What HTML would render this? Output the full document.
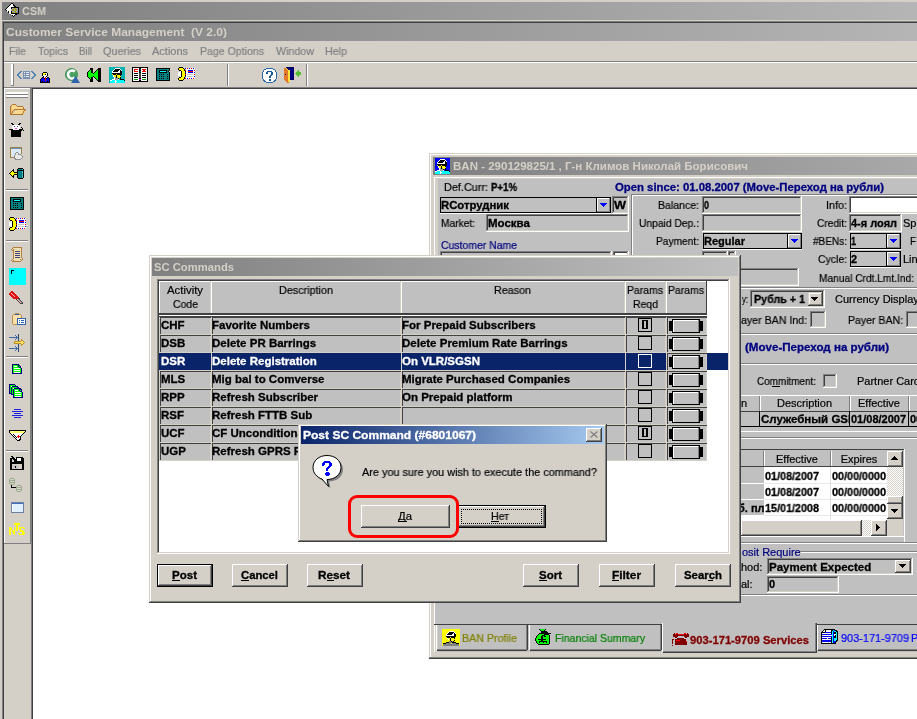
<!DOCTYPE html><html><head><meta charset="utf-8"><style>
html,body{margin:0;padding:0;width:917px;height:719px;overflow:hidden;background:#fff}
.a{position:absolute}
.t{position:absolute;white-space:pre;will-change:transform;-webkit-text-stroke:0.2px currentColor}
.t[style*="bold"]{-webkit-text-stroke:0.3px currentColor}
.t[style*="#d4d0c8"]{-webkit-text-stroke:0}
</style></head><body>
<div class="a" style="left:0px;top:0px;width:917px;height:719px;background:#fff"></div>
<div class="a" style="left:0px;top:0px;width:917px;height:23px;background:#d4d0c8"></div>
<div class="a" style="left:0px;top:0px;width:2px;height:719px;background:#d4d0c8"></div>
<div class="a" style="left:2px;top:2px;width:915px;height:18px;background:linear-gradient(to right,#808080,#c0c0c0 1100px)"></div>
<div class="t" style="left:22.00px;top:6px;font:bold 11px/11px 'Liberation Sans',sans-serif;color:#d4d0c8;transform:scaleX(0.9819);transform-origin:0 0;">CSM</div>
<div class="a" style="left:2px;top:21px;width:915px;height:1px;background:#808080"></div>
<div class="a" style="left:2px;top:21px;width:1px;height:698px;background:#808080"></div>
<div class="a" style="left:3px;top:22px;width:914px;height:1px;background:#404040"></div>
<div class="a" style="left:3px;top:22px;width:1px;height:697px;background:#404040"></div>
<div class="a" style="left:4px;top:23px;width:913px;height:18px;background:linear-gradient(to right,#808080,#c0c0c0 1100px)"></div>
<div class="t" style="left:6.00px;top:27px;font:bold 11px/11px 'Liberation Sans',sans-serif;color:#d4d0c8;transform:scaleX(1.0889);transform-origin:0 0;">Customer Service Management  (V 2.0)</div>
<div class="a" style="left:4px;top:41px;width:913px;height:20px;background:#d4d0c8"></div>
<div class="t" style="left:9.00px;top:46px;font:normal 11px/11px 'Liberation Sans',sans-serif;color:#808080;transform:scaleX(0.9593);transform-origin:0 0;">File</div>
<div class="t" style="left:38.00px;top:46px;font:normal 11px/11px 'Liberation Sans',sans-serif;color:#808080;transform:scaleX(0.9623);transform-origin:0 0;">Topics</div>
<div class="t" style="left:79.00px;top:46px;font:normal 11px/11px 'Liberation Sans',sans-serif;color:#808080;transform:scaleX(0.8859);transform-origin:0 0;">Bill</div>
<div class="t" style="left:103.00px;top:46px;font:normal 11px/11px 'Liberation Sans',sans-serif;color:#808080;transform:scaleX(0.9867);transform-origin:0 0;">Queries</div>
<div class="t" style="left:152.00px;top:46px;font:normal 11px/11px 'Liberation Sans',sans-serif;color:#808080;transform:scaleX(0.9981);transform-origin:0 0;">Actions</div>
<div class="t" style="left:200.00px;top:46px;font:normal 11px/11px 'Liberation Sans',sans-serif;color:#808080;transform:scaleX(0.9601);transform-origin:0 0;">Page Options</div>
<div class="t" style="left:276.00px;top:46px;font:normal 11px/11px 'Liberation Sans',sans-serif;color:#808080;transform:scaleX(0.9707);transform-origin:0 0;">Window</div>
<div class="t" style="left:325.00px;top:46px;font:normal 11px/11px 'Liberation Sans',sans-serif;color:#808080;transform:scaleX(0.9723);transform-origin:0 0;">Help</div>
<div class="a" style="left:4px;top:61px;width:913px;height:1px;background:#808080"></div>
<div class="a" style="left:4px;top:62px;width:913px;height:1px;background:#ffffff"></div>
<div class="a" style="left:4px;top:63px;width:913px;height:24px;background:#d4d0c8"></div>
<div class="a" style="left:4px;top:87px;width:913px;height:1px;background:#808080"></div>
<div class="a" style="left:11px;top:64px;width:1px;height:21px;background:#ffffff"></div>
<div class="a" style="left:12px;top:64px;width:1px;height:21px;background:#ffffff"></div>
<div class="a" style="left:13px;top:64px;width:1px;height:21px;background:#808080"></div>
<div class="a" style="left:11px;top:85px;width:3px;height:1px;background:#808080"></div>
<div class="a" style="left:227px;top:64px;width:1px;height:22px;background:#808080"></div>
<div class="a" style="left:228px;top:64px;width:1px;height:22px;background:#ffffff"></div>
<div class="a" style="left:306px;top:64px;width:1px;height:22px;background:#808080"></div>
<div class="a" style="left:307px;top:64px;width:1px;height:22px;background:#ffffff"></div>
<div class="a" style="left:4px;top:88px;width:28px;height:631px;background:#d4d0c8"></div>
<div class="a" style="left:4px;top:88px;width:27px;height:1px;background:#ffffff"></div>
<div class="a" style="left:4px;top:88px;width:1px;height:455px;background:#ffffff"></div>
<div class="a" style="left:30px;top:88px;width:1px;height:456px;background:#808080"></div>
<div class="a" style="left:4px;top:543px;width:27px;height:1px;background:#808080"></div>
<div class="a" style="left:31px;top:88px;width:1px;height:631px;background:#808080"></div>
<div class="a" style="left:6px;top:92px;width:22px;height:1px;background:#ffffff"></div>
<div class="a" style="left:6px;top:93px;width:22px;height:1px;background:#ffffff"></div>
<div class="a" style="left:6px;top:94px;width:22px;height:1px;background:#808080"></div>
<div class="a" style="left:6px;top:95px;width:22px;height:1px;background:#ffffff"></div>
<div class="a" style="left:6px;top:96px;width:22px;height:1px;background:#ffffff"></div>
<div class="a" style="left:6px;top:97px;width:22px;height:1px;background:#808080"></div>
<div class="a" style="left:6px;top:189px;width:22px;height:1px;background:#808080"></div>
<div class="a" style="left:6px;top:190px;width:22px;height:1px;background:#ffffff"></div>
<div class="a" style="left:6px;top:240px;width:22px;height:1px;background:#808080"></div>
<div class="a" style="left:6px;top:241px;width:22px;height:1px;background:#ffffff"></div>
<div class="a" style="left:6px;top:356px;width:22px;height:1px;background:#808080"></div>
<div class="a" style="left:6px;top:357px;width:22px;height:1px;background:#ffffff"></div>
<div class="a" style="left:6px;top:450px;width:22px;height:1px;background:#808080"></div>
<div class="a" style="left:6px;top:451px;width:22px;height:1px;background:#ffffff"></div>
<div class="a" style="left:32px;top:88px;width:1px;height:631px;background:#404040"></div>
<div class="a" style="left:32px;top:88px;width:885px;height:1px;background:#404040"></div>
<div class="a" style="left:429px;top:153px;width:488px;height:506px;background:#d4d0c8"></div>
<div class="a" style="left:430px;top:154px;width:487px;height:1px;background:#ffffff"></div>
<div class="a" style="left:430px;top:154px;width:1px;height:503px;background:#ffffff"></div>
<div class="a" style="left:429px;top:657px;width:488px;height:1px;background:#808080"></div>
<div class="a" style="left:429px;top:658px;width:488px;height:1px;background:#404040"></div>
<div class="a" style="left:433px;top:157px;width:484px;height:18px;background:linear-gradient(to right,#808080,#c0c0c0 760px)"></div>
<div class="t" style="left:453.00px;top:161px;font:bold 11px/11px 'Liberation Sans',sans-serif;color:#d4d0c8;transform:scaleX(1.0465);transform-origin:0 0;">BAN - 290129825/1 , Г-н Климов Николай Борисович</div>
<div class="a" style="left:434px;top:177px;width:483px;height:1px;background:#ffffff"></div>
<div class="a" style="left:434px;top:177px;width:1px;height:475px;background:#ffffff"></div>
<div class="a" style="left:438px;top:179px;width:479px;height:473px;background:#c0c0c0"></div>
<div class="t" style="left:444.00px;top:182px;font:normal 11px/11px 'Liberation Sans',sans-serif;color:#000;transform:scaleX(0.9862);transform-origin:0 0;">Def.Curr:</div>
<div class="t" style="left:491.00px;top:182px;font:bold 11px/11px 'Liberation Sans',sans-serif;color:#000;transform:scaleX(0.8767);transform-origin:0 0;">P+1%</div>
<div class="t" style="left:615.00px;top:182px;font:bold 11px/11px 'Liberation Sans',sans-serif;color:#000080;transform:scaleX(1.0299);transform-origin:0 0;">Open since: 01.08.2007 (Move-Переход на рубли)</div>
<div class="a" style="left:440px;top:197px;width:171px;height:16px;background:#c0c0c0"></div>
<div class="a" style="left:440px;top:197px;width:171px;height:16px;box-sizing:border-box;border:1px solid #000"></div>
<div class="a" style="left:440px;top:213px;width:171px;height:1px;background:#ffffff"></div>
<div class="a" style="left:596px;top:197px;width:1px;height:16px;background:#000"></div>
<div class="a" style="left:597px;top:198px;width:13px;height:14px;background:#c0c0c0"></div>
<div class="a" style="left:597px;top:198px;width:1px;height:14px;background:#ffffff"></div>
<div class="a" style="left:597px;top:198px;width:13px;height:1px;background:#ffffff"></div>
<div class="a" style="left:597px;top:211px;width:13px;height:1px;background:#808080"></div>
<div class="a" style="left:609px;top:198px;width:1px;height:14px;background:#808080"></div>
<svg class="a" style="left:600px;top:203px" width="7" height="4" viewBox="0 0 7 4" shape-rendering="crispEdges"><rect x="0" y="0" width="7" height="1" fill="#0000ff"/><rect x="1" y="1" width="5" height="1" fill="#0000ff"/><rect x="2" y="2" width="3" height="1" fill="#0000ff"/><rect x="3" y="3" width="1" height="1" fill="#0000ff"/></svg>
<div class="t" style="left:441.00px;top:200px;font:bold 11px/11px 'Liberation Sans',sans-serif;color:#000;transform:scaleX(1.0298);transform-origin:0 0;">RСотрудник</div>
<div class="a" style="left:612px;top:196px;width:17px;height:18px;background:#c0c0c0"></div>
<div class="a" style="left:612px;top:196px;width:17px;height:1px;background:#808080"></div>
<div class="a" style="left:612px;top:196px;width:1px;height:18px;background:#808080"></div>
<div class="a" style="left:613px;top:197px;width:15px;height:1px;background:#404040"></div>
<div class="a" style="left:613px;top:197px;width:1px;height:16px;background:#404040"></div>
<div class="a" style="left:612px;top:213px;width:17px;height:1px;background:#ffffff"></div>
<div class="a" style="left:628px;top:196px;width:1px;height:18px;background:#ffffff"></div>
<div class="a" style="left:613px;top:212px;width:15px;height:1px;background:#d4d0c8"></div>
<div class="a" style="left:627px;top:197px;width:1px;height:16px;background:#d4d0c8"></div>
<div class="t" style="left:614.00px;top:200px;font:bold 11px/11px 'Liberation Sans',sans-serif;color:#000;transform:scaleX(1.1556);transform-origin:0 0;">W</div>
<div class="t" style="left:441.00px;top:218px;font:normal 11px/11px 'Liberation Sans',sans-serif;color:#000;transform:scaleX(0.9271);transform-origin:0 0;">Market:</div>
<div class="a" style="left:486px;top:214px;width:143px;height:18px;background:#c0c0c0"></div>
<div class="a" style="left:486px;top:214px;width:143px;height:1px;background:#808080"></div>
<div class="a" style="left:486px;top:214px;width:1px;height:18px;background:#808080"></div>
<div class="a" style="left:487px;top:215px;width:141px;height:1px;background:#404040"></div>
<div class="a" style="left:487px;top:215px;width:1px;height:16px;background:#404040"></div>
<div class="a" style="left:486px;top:231px;width:143px;height:1px;background:#ffffff"></div>
<div class="a" style="left:628px;top:214px;width:1px;height:18px;background:#ffffff"></div>
<div class="a" style="left:487px;top:230px;width:141px;height:1px;background:#d4d0c8"></div>
<div class="a" style="left:627px;top:215px;width:1px;height:16px;background:#d4d0c8"></div>
<div class="t" style="left:488.00px;top:218px;font:bold 11px/11px 'Liberation Sans',sans-serif;color:#000;transform:scaleX(1.0455);transform-origin:0 0;">Москва</div>
<div class="t" style="left:441.00px;top:240px;font:normal 11px/11px 'Liberation Sans',sans-serif;color:#000080;transform:scaleX(0.9491);transform-origin:0 0;">Customer Name</div>
<div class="a" style="left:440px;top:251px;width:172px;height:8px;background:#c0c0c0"></div>
<div class="a" style="left:440px;top:251px;width:172px;height:1px;background:#808080"></div>
<div class="a" style="left:440px;top:251px;width:1px;height:8px;background:#808080"></div>
<div class="a" style="left:441px;top:252px;width:170px;height:1px;background:#404040"></div>
<div class="a" style="left:441px;top:252px;width:1px;height:6px;background:#404040"></div>
<div class="a" style="left:440px;top:258px;width:172px;height:1px;background:#ffffff"></div>
<div class="a" style="left:611px;top:251px;width:1px;height:8px;background:#ffffff"></div>
<div class="a" style="left:441px;top:257px;width:170px;height:1px;background:#d4d0c8"></div>
<div class="a" style="left:610px;top:252px;width:1px;height:6px;background:#d4d0c8"></div>
<div class="a" style="left:613px;top:251px;width:16px;height:8px;background:#fff"></div>
<div class="a" style="left:613px;top:251px;width:16px;height:1px;background:#808080"></div>
<div class="a" style="left:613px;top:251px;width:1px;height:8px;background:#808080"></div>
<div class="a" style="left:614px;top:252px;width:14px;height:1px;background:#404040"></div>
<div class="a" style="left:614px;top:252px;width:1px;height:6px;background:#404040"></div>
<div class="a" style="left:613px;top:258px;width:16px;height:1px;background:#ffffff"></div>
<div class="a" style="left:628px;top:251px;width:1px;height:8px;background:#ffffff"></div>
<div class="a" style="left:614px;top:257px;width:14px;height:1px;background:#d4d0c8"></div>
<div class="a" style="left:627px;top:252px;width:1px;height:6px;background:#d4d0c8"></div>
<div class="a" style="left:550px;top:255px;width:1px;height:2px;background:#000"></div>
<div class="a" style="left:553px;top:255px;width:1px;height:2px;background:#000"></div>
<div class="a" style="left:632px;top:194px;width:285px;height:1px;background:#808080"></div>
<div class="a" style="left:631px;top:194px;width:1px;height:61px;background:#808080"></div>
<div class="a" style="left:632px;top:195px;width:1px;height:60px;background:#ffffff"></div>
<div class="a" style="left:632px;top:195px;width:285px;height:1px;background:#ffffff"></div>
<div class="t" style="left:658.00px;top:200px;font:normal 11px/11px 'Liberation Sans',sans-serif;color:#000;transform:scaleX(0.9577);transform-origin:0 0;">Balance:</div>
<div class="t" style="left:639.00px;top:218px;font:normal 11px/11px 'Liberation Sans',sans-serif;color:#000;transform:scaleX(0.9345);transform-origin:0 0;">Unpaid Dep.:</div>
<div class="t" style="left:656.00px;top:236px;font:normal 11px/11px 'Liberation Sans',sans-serif;color:#000;transform:scaleX(0.9254);transform-origin:0 0;">Payment:</div>
<div class="a" style="left:702px;top:196px;width:100px;height:18px;background:#c0c0c0"></div>
<div class="a" style="left:702px;top:196px;width:100px;height:1px;background:#808080"></div>
<div class="a" style="left:702px;top:196px;width:1px;height:18px;background:#808080"></div>
<div class="a" style="left:703px;top:197px;width:98px;height:1px;background:#404040"></div>
<div class="a" style="left:703px;top:197px;width:1px;height:16px;background:#404040"></div>
<div class="a" style="left:702px;top:213px;width:100px;height:1px;background:#ffffff"></div>
<div class="a" style="left:801px;top:196px;width:1px;height:18px;background:#ffffff"></div>
<div class="a" style="left:703px;top:212px;width:98px;height:1px;background:#d4d0c8"></div>
<div class="a" style="left:800px;top:197px;width:1px;height:16px;background:#d4d0c8"></div>
<div class="t" style="left:704.00px;top:200px;font:bold 11px/11px 'Liberation Sans',sans-serif;color:#000;transform:scaleX(0.8175);transform-origin:0 0;">0</div>
<div class="a" style="left:702px;top:214px;width:100px;height:18px;background:#c0c0c0"></div>
<div class="a" style="left:702px;top:214px;width:100px;height:1px;background:#808080"></div>
<div class="a" style="left:702px;top:214px;width:1px;height:18px;background:#808080"></div>
<div class="a" style="left:703px;top:215px;width:98px;height:1px;background:#404040"></div>
<div class="a" style="left:703px;top:215px;width:1px;height:16px;background:#404040"></div>
<div class="a" style="left:702px;top:231px;width:100px;height:1px;background:#ffffff"></div>
<div class="a" style="left:801px;top:214px;width:1px;height:18px;background:#ffffff"></div>
<div class="a" style="left:703px;top:230px;width:98px;height:1px;background:#d4d0c8"></div>
<div class="a" style="left:800px;top:215px;width:1px;height:16px;background:#d4d0c8"></div>
<div class="a" style="left:703px;top:233px;width:99px;height:16px;background:#c0c0c0"></div>
<div class="a" style="left:703px;top:233px;width:99px;height:16px;box-sizing:border-box;border:1px solid #000"></div>
<div class="a" style="left:703px;top:249px;width:99px;height:1px;background:#ffffff"></div>
<div class="a" style="left:787px;top:233px;width:1px;height:16px;background:#000"></div>
<div class="a" style="left:788px;top:234px;width:13px;height:14px;background:#c0c0c0"></div>
<div class="a" style="left:788px;top:234px;width:1px;height:14px;background:#ffffff"></div>
<div class="a" style="left:788px;top:234px;width:13px;height:1px;background:#ffffff"></div>
<div class="a" style="left:788px;top:247px;width:13px;height:1px;background:#808080"></div>
<div class="a" style="left:800px;top:234px;width:1px;height:14px;background:#808080"></div>
<svg class="a" style="left:791px;top:239px" width="7" height="4" viewBox="0 0 7 4" shape-rendering="crispEdges"><rect x="0" y="0" width="7" height="1" fill="#0000ff"/><rect x="1" y="1" width="5" height="1" fill="#0000ff"/><rect x="2" y="2" width="3" height="1" fill="#0000ff"/><rect x="3" y="3" width="1" height="1" fill="#0000ff"/></svg>
<div class="t" style="left:704.00px;top:236px;font:bold 11px/11px 'Liberation Sans',sans-serif;color:#000;transform:scaleX(1.0011);transform-origin:0 0;">Regular</div>
<div class="a" style="left:702px;top:251px;width:26px;height:6px;background:#c0c0c0"></div>
<div class="a" style="left:702px;top:251px;width:26px;height:1px;background:#808080"></div>
<div class="a" style="left:702px;top:251px;width:1px;height:6px;background:#808080"></div>
<div class="a" style="left:703px;top:252px;width:24px;height:1px;background:#404040"></div>
<div class="a" style="left:703px;top:252px;width:1px;height:4px;background:#404040"></div>
<div class="a" style="left:702px;top:256px;width:26px;height:1px;background:#ffffff"></div>
<div class="a" style="left:727px;top:251px;width:1px;height:6px;background:#ffffff"></div>
<div class="a" style="left:703px;top:255px;width:24px;height:1px;background:#d4d0c8"></div>
<div class="a" style="left:726px;top:252px;width:1px;height:4px;background:#d4d0c8"></div>
<div class="a" style="left:728px;top:251px;width:8px;height:6px;background:#c0c0c0"></div>
<div class="a" style="left:728px;top:251px;width:8px;height:1px;background:#808080"></div>
<div class="a" style="left:728px;top:251px;width:1px;height:6px;background:#808080"></div>
<div class="a" style="left:729px;top:252px;width:6px;height:1px;background:#404040"></div>
<div class="a" style="left:729px;top:252px;width:1px;height:4px;background:#404040"></div>
<div class="a" style="left:728px;top:256px;width:8px;height:1px;background:#ffffff"></div>
<div class="a" style="left:735px;top:251px;width:1px;height:6px;background:#ffffff"></div>
<div class="a" style="left:729px;top:255px;width:6px;height:1px;background:#d4d0c8"></div>
<div class="a" style="left:734px;top:252px;width:1px;height:4px;background:#d4d0c8"></div>
<div class="t" style="left:826.00px;top:200px;font:normal 11px/11px 'Liberation Sans',sans-serif;color:#000;transform:scaleX(0.9810);transform-origin:0 0;">Info:</div>
<div class="a" style="left:849px;top:196px;width:80px;height:18px;background:#fff"></div>
<div class="a" style="left:849px;top:196px;width:80px;height:1px;background:#808080"></div>
<div class="a" style="left:849px;top:196px;width:1px;height:18px;background:#808080"></div>
<div class="a" style="left:850px;top:197px;width:78px;height:1px;background:#404040"></div>
<div class="a" style="left:850px;top:197px;width:1px;height:16px;background:#404040"></div>
<div class="a" style="left:849px;top:213px;width:80px;height:1px;background:#ffffff"></div>
<div class="a" style="left:928px;top:196px;width:1px;height:18px;background:#ffffff"></div>
<div class="a" style="left:850px;top:212px;width:78px;height:1px;background:#d4d0c8"></div>
<div class="a" style="left:927px;top:197px;width:1px;height:16px;background:#d4d0c8"></div>
<div class="t" style="left:817.00px;top:218px;font:normal 11px/11px 'Liberation Sans',sans-serif;color:#000;transform:scaleX(0.9261);transform-origin:0 0;">Credit:</div>
<div class="a" style="left:849px;top:214px;width:53px;height:18px;background:#c0c0c0"></div>
<div class="a" style="left:849px;top:214px;width:53px;height:1px;background:#808080"></div>
<div class="a" style="left:849px;top:214px;width:1px;height:18px;background:#808080"></div>
<div class="a" style="left:850px;top:215px;width:51px;height:1px;background:#404040"></div>
<div class="a" style="left:850px;top:215px;width:1px;height:16px;background:#404040"></div>
<div class="a" style="left:849px;top:231px;width:53px;height:1px;background:#ffffff"></div>
<div class="a" style="left:901px;top:214px;width:1px;height:18px;background:#ffffff"></div>
<div class="a" style="left:850px;top:230px;width:51px;height:1px;background:#d4d0c8"></div>
<div class="a" style="left:900px;top:215px;width:1px;height:16px;background:#d4d0c8"></div>
<div class="t" style="left:851.00px;top:218px;font:bold 11px/11px 'Liberation Sans',sans-serif;color:#000;transform:scaleX(0.9983);transform-origin:0 0;">4-я лоял</div>
<div class="t" style="left:903px;top:218px;font:normal 11px/11px 'Liberation Sans',sans-serif;color:#000;">Sp</div>
<div class="t" style="left:813.00px;top:236px;font:normal 11px/11px 'Liberation Sans',sans-serif;color:#000;transform:scaleX(0.9118);transform-origin:0 0;">#BENs:</div>
<div class="a" style="left:850px;top:233px;width:51px;height:16px;background:#c0c0c0"></div>
<div class="a" style="left:850px;top:233px;width:51px;height:16px;box-sizing:border-box;border:1px solid #000"></div>
<div class="a" style="left:850px;top:249px;width:51px;height:1px;background:#ffffff"></div>
<div class="a" style="left:886px;top:233px;width:1px;height:16px;background:#000"></div>
<div class="a" style="left:887px;top:234px;width:13px;height:14px;background:#c0c0c0"></div>
<div class="a" style="left:887px;top:234px;width:1px;height:14px;background:#ffffff"></div>
<div class="a" style="left:887px;top:234px;width:13px;height:1px;background:#ffffff"></div>
<div class="a" style="left:887px;top:247px;width:13px;height:1px;background:#808080"></div>
<div class="a" style="left:899px;top:234px;width:1px;height:14px;background:#808080"></div>
<svg class="a" style="left:890px;top:239px" width="7" height="4" viewBox="0 0 7 4" shape-rendering="crispEdges"><rect x="0" y="0" width="7" height="1" fill="#0000ff"/><rect x="1" y="1" width="5" height="1" fill="#0000ff"/><rect x="2" y="2" width="3" height="1" fill="#0000ff"/><rect x="3" y="3" width="1" height="1" fill="#0000ff"/></svg>
<div class="t" style="left:851.00px;top:236px;font:bold 11px/11px 'Liberation Sans',sans-serif;color:#000;transform:scaleX(0.8175);transform-origin:0 0;">1</div>
<div class="t" style="left:910.00px;top:236px;font:normal 11px/11px 'Liberation Sans',sans-serif;color:#000;transform:scaleX(0.8927);transform-origin:0 0;">F</div>
<div class="t" style="left:818.00px;top:254px;font:normal 11px/11px 'Liberation Sans',sans-serif;color:#000;transform:scaleX(0.9490);transform-origin:0 0;">Cycle:</div>
<div class="a" style="left:850px;top:251px;width:51px;height:16px;background:#c0c0c0"></div>
<div class="a" style="left:850px;top:251px;width:51px;height:16px;box-sizing:border-box;border:1px solid #000"></div>
<div class="a" style="left:850px;top:267px;width:51px;height:1px;background:#ffffff"></div>
<div class="a" style="left:886px;top:251px;width:1px;height:16px;background:#000"></div>
<div class="a" style="left:887px;top:252px;width:13px;height:14px;background:#c0c0c0"></div>
<div class="a" style="left:887px;top:252px;width:1px;height:14px;background:#ffffff"></div>
<div class="a" style="left:887px;top:252px;width:13px;height:1px;background:#ffffff"></div>
<div class="a" style="left:887px;top:265px;width:13px;height:1px;background:#808080"></div>
<div class="a" style="left:899px;top:252px;width:1px;height:14px;background:#808080"></div>
<svg class="a" style="left:890px;top:257px" width="7" height="4" viewBox="0 0 7 4" shape-rendering="crispEdges"><rect x="0" y="0" width="7" height="1" fill="#0000ff"/><rect x="1" y="1" width="5" height="1" fill="#0000ff"/><rect x="2" y="2" width="3" height="1" fill="#0000ff"/><rect x="3" y="3" width="1" height="1" fill="#0000ff"/></svg>
<div class="t" style="left:851.00px;top:254px;font:bold 11px/11px 'Liberation Sans',sans-serif;color:#000;transform:scaleX(0.9810);transform-origin:0 0;">2</div>
<div class="t" style="left:903px;top:254px;font:normal 11px/11px 'Liberation Sans',sans-serif;color:#000;">Lin</div>
<div class="a" style="left:738px;top:268px;width:61px;height:18px;background:#c0c0c0"></div>
<div class="a" style="left:738px;top:268px;width:61px;height:1px;background:#808080"></div>
<div class="a" style="left:738px;top:268px;width:1px;height:18px;background:#808080"></div>
<div class="a" style="left:739px;top:269px;width:59px;height:1px;background:#404040"></div>
<div class="a" style="left:739px;top:269px;width:1px;height:16px;background:#404040"></div>
<div class="a" style="left:738px;top:285px;width:61px;height:1px;background:#ffffff"></div>
<div class="a" style="left:798px;top:268px;width:1px;height:18px;background:#ffffff"></div>
<div class="a" style="left:739px;top:284px;width:59px;height:1px;background:#d4d0c8"></div>
<div class="a" style="left:797px;top:269px;width:1px;height:16px;background:#d4d0c8"></div>
<div class="t" style="left:819.00px;top:273px;font:normal 11px/11px 'Liberation Sans',sans-serif;color:#000;transform:scaleX(0.9250);transform-origin:0 0;">Manual Crdt.Lmt.Ind:</div>
<div class="a" style="left:438px;top:287px;width:479px;height:1px;background:#808080"></div>
<div class="a" style="left:438px;top:288px;width:479px;height:1px;background:#ffffff"></div>
<div class="t" style="left:742.00px;top:294px;font:normal 11px/11px 'Liberation Sans',sans-serif;color:#000;transform:scaleX(0.7011);transform-origin:0 0;">y:</div>
<div class="a" style="left:750px;top:290px;width:75px;height:18px;background:#c0c0c0"></div>
<div class="a" style="left:750px;top:290px;width:75px;height:1px;background:#808080"></div>
<div class="a" style="left:750px;top:290px;width:1px;height:18px;background:#808080"></div>
<div class="a" style="left:751px;top:291px;width:73px;height:1px;background:#404040"></div>
<div class="a" style="left:751px;top:291px;width:1px;height:16px;background:#404040"></div>
<div class="a" style="left:750px;top:307px;width:75px;height:1px;background:#ffffff"></div>
<div class="a" style="left:824px;top:290px;width:1px;height:18px;background:#ffffff"></div>
<div class="a" style="left:751px;top:306px;width:73px;height:1px;background:#d4d0c8"></div>
<div class="a" style="left:823px;top:291px;width:1px;height:16px;background:#d4d0c8"></div>
<div class="a" style="left:808px;top:292px;width:15px;height:14px;background:#d4d0c8"></div>
<div class="a" style="left:808px;top:292px;width:15px;height:1px;background:#d4d0c8"></div>
<div class="a" style="left:808px;top:305px;width:15px;height:1px;background:#404040"></div>
<div class="a" style="left:822px;top:292px;width:1px;height:14px;background:#404040"></div>
<div class="a" style="left:809px;top:304px;width:13px;height:1px;background:#808080"></div>
<div class="a" style="left:821px;top:293px;width:1px;height:12px;background:#808080"></div>
<div class="a" style="left:809px;top:293px;width:12px;height:1px;background:#ffffff"></div>
<div class="a" style="left:809px;top:293px;width:1px;height:11px;background:#ffffff"></div>
<svg class="a" style="left:811px;top:297px" width="8" height="4" viewBox="0 0 8 4" shape-rendering="crispEdges"><path d="M0 0H7L3.5 4Z" fill="#000"/></svg>
<div class="t" style="left:754.00px;top:294px;font:bold 11px/11px 'Liberation Sans',sans-serif;color:#000;transform:scaleX(0.9736);transform-origin:0 0;">Рубль + 1</div>
<div class="t" style="left:835px;top:294px;font:normal 11px/11px 'Liberation Sans',sans-serif;color:#000;">Currency Display</div>
<div class="t" style="left:741.00px;top:315px;font:normal 11px/11px 'Liberation Sans',sans-serif;color:#000;transform:scaleX(0.9639);transform-origin:0 0;">ayer BAN Ind:</div>
<div class="a" style="left:810px;top:311px;width:16px;height:17px;background:#c0c0c0"></div>
<div class="a" style="left:810px;top:311px;width:16px;height:1px;background:#808080"></div>
<div class="a" style="left:810px;top:311px;width:1px;height:17px;background:#808080"></div>
<div class="a" style="left:811px;top:312px;width:14px;height:1px;background:#404040"></div>
<div class="a" style="left:811px;top:312px;width:1px;height:15px;background:#404040"></div>
<div class="a" style="left:810px;top:327px;width:16px;height:1px;background:#ffffff"></div>
<div class="a" style="left:825px;top:311px;width:1px;height:17px;background:#ffffff"></div>
<div class="a" style="left:811px;top:326px;width:14px;height:1px;background:#d4d0c8"></div>
<div class="a" style="left:824px;top:312px;width:1px;height:15px;background:#d4d0c8"></div>
<div class="t" style="left:848.00px;top:315px;font:normal 11px/11px 'Liberation Sans',sans-serif;color:#000;transform:scaleX(0.9571);transform-origin:0 0;">Payer BAN:</div>
<div class="a" style="left:906px;top:311px;width:14px;height:17px;background:#c0c0c0"></div>
<div class="a" style="left:906px;top:311px;width:14px;height:1px;background:#808080"></div>
<div class="a" style="left:906px;top:311px;width:1px;height:17px;background:#808080"></div>
<div class="a" style="left:907px;top:312px;width:12px;height:1px;background:#404040"></div>
<div class="a" style="left:907px;top:312px;width:1px;height:15px;background:#404040"></div>
<div class="a" style="left:906px;top:327px;width:14px;height:1px;background:#ffffff"></div>
<div class="a" style="left:919px;top:311px;width:1px;height:17px;background:#ffffff"></div>
<div class="a" style="left:907px;top:326px;width:12px;height:1px;background:#d4d0c8"></div>
<div class="a" style="left:918px;top:312px;width:1px;height:15px;background:#d4d0c8"></div>
<div class="a" style="left:438px;top:333px;width:479px;height:1px;background:#808080"></div>
<div class="a" style="left:438px;top:334px;width:479px;height:1px;background:#ffffff"></div>
<div class="t" style="left:745.00px;top:342px;font:bold 11px/11px 'Liberation Sans',sans-serif;color:#000080;transform:scaleX(1.0506);transform-origin:0 0;">(Move-Переход на рубли)</div>
<div class="a" style="left:438px;top:363px;width:479px;height:1px;background:#808080"></div>
<div class="a" style="left:438px;top:364px;width:479px;height:1px;background:#ffffff"></div>
<div class="t" style="left:757.00px;top:376px;font:normal 11px/11px 'Liberation Sans',sans-serif;color:#000;transform:scaleX(0.9022);transform-origin:0 0;">Commitment:</div>
<div class="a" style="left:772px;top:386px;width:8px;height:1px;background:#000"></div>
<div class="a" style="left:823px;top:374px;width:14px;height:14px;background:#c0c0c0"></div>
<div class="a" style="left:823px;top:374px;width:14px;height:1px;background:#808080"></div>
<div class="a" style="left:823px;top:374px;width:1px;height:14px;background:#808080"></div>
<div class="a" style="left:824px;top:375px;width:12px;height:1px;background:#404040"></div>
<div class="a" style="left:824px;top:375px;width:1px;height:12px;background:#404040"></div>
<div class="a" style="left:823px;top:387px;width:14px;height:1px;background:#ffffff"></div>
<div class="a" style="left:836px;top:374px;width:1px;height:14px;background:#ffffff"></div>
<div class="a" style="left:824px;top:386px;width:12px;height:1px;background:#d4d0c8"></div>
<div class="a" style="left:835px;top:375px;width:1px;height:12px;background:#d4d0c8"></div>
<div class="t" style="left:857px;top:376px;font:normal 11px/11px 'Liberation Sans',sans-serif;color:#000;">Partner Card</div>
<div class="a" style="left:741px;top:395px;width:176px;height:1px;background:#ffffff"></div>
<div class="a" style="left:760px;top:395px;width:1px;height:16px;background:#ffffff"></div>
<div class="a" style="left:850px;top:395px;width:1px;height:16px;background:#ffffff"></div>
<div class="a" style="left:909px;top:395px;width:1px;height:16px;background:#ffffff"></div>
<div class="a" style="left:759px;top:396px;width:1px;height:15px;background:#808080"></div>
<div class="a" style="left:849px;top:396px;width:1px;height:15px;background:#808080"></div>
<div class="a" style="left:908px;top:396px;width:1px;height:15px;background:#808080"></div>
<div class="t" style="left:741px;top:398px;font:normal 11px/11px 'Liberation Sans',sans-serif;color:#000;">n</div>
<div class="t" style="left:760px;width:89px;text-align:center;top:398px;font:normal 11px/11px 'Liberation Sans',sans-serif;color:#000;">Description</div>
<div class="t" style="left:850px;width:58px;text-align:center;top:398px;font:normal 11px/11px 'Liberation Sans',sans-serif;color:#000;">Effective</div>
<div class="a" style="left:741px;top:411px;width:176px;height:1px;background:#404040"></div>
<div class="a" style="left:741px;top:426px;width:176px;height:1px;background:#000"></div>
<div class="a" style="left:759px;top:411px;width:1px;height:16px;background:#000"></div>
<div class="a" style="left:849px;top:411px;width:1px;height:16px;background:#000"></div>
<div class="a" style="left:908px;top:411px;width:1px;height:16px;background:#000"></div>
<div class="a" style="left:761px;top:412px;width:88px;height:14px;overflow:hidden">
<div class="t" style="left:0px;top:2px;font:bold 11.5px/11.5px 'Liberation Sans',sans-serif;color:#000;">Служебный GSM</div>
</div>
<div class="t" style="left:851.00px;top:414px;font:bold 11px/11px 'Liberation Sans',sans-serif;color:#000;transform:scaleX(0.9990);transform-origin:0 0;">01/08/2007</div>
<div class="t" style="left:910px;top:414px;font:bold 11px/11px 'Liberation Sans',sans-serif;color:#000;">00/00/0000</div>
<div class="a" style="left:741px;top:431px;width:176px;height:1px;background:#ffffff"></div>
<div class="a" style="left:741px;top:437px;width:176px;height:1px;background:#808080"></div>
<div class="a" style="left:741px;top:438px;width:176px;height:1px;background:#ffffff"></div>
<div class="a" style="left:741px;top:449px;width:164px;height:1px;background:#404040"></div>
<div class="a" style="left:904px;top:449px;width:1px;height:94px;background:#ffffff"></div>
<div class="a" style="left:741px;top:450px;width:163px;height:93px;background:#c0c0c0"></div>
<div class="a" style="left:764px;top:451px;width:1px;height:15px;background:#ffffff"></div>
<div class="a" style="left:831px;top:451px;width:1px;height:15px;background:#ffffff"></div>
<div class="a" style="left:763px;top:451px;width:1px;height:15px;background:#808080"></div>
<div class="a" style="left:830px;top:451px;width:1px;height:15px;background:#808080"></div>
<div class="t" style="left:764px;width:66px;text-align:center;top:454px;font:normal 11px/11px 'Liberation Sans',sans-serif;color:#000;">Effective</div>
<div class="t" style="left:831px;width:56px;text-align:center;top:454px;font:normal 11px/11px 'Liberation Sans',sans-serif;color:#000;">Expires</div>
<div class="a" style="left:741px;top:466px;width:146px;height:1px;background:#404040"></div>
<div class="a" style="left:764px;top:467px;width:123px;height:53px;background:#fff"></div>
<div class="a" style="left:741px;top:515px;width:23px;height:5px;background:#fff"></div>
<div class="t" style="left:765.00px;top:471px;font:bold 11px/11px 'Liberation Sans',sans-serif;color:#000;transform:scaleX(0.9808);transform-origin:0 0;">01/08/2007</div>
<div class="t" style="left:832.00px;top:471px;font:bold 11px/11px 'Liberation Sans',sans-serif;color:#000;transform:scaleX(0.9808);transform-origin:0 0;">00/00/0000</div>
<div class="a" style="left:741px;top:483px;width:23px;height:1px;background:#ffffff"></div>
<div class="a" style="left:764px;top:483px;width:123px;height:1px;background:#e8e8e8"></div>
<div class="t" style="left:765.00px;top:487px;font:bold 11px/11px 'Liberation Sans',sans-serif;color:#000;transform:scaleX(0.9808);transform-origin:0 0;">01/08/2007</div>
<div class="t" style="left:832.00px;top:487px;font:bold 11px/11px 'Liberation Sans',sans-serif;color:#000;transform:scaleX(0.9808);transform-origin:0 0;">00/00/0000</div>
<div class="a" style="left:741px;top:499px;width:23px;height:1px;background:#ffffff"></div>
<div class="a" style="left:764px;top:499px;width:123px;height:1px;background:#e8e8e8"></div>
<div class="t" style="left:765.00px;top:503px;font:bold 11px/11px 'Liberation Sans',sans-serif;color:#000;transform:scaleX(0.9808);transform-origin:0 0;">15/01/2008</div>
<div class="t" style="left:832.00px;top:503px;font:bold 11px/11px 'Liberation Sans',sans-serif;color:#000;transform:scaleX(0.9808);transform-origin:0 0;">00/00/0000</div>
<div class="a" style="left:741px;top:515px;width:23px;height:1px;background:#ffffff"></div>
<div class="a" style="left:764px;top:515px;width:123px;height:1px;background:#e8e8e8"></div>
<div class="a" style="left:830px;top:467px;width:1px;height:52px;background:#e0e0e0"></div>
<div class="a" style="left:741px;top:500px;width:23px;height:15px;overflow:hidden">
<div class="t" style="left:-3px;top:3px;font:bold 11px/11px 'Liberation Sans',sans-serif;color:#000;">б. пл</div>
</div>
<div class="a" style="left:887px;top:467px;width:16px;height:53px;background:repeating-conic-gradient(#fff 0 25%,#d4d0c8 0 50%) 0 0/2px 2px"></div>
<div class="a" style="left:887px;top:451px;width:16px;height:16px;background:#d4d0c8"></div>
<div class="a" style="left:887px;top:451px;width:16px;height:1px;background:#ffffff"></div>
<div class="a" style="left:887px;top:451px;width:1px;height:16px;background:#ffffff"></div>
<div class="a" style="left:887px;top:466px;width:16px;height:1px;background:#404040"></div>
<div class="a" style="left:902px;top:451px;width:1px;height:16px;background:#404040"></div>
<div class="a" style="left:888px;top:465px;width:14px;height:1px;background:#808080"></div>
<div class="a" style="left:901px;top:452px;width:1px;height:14px;background:#808080"></div>
<svg class="a" style="left:891px;top:456px" width="8" height="5" viewBox="0 0 8 5" shape-rendering="crispEdges"><path d="M0 4H7L3.5 0Z" fill="#000"/></svg>
<div class="a" style="left:887px;top:503px;width:16px;height:16px;background:#d4d0c8"></div>
<div class="a" style="left:887px;top:503px;width:16px;height:1px;background:#ffffff"></div>
<div class="a" style="left:887px;top:503px;width:1px;height:16px;background:#ffffff"></div>
<div class="a" style="left:887px;top:518px;width:16px;height:1px;background:#404040"></div>
<div class="a" style="left:902px;top:503px;width:1px;height:16px;background:#404040"></div>
<div class="a" style="left:888px;top:517px;width:14px;height:1px;background:#808080"></div>
<div class="a" style="left:901px;top:504px;width:1px;height:14px;background:#808080"></div>
<svg class="a" style="left:891px;top:509px" width="8" height="5" viewBox="0 0 8 5" shape-rendering="crispEdges"><path d="M0 0H7L3.5 4Z" fill="#000"/></svg>
<div class="a" style="left:887px;top:496px;width:16px;height:8px;background:#d4d0c8"></div>
<div class="a" style="left:887px;top:496px;width:16px;height:1px;background:#ffffff"></div>
<div class="a" style="left:887px;top:496px;width:1px;height:8px;background:#ffffff"></div>
<div class="a" style="left:887px;top:503px;width:16px;height:1px;background:#404040"></div>
<div class="a" style="left:902px;top:496px;width:1px;height:8px;background:#404040"></div>
<div class="a" style="left:888px;top:502px;width:14px;height:1px;background:#808080"></div>
<div class="a" style="left:901px;top:497px;width:1px;height:6px;background:#808080"></div>
<div class="a" style="left:887px;top:519px;width:16px;height:17px;background:#d4d0c8"></div>
<div class="a" style="left:741px;top:520px;width:146px;height:16px;background:#d4d0c8"></div>
<div class="a" style="left:741px;top:520px;width:121px;height:16px;background:#d4d0c8"></div>
<div class="a" style="left:741px;top:520px;width:121px;height:1px;background:#ffffff"></div>
<div class="a" style="left:741px;top:520px;width:1px;height:16px;background:#ffffff"></div>
<div class="a" style="left:741px;top:535px;width:121px;height:1px;background:#404040"></div>
<div class="a" style="left:861px;top:520px;width:1px;height:16px;background:#404040"></div>
<div class="a" style="left:742px;top:534px;width:119px;height:1px;background:#808080"></div>
<div class="a" style="left:860px;top:521px;width:1px;height:14px;background:#808080"></div>
<div class="a" style="left:862px;top:520px;width:9px;height:16px;background:repeating-conic-gradient(#fff 0 25%,#d4d0c8 0 50%) 0 0/2px 2px"></div>
<div class="a" style="left:871px;top:520px;width:16px;height:16px;background:#d4d0c8"></div>
<div class="a" style="left:871px;top:520px;width:16px;height:1px;background:#ffffff"></div>
<div class="a" style="left:871px;top:520px;width:1px;height:16px;background:#ffffff"></div>
<div class="a" style="left:871px;top:535px;width:16px;height:1px;background:#404040"></div>
<div class="a" style="left:886px;top:520px;width:1px;height:16px;background:#404040"></div>
<div class="a" style="left:872px;top:534px;width:14px;height:1px;background:#808080"></div>
<div class="a" style="left:885px;top:521px;width:1px;height:14px;background:#808080"></div>
<svg class="a" style="left:876px;top:524px" width="5" height="8" viewBox="0 0 5 8" shape-rendering="crispEdges"><path d="M0 0V7L4 3.5Z" fill="#000"/></svg>
<div class="a" style="left:741px;top:536px;width:164px;height:1px;background:#ffffff"></div>
<div class="a" style="left:741px;top:542px;width:176px;height:1px;background:#808080"></div>
<div class="a" style="left:741px;top:543px;width:176px;height:1px;background:#ffffff"></div>
<div class="a" style="left:800px;top:551px;width:117px;height:1px;background:#808080"></div>
<div class="a" style="left:800px;top:552px;width:117px;height:1px;background:#ffffff"></div>
<div class="t" style="left:742px;top:547px;font:normal 11px/11px 'Liberation Sans',sans-serif;color:#000080;">osit Require</div>
<div class="t" style="left:741px;top:562px;font:normal 11px/11px 'Liberation Sans',sans-serif;color:#000;">hod:</div>
<div class="a" style="left:767px;top:558px;width:146px;height:17px;background:#c0c0c0"></div>
<div class="a" style="left:767px;top:558px;width:146px;height:1px;background:#808080"></div>
<div class="a" style="left:767px;top:558px;width:1px;height:17px;background:#808080"></div>
<div class="a" style="left:768px;top:559px;width:144px;height:1px;background:#404040"></div>
<div class="a" style="left:768px;top:559px;width:1px;height:15px;background:#404040"></div>
<div class="a" style="left:767px;top:574px;width:146px;height:1px;background:#ffffff"></div>
<div class="a" style="left:912px;top:558px;width:1px;height:17px;background:#ffffff"></div>
<div class="a" style="left:768px;top:573px;width:144px;height:1px;background:#d4d0c8"></div>
<div class="a" style="left:911px;top:559px;width:1px;height:15px;background:#d4d0c8"></div>
<div class="t" style="left:769px;top:562px;font:bold 11.5px/11.5px 'Liberation Sans',sans-serif;color:#000;">Payment Expected</div>
<div class="a" style="left:895px;top:560px;width:16px;height:13px;background:#d4d0c8"></div>
<div class="a" style="left:895px;top:560px;width:16px;height:1px;background:#ffffff"></div>
<div class="a" style="left:895px;top:560px;width:1px;height:13px;background:#ffffff"></div>
<div class="a" style="left:895px;top:572px;width:16px;height:1px;background:#404040"></div>
<div class="a" style="left:910px;top:560px;width:1px;height:13px;background:#404040"></div>
<div class="a" style="left:896px;top:571px;width:14px;height:1px;background:#808080"></div>
<div class="a" style="left:909px;top:561px;width:1px;height:11px;background:#808080"></div>
<svg class="a" style="left:899px;top:564px" width="8" height="4" viewBox="0 0 8 4" shape-rendering="crispEdges"><path d="M0 0H7L3.5 4Z" fill="#000"/></svg>
<div class="t" style="left:741px;top:579px;font:normal 11px/11px 'Liberation Sans',sans-serif;color:#000;">al:</div>
<div class="a" style="left:767px;top:576px;width:72px;height:17px;background:#c0c0c0"></div>
<div class="a" style="left:767px;top:576px;width:72px;height:1px;background:#808080"></div>
<div class="a" style="left:767px;top:576px;width:1px;height:17px;background:#808080"></div>
<div class="a" style="left:768px;top:577px;width:70px;height:1px;background:#404040"></div>
<div class="a" style="left:768px;top:577px;width:1px;height:15px;background:#404040"></div>
<div class="a" style="left:767px;top:592px;width:72px;height:1px;background:#ffffff"></div>
<div class="a" style="left:838px;top:576px;width:1px;height:17px;background:#ffffff"></div>
<div class="a" style="left:768px;top:591px;width:70px;height:1px;background:#d4d0c8"></div>
<div class="a" style="left:837px;top:577px;width:1px;height:15px;background:#d4d0c8"></div>
<div class="t" style="left:769px;top:579px;font:bold 11px/11px 'Liberation Sans',sans-serif;color:#000;">0</div>
<div class="a" style="left:741px;top:594px;width:176px;height:1px;background:#808080"></div>
<div class="a" style="left:741px;top:595px;width:176px;height:1px;background:#ffffff"></div>
<div class="a" style="left:435px;top:560px;width:3px;height:64px;background:#c0c0c0"></div>
<div class="a" style="left:434px;top:624px;width:483px;height:1px;background:#404040"></div>
<div class="a" style="left:436px;top:625px;width:1px;height:25px;background:#ffffff"></div>
<div class="a" style="left:437px;top:650px;width:90px;height:1px;background:#404040"></div>
<div class="a" style="left:437px;top:649px;width:89px;height:1px;background:#808080"></div>
<div class="a" style="left:527px;top:625px;width:1px;height:25px;background:#404040"></div>
<div class="a" style="left:526px;top:625px;width:1px;height:25px;background:#808080"></div>
<div class="a" style="left:529px;top:625px;width:1px;height:25px;background:#ffffff"></div>
<div class="a" style="left:530px;top:650px;width:131px;height:1px;background:#404040"></div>
<div class="a" style="left:530px;top:649px;width:130px;height:1px;background:#808080"></div>
<div class="a" style="left:661px;top:625px;width:1px;height:25px;background:#404040"></div>
<div class="a" style="left:660px;top:625px;width:1px;height:25px;background:#808080"></div>
<div class="a" style="left:817px;top:625px;width:1px;height:25px;background:#ffffff"></div>
<div class="a" style="left:818px;top:650px;width:118px;height:1px;background:#404040"></div>
<div class="a" style="left:818px;top:649px;width:117px;height:1px;background:#808080"></div>
<div class="a" style="left:936px;top:625px;width:1px;height:25px;background:#404040"></div>
<div class="a" style="left:935px;top:625px;width:1px;height:25px;background:#808080"></div>
<div class="a" style="left:662px;top:623px;width:155px;height:29px;background:#c0c0c0"></div>
<div class="a" style="left:662px;top:623px;width:1px;height:29px;background:#ffffff"></div>
<div class="a" style="left:663px;top:652px;width:154px;height:1px;background:#404040"></div>
<div class="a" style="left:663px;top:651px;width:153px;height:1px;background:#808080"></div>
<div class="a" style="left:816px;top:623px;width:1px;height:30px;background:#404040"></div>
<div class="a" style="left:815px;top:623px;width:1px;height:29px;background:#808080"></div>
<div class="t" style="left:462.00px;top:633px;font:normal 11px/11px 'Liberation Sans',sans-serif;color:#808000;transform:scaleX(0.9673);transform-origin:0 0;">BAN Profile</div>
<div class="t" style="left:555.00px;top:633px;font:normal 11px/11px 'Liberation Sans',sans-serif;color:#008000;transform:scaleX(0.9560);transform-origin:0 0;">Financial Summary</div>
<div class="t" style="left:690.00px;top:635px;font:bold 11px/11px 'Liberation Sans',sans-serif;color:#800000;transform:scaleX(1.0187);transform-origin:0 0;">903-171-9709 Services</div>
<div class="t" style="left:841.00px;top:633px;font:normal 11px/11px 'Liberation Sans',sans-serif;color:#0000ff;transform:scaleX(0.9926);transform-origin:0 0;">903-171-9709</div>
<div class="t" style="left:911px;top:633px;font:normal 11px/11px 'Liberation Sans',sans-serif;color:#0000ff;">P</div>
<div class="a" style="left:434px;top:653px;width:483px;height:4px;background:#d4d0c8"></div>
<div class="a" style="left:149px;top:255px;width:592px;height:348px;background:#d4d0c8"></div>
<div class="a" style="left:150px;top:256px;width:590px;height:1px;background:#ffffff"></div>
<div class="a" style="left:150px;top:256px;width:1px;height:346px;background:#ffffff"></div>
<div class="a" style="left:739px;top:256px;width:1px;height:346px;background:#808080"></div>
<div class="a" style="left:740px;top:255px;width:1px;height:348px;background:#404040"></div>
<div class="a" style="left:150px;top:601px;width:590px;height:1px;background:#808080"></div>
<div class="a" style="left:149px;top:602px;width:592px;height:1px;background:#404040"></div>
<div class="a" style="left:152px;top:258px;width:586px;height:18px;background:linear-gradient(to right,#808080,#c0c0c0)"></div>
<div class="t" style="left:154.00px;top:262px;font:bold 11px/11px 'Liberation Sans',sans-serif;color:#d4d0c8;transform:scaleX(1.0226);transform-origin:0 0;">SC Commands</div>
<div class="a" style="left:157px;top:279px;width:572px;height:1px;background:#808080"></div>
<div class="a" style="left:157px;top:279px;width:1px;height:274px;background:#808080"></div>
<div class="a" style="left:158px;top:280px;width:570px;height:1px;background:#404040"></div>
<div class="a" style="left:158px;top:280px;width:1px;height:272px;background:#404040"></div>
<div class="a" style="left:157px;top:553px;width:573px;height:1px;background:#ffffff"></div>
<div class="a" style="left:729px;top:279px;width:1px;height:275px;background:#ffffff"></div>
<div class="a" style="left:158px;top:552px;width:571px;height:1px;background:#d4d0c8"></div>
<div class="a" style="left:728px;top:280px;width:1px;height:273px;background:#d4d0c8"></div>
<div class="a" style="left:159px;top:281px;width:569px;height:271px;background:#fff"></div>
<div class="a" style="left:159px;top:281px;width:548px;height:32px;background:#c0c0c0"></div>
<div class="a" style="left:159px;top:281px;width:547px;height:1px;background:#ffffff"></div>
<div class="a" style="left:159px;top:281px;width:1px;height:32px;background:#ffffff"></div>
<div class="a" style="left:210px;top:281px;width:1px;height:32px;background:#d4d0c8"></div>
<div class="a" style="left:211px;top:281px;width:1px;height:32px;background:#ffffff"></div>
<div class="a" style="left:400px;top:281px;width:1px;height:32px;background:#d4d0c8"></div>
<div class="a" style="left:401px;top:281px;width:1px;height:32px;background:#ffffff"></div>
<div class="a" style="left:624px;top:281px;width:1px;height:32px;background:#d4d0c8"></div>
<div class="a" style="left:625px;top:281px;width:1px;height:32px;background:#ffffff"></div>
<div class="a" style="left:665px;top:281px;width:1px;height:32px;background:#d4d0c8"></div>
<div class="a" style="left:666px;top:281px;width:1px;height:32px;background:#ffffff"></div>
<div class="a" style="left:706px;top:281px;width:1px;height:32px;background:#d4d0c8"></div>
<div class="a" style="left:706px;top:281px;width:1px;height:32px;background:#404040"></div>
<div class="a" style="left:159px;top:313px;width:548px;height:1px;background:#404040"></div>
<div class="a" style="left:159px;top:314px;width:548px;height:1px;background:#404040"></div>
<div class="a" style="left:159px;top:315px;width:548px;height:1px;background:#ffffff"></div>
<div class="a" style="left:159px;top:316px;width:548px;height:1px;background:#404040"></div>
<div class="t" style="left:167.00px;top:285px;font:normal 11px/11px 'Liberation Sans',sans-serif;color:#000;transform:scaleX(1.0334);transform-origin:0 0;">Activity</div>
<div class="t" style="left:173.00px;top:299px;font:normal 11px/11px 'Liberation Sans',sans-serif;color:#000;transform:scaleX(0.9505);transform-origin:0 0;">Code</div>
<div class="t" style="left:279.00px;top:285px;font:normal 11px/11px 'Liberation Sans',sans-serif;color:#000;transform:scaleX(0.9814);transform-origin:0 0;">Description</div>
<div class="t" style="left:494.00px;top:285px;font:normal 11px/11px 'Liberation Sans',sans-serif;color:#000;transform:scaleX(0.9758);transform-origin:0 0;">Reason</div>
<div class="t" style="left:627.00px;top:285px;font:normal 11px/11px 'Liberation Sans',sans-serif;color:#000;transform:scaleX(0.9500);transform-origin:0 0;">Params</div>
<div class="t" style="left:633.00px;top:299px;font:normal 11px/11px 'Liberation Sans',sans-serif;color:#000;transform:scaleX(0.9505);transform-origin:0 0;">Reqd</div>
<div class="t" style="left:668.00px;top:285px;font:normal 11px/11px 'Liberation Sans',sans-serif;color:#000;transform:scaleX(0.9500);transform-origin:0 0;">Params</div>
<div class="a" style="left:159px;top:317px;width:548px;height:18px;background:#d4d0c8"></div>
<div class="a" style="left:160px;top:318px;width:50px;height:16px;background:#c0c0c0"></div>
<div class="a" style="left:160px;top:317px;width:51px;height:1px;background:#404040"></div>
<div class="a" style="left:160px;top:317px;width:1px;height:17px;background:#404040"></div>
<div class="a" style="left:212px;top:318px;width:188px;height:16px;background:#c0c0c0"></div>
<div class="a" style="left:212px;top:317px;width:189px;height:1px;background:#404040"></div>
<div class="a" style="left:212px;top:317px;width:1px;height:17px;background:#404040"></div>
<div class="a" style="left:402px;top:318px;width:222px;height:16px;background:#c0c0c0"></div>
<div class="a" style="left:402px;top:317px;width:223px;height:1px;background:#404040"></div>
<div class="a" style="left:402px;top:317px;width:1px;height:17px;background:#404040"></div>
<div class="a" style="left:626px;top:318px;width:39px;height:16px;background:#c0c0c0"></div>
<div class="a" style="left:626px;top:317px;width:40px;height:1px;background:#404040"></div>
<div class="a" style="left:626px;top:317px;width:1px;height:17px;background:#404040"></div>
<div class="a" style="left:667px;top:318px;width:39px;height:16px;background:#c0c0c0"></div>
<div class="a" style="left:667px;top:317px;width:40px;height:1px;background:#404040"></div>
<div class="a" style="left:667px;top:317px;width:1px;height:17px;background:#404040"></div>
<div class="t" style="left:161px;top:320px;font:bold 11.5px/11.5px 'Liberation Sans',sans-serif;color:#000;">CHF</div>
<div class="t" style="left:212px;top:320px;font:bold 11.5px/11.5px 'Liberation Sans',sans-serif;color:#000;">Favorite Numbers</div>
<div class="t" style="left:402px;top:320px;font:bold 11.5px/11.5px 'Liberation Sans',sans-serif;color:#000;">For Prepaid Subscribers</div>
<div class="a" style="left:638px;top:318px;width:14px;height:14px;box-sizing:border-box;border:1px solid #000"></div>
<div class="a" style="left:642px;top:320px;width:6px;height:9px;background:#000"></div>
<div class="a" style="left:644px;top:321px;width:2px;height:7px;background:#c0c0c0"></div>
<div class="a" style="left:672px;top:319px;width:28px;height:14px;background:#000"></div>
<div class="a" style="left:673px;top:320px;width:26px;height:12px;background:#c0c0c0"></div>
<div class="a" style="left:673px;top:320px;width:1px;height:12px;background:#ffffff"></div>
<div class="a" style="left:673px;top:320px;width:26px;height:1px;background:#ffffff"></div>
<div class="a" style="left:698px;top:320px;width:1px;height:12px;background:#808080"></div>
<div class="a" style="left:669px;top:321px;width:3px;height:10px;background:#000"></div>
<div class="a" style="left:700px;top:321px;width:3px;height:10px;background:#000"></div>
<div class="a" style="left:159px;top:335px;width:548px;height:18px;background:#d4d0c8"></div>
<div class="a" style="left:160px;top:336px;width:50px;height:16px;background:#c0c0c0"></div>
<div class="a" style="left:160px;top:335px;width:51px;height:1px;background:#404040"></div>
<div class="a" style="left:160px;top:335px;width:1px;height:17px;background:#404040"></div>
<div class="a" style="left:212px;top:336px;width:188px;height:16px;background:#c0c0c0"></div>
<div class="a" style="left:212px;top:335px;width:189px;height:1px;background:#404040"></div>
<div class="a" style="left:212px;top:335px;width:1px;height:17px;background:#404040"></div>
<div class="a" style="left:402px;top:336px;width:222px;height:16px;background:#c0c0c0"></div>
<div class="a" style="left:402px;top:335px;width:223px;height:1px;background:#404040"></div>
<div class="a" style="left:402px;top:335px;width:1px;height:17px;background:#404040"></div>
<div class="a" style="left:626px;top:336px;width:39px;height:16px;background:#c0c0c0"></div>
<div class="a" style="left:626px;top:335px;width:40px;height:1px;background:#404040"></div>
<div class="a" style="left:626px;top:335px;width:1px;height:17px;background:#404040"></div>
<div class="a" style="left:667px;top:336px;width:39px;height:16px;background:#c0c0c0"></div>
<div class="a" style="left:667px;top:335px;width:40px;height:1px;background:#404040"></div>
<div class="a" style="left:667px;top:335px;width:1px;height:17px;background:#404040"></div>
<div class="t" style="left:161px;top:338px;font:bold 11.5px/11.5px 'Liberation Sans',sans-serif;color:#000;">DSB</div>
<div class="t" style="left:212px;top:338px;font:bold 11.5px/11.5px 'Liberation Sans',sans-serif;color:#000;">Delete PR Barrings</div>
<div class="t" style="left:402px;top:338px;font:bold 11.5px/11.5px 'Liberation Sans',sans-serif;color:#000;">Delete Premium Rate Barrings</div>
<div class="a" style="left:638px;top:336px;width:14px;height:14px;box-sizing:border-box;border:1px solid #000"></div>
<div class="a" style="left:672px;top:337px;width:28px;height:14px;background:#000"></div>
<div class="a" style="left:673px;top:338px;width:26px;height:12px;background:#c0c0c0"></div>
<div class="a" style="left:673px;top:338px;width:1px;height:12px;background:#ffffff"></div>
<div class="a" style="left:673px;top:338px;width:26px;height:1px;background:#ffffff"></div>
<div class="a" style="left:698px;top:338px;width:1px;height:12px;background:#808080"></div>
<div class="a" style="left:669px;top:339px;width:3px;height:10px;background:#000"></div>
<div class="a" style="left:700px;top:339px;width:3px;height:10px;background:#000"></div>
<div class="a" style="left:159px;top:353px;width:548px;height:18px;background:#d4d0c8"></div>
<div class="a" style="left:160px;top:353px;width:51px;height:17px;background:#0a246a"></div>
<div class="a" style="left:212px;top:353px;width:189px;height:17px;background:#0a246a"></div>
<div class="a" style="left:402px;top:353px;width:223px;height:17px;background:#0a246a"></div>
<div class="a" style="left:626px;top:353px;width:40px;height:17px;background:#0a246a"></div>
<div class="a" style="left:667px;top:354px;width:39px;height:16px;background:#c0c0c0"></div>
<div class="a" style="left:667px;top:353px;width:40px;height:1px;background:#404040"></div>
<div class="a" style="left:667px;top:353px;width:1px;height:17px;background:#404040"></div>
<div class="a" style="left:707px;top:353px;width:21px;height:17px;background:#0a246a"></div>
<div class="a" style="left:159px;top:353px;width:1px;height:17px;background:#0a246a"></div>
<div class="t" style="left:161px;top:356px;font:bold 11.5px/11.5px 'Liberation Sans',sans-serif;color:#fff;">DSR</div>
<div class="t" style="left:212px;top:356px;font:bold 11.5px/11.5px 'Liberation Sans',sans-serif;color:#fff;">Delete Registration</div>
<div class="t" style="left:402px;top:356px;font:bold 11.5px/11.5px 'Liberation Sans',sans-serif;color:#fff;">On VLR/SGSN</div>
<div class="a" style="left:638px;top:354px;width:14px;height:14px;box-sizing:border-box;border:1px solid #fff"></div>
<div class="a" style="left:672px;top:355px;width:28px;height:14px;background:#000"></div>
<div class="a" style="left:673px;top:356px;width:26px;height:12px;background:#c0c0c0"></div>
<div class="a" style="left:673px;top:356px;width:1px;height:12px;background:#ffffff"></div>
<div class="a" style="left:673px;top:356px;width:26px;height:1px;background:#ffffff"></div>
<div class="a" style="left:698px;top:356px;width:1px;height:12px;background:#808080"></div>
<div class="a" style="left:669px;top:357px;width:3px;height:10px;background:#000"></div>
<div class="a" style="left:700px;top:357px;width:3px;height:10px;background:#000"></div>
<div class="a" style="left:159px;top:371px;width:548px;height:18px;background:#d4d0c8"></div>
<div class="a" style="left:160px;top:372px;width:50px;height:16px;background:#c0c0c0"></div>
<div class="a" style="left:160px;top:371px;width:51px;height:1px;background:#404040"></div>
<div class="a" style="left:160px;top:371px;width:1px;height:17px;background:#404040"></div>
<div class="a" style="left:212px;top:372px;width:188px;height:16px;background:#c0c0c0"></div>
<div class="a" style="left:212px;top:371px;width:189px;height:1px;background:#404040"></div>
<div class="a" style="left:212px;top:371px;width:1px;height:17px;background:#404040"></div>
<div class="a" style="left:402px;top:372px;width:222px;height:16px;background:#c0c0c0"></div>
<div class="a" style="left:402px;top:371px;width:223px;height:1px;background:#404040"></div>
<div class="a" style="left:402px;top:371px;width:1px;height:17px;background:#404040"></div>
<div class="a" style="left:626px;top:372px;width:39px;height:16px;background:#c0c0c0"></div>
<div class="a" style="left:626px;top:371px;width:40px;height:1px;background:#404040"></div>
<div class="a" style="left:626px;top:371px;width:1px;height:17px;background:#404040"></div>
<div class="a" style="left:667px;top:372px;width:39px;height:16px;background:#c0c0c0"></div>
<div class="a" style="left:667px;top:371px;width:40px;height:1px;background:#404040"></div>
<div class="a" style="left:667px;top:371px;width:1px;height:17px;background:#404040"></div>
<div class="t" style="left:161px;top:374px;font:bold 11.5px/11.5px 'Liberation Sans',sans-serif;color:#000;">MLS</div>
<div class="t" style="left:212px;top:374px;font:bold 11.5px/11.5px 'Liberation Sans',sans-serif;color:#000;">Mig bal to Comverse</div>
<div class="t" style="left:402px;top:374px;font:bold 11.5px/11.5px 'Liberation Sans',sans-serif;color:#000;">Migrate Purchased Companies</div>
<div class="a" style="left:638px;top:372px;width:14px;height:14px;box-sizing:border-box;border:1px solid #000"></div>
<div class="a" style="left:672px;top:373px;width:28px;height:14px;background:#000"></div>
<div class="a" style="left:673px;top:374px;width:26px;height:12px;background:#c0c0c0"></div>
<div class="a" style="left:673px;top:374px;width:1px;height:12px;background:#ffffff"></div>
<div class="a" style="left:673px;top:374px;width:26px;height:1px;background:#ffffff"></div>
<div class="a" style="left:698px;top:374px;width:1px;height:12px;background:#808080"></div>
<div class="a" style="left:669px;top:375px;width:3px;height:10px;background:#000"></div>
<div class="a" style="left:700px;top:375px;width:3px;height:10px;background:#000"></div>
<div class="a" style="left:159px;top:389px;width:548px;height:18px;background:#d4d0c8"></div>
<div class="a" style="left:160px;top:390px;width:50px;height:16px;background:#c0c0c0"></div>
<div class="a" style="left:160px;top:389px;width:51px;height:1px;background:#404040"></div>
<div class="a" style="left:160px;top:389px;width:1px;height:17px;background:#404040"></div>
<div class="a" style="left:212px;top:390px;width:188px;height:16px;background:#c0c0c0"></div>
<div class="a" style="left:212px;top:389px;width:189px;height:1px;background:#404040"></div>
<div class="a" style="left:212px;top:389px;width:1px;height:17px;background:#404040"></div>
<div class="a" style="left:402px;top:390px;width:222px;height:16px;background:#c0c0c0"></div>
<div class="a" style="left:402px;top:389px;width:223px;height:1px;background:#404040"></div>
<div class="a" style="left:402px;top:389px;width:1px;height:17px;background:#404040"></div>
<div class="a" style="left:626px;top:390px;width:39px;height:16px;background:#c0c0c0"></div>
<div class="a" style="left:626px;top:389px;width:40px;height:1px;background:#404040"></div>
<div class="a" style="left:626px;top:389px;width:1px;height:17px;background:#404040"></div>
<div class="a" style="left:667px;top:390px;width:39px;height:16px;background:#c0c0c0"></div>
<div class="a" style="left:667px;top:389px;width:40px;height:1px;background:#404040"></div>
<div class="a" style="left:667px;top:389px;width:1px;height:17px;background:#404040"></div>
<div class="t" style="left:161px;top:392px;font:bold 11.5px/11.5px 'Liberation Sans',sans-serif;color:#000;">RPP</div>
<div class="t" style="left:212px;top:392px;font:bold 11.5px/11.5px 'Liberation Sans',sans-serif;color:#000;">Refresh Subscriber</div>
<div class="t" style="left:402px;top:392px;font:bold 11.5px/11.5px 'Liberation Sans',sans-serif;color:#000;">On Prepaid platform</div>
<div class="a" style="left:638px;top:390px;width:14px;height:14px;box-sizing:border-box;border:1px solid #000"></div>
<div class="a" style="left:672px;top:391px;width:28px;height:14px;background:#000"></div>
<div class="a" style="left:673px;top:392px;width:26px;height:12px;background:#c0c0c0"></div>
<div class="a" style="left:673px;top:392px;width:1px;height:12px;background:#ffffff"></div>
<div class="a" style="left:673px;top:392px;width:26px;height:1px;background:#ffffff"></div>
<div class="a" style="left:698px;top:392px;width:1px;height:12px;background:#808080"></div>
<div class="a" style="left:669px;top:393px;width:3px;height:10px;background:#000"></div>
<div class="a" style="left:700px;top:393px;width:3px;height:10px;background:#000"></div>
<div class="a" style="left:159px;top:407px;width:548px;height:18px;background:#d4d0c8"></div>
<div class="a" style="left:160px;top:408px;width:50px;height:16px;background:#c0c0c0"></div>
<div class="a" style="left:160px;top:407px;width:51px;height:1px;background:#404040"></div>
<div class="a" style="left:160px;top:407px;width:1px;height:17px;background:#404040"></div>
<div class="a" style="left:212px;top:408px;width:188px;height:16px;background:#c0c0c0"></div>
<div class="a" style="left:212px;top:407px;width:189px;height:1px;background:#404040"></div>
<div class="a" style="left:212px;top:407px;width:1px;height:17px;background:#404040"></div>
<div class="a" style="left:402px;top:408px;width:222px;height:16px;background:#c0c0c0"></div>
<div class="a" style="left:402px;top:407px;width:223px;height:1px;background:#404040"></div>
<div class="a" style="left:402px;top:407px;width:1px;height:17px;background:#404040"></div>
<div class="a" style="left:626px;top:408px;width:39px;height:16px;background:#c0c0c0"></div>
<div class="a" style="left:626px;top:407px;width:40px;height:1px;background:#404040"></div>
<div class="a" style="left:626px;top:407px;width:1px;height:17px;background:#404040"></div>
<div class="a" style="left:667px;top:408px;width:39px;height:16px;background:#c0c0c0"></div>
<div class="a" style="left:667px;top:407px;width:40px;height:1px;background:#404040"></div>
<div class="a" style="left:667px;top:407px;width:1px;height:17px;background:#404040"></div>
<div class="t" style="left:161px;top:410px;font:bold 11.5px/11.5px 'Liberation Sans',sans-serif;color:#000;">RSF</div>
<div class="t" style="left:212px;top:410px;font:bold 11.5px/11.5px 'Liberation Sans',sans-serif;color:#000;">Refresh FTTB Sub</div>
<div class="t" style="left:402px;top:410px;font:bold 11.5px/11.5px 'Liberation Sans',sans-serif;color:#000;"></div>
<div class="a" style="left:638px;top:408px;width:14px;height:14px;box-sizing:border-box;border:1px solid #000"></div>
<div class="a" style="left:672px;top:409px;width:28px;height:14px;background:#000"></div>
<div class="a" style="left:673px;top:410px;width:26px;height:12px;background:#c0c0c0"></div>
<div class="a" style="left:673px;top:410px;width:1px;height:12px;background:#ffffff"></div>
<div class="a" style="left:673px;top:410px;width:26px;height:1px;background:#ffffff"></div>
<div class="a" style="left:698px;top:410px;width:1px;height:12px;background:#808080"></div>
<div class="a" style="left:669px;top:411px;width:3px;height:10px;background:#000"></div>
<div class="a" style="left:700px;top:411px;width:3px;height:10px;background:#000"></div>
<div class="a" style="left:159px;top:425px;width:548px;height:18px;background:#d4d0c8"></div>
<div class="a" style="left:160px;top:426px;width:50px;height:16px;background:#c0c0c0"></div>
<div class="a" style="left:160px;top:425px;width:51px;height:1px;background:#404040"></div>
<div class="a" style="left:160px;top:425px;width:1px;height:17px;background:#404040"></div>
<div class="a" style="left:212px;top:426px;width:188px;height:16px;background:#c0c0c0"></div>
<div class="a" style="left:212px;top:425px;width:189px;height:1px;background:#404040"></div>
<div class="a" style="left:212px;top:425px;width:1px;height:17px;background:#404040"></div>
<div class="a" style="left:402px;top:426px;width:222px;height:16px;background:#c0c0c0"></div>
<div class="a" style="left:402px;top:425px;width:223px;height:1px;background:#404040"></div>
<div class="a" style="left:402px;top:425px;width:1px;height:17px;background:#404040"></div>
<div class="a" style="left:626px;top:426px;width:39px;height:16px;background:#c0c0c0"></div>
<div class="a" style="left:626px;top:425px;width:40px;height:1px;background:#404040"></div>
<div class="a" style="left:626px;top:425px;width:1px;height:17px;background:#404040"></div>
<div class="a" style="left:667px;top:426px;width:39px;height:16px;background:#c0c0c0"></div>
<div class="a" style="left:667px;top:425px;width:40px;height:1px;background:#404040"></div>
<div class="a" style="left:667px;top:425px;width:1px;height:17px;background:#404040"></div>
<div class="t" style="left:161px;top:428px;font:bold 11.5px/11.5px 'Liberation Sans',sans-serif;color:#000;">UCF</div>
<div class="t" style="left:212px;top:428px;font:bold 11.5px/11.5px 'Liberation Sans',sans-serif;color:#000;">CF Unconditional</div>
<div class="t" style="left:402px;top:428px;font:bold 11.5px/11.5px 'Liberation Sans',sans-serif;color:#000;"></div>
<div class="a" style="left:638px;top:426px;width:14px;height:14px;box-sizing:border-box;border:1px solid #000"></div>
<div class="a" style="left:642px;top:428px;width:6px;height:9px;background:#000"></div>
<div class="a" style="left:644px;top:429px;width:2px;height:7px;background:#c0c0c0"></div>
<div class="a" style="left:672px;top:427px;width:28px;height:14px;background:#000"></div>
<div class="a" style="left:673px;top:428px;width:26px;height:12px;background:#c0c0c0"></div>
<div class="a" style="left:673px;top:428px;width:1px;height:12px;background:#ffffff"></div>
<div class="a" style="left:673px;top:428px;width:26px;height:1px;background:#ffffff"></div>
<div class="a" style="left:698px;top:428px;width:1px;height:12px;background:#808080"></div>
<div class="a" style="left:669px;top:429px;width:3px;height:10px;background:#000"></div>
<div class="a" style="left:700px;top:429px;width:3px;height:10px;background:#000"></div>
<div class="a" style="left:159px;top:443px;width:548px;height:18px;background:#d4d0c8"></div>
<div class="a" style="left:160px;top:444px;width:50px;height:16px;background:#c0c0c0"></div>
<div class="a" style="left:160px;top:443px;width:51px;height:1px;background:#404040"></div>
<div class="a" style="left:160px;top:443px;width:1px;height:17px;background:#404040"></div>
<div class="a" style="left:212px;top:444px;width:188px;height:16px;background:#c0c0c0"></div>
<div class="a" style="left:212px;top:443px;width:189px;height:1px;background:#404040"></div>
<div class="a" style="left:212px;top:443px;width:1px;height:17px;background:#404040"></div>
<div class="a" style="left:402px;top:444px;width:222px;height:16px;background:#c0c0c0"></div>
<div class="a" style="left:402px;top:443px;width:223px;height:1px;background:#404040"></div>
<div class="a" style="left:402px;top:443px;width:1px;height:17px;background:#404040"></div>
<div class="a" style="left:626px;top:444px;width:39px;height:16px;background:#c0c0c0"></div>
<div class="a" style="left:626px;top:443px;width:40px;height:1px;background:#404040"></div>
<div class="a" style="left:626px;top:443px;width:1px;height:17px;background:#404040"></div>
<div class="a" style="left:667px;top:444px;width:39px;height:16px;background:#c0c0c0"></div>
<div class="a" style="left:667px;top:443px;width:40px;height:1px;background:#404040"></div>
<div class="a" style="left:667px;top:443px;width:1px;height:17px;background:#404040"></div>
<div class="t" style="left:161px;top:446px;font:bold 11.5px/11.5px 'Liberation Sans',sans-serif;color:#000;">UGP</div>
<div class="t" style="left:212px;top:446px;font:bold 11.5px/11.5px 'Liberation Sans',sans-serif;color:#000;">Refresh GPRS Profile</div>
<div class="t" style="left:402px;top:446px;font:bold 11.5px/11.5px 'Liberation Sans',sans-serif;color:#000;"></div>
<div class="a" style="left:638px;top:444px;width:14px;height:14px;box-sizing:border-box;border:1px solid #000"></div>
<div class="a" style="left:672px;top:445px;width:28px;height:14px;background:#000"></div>
<div class="a" style="left:673px;top:446px;width:26px;height:12px;background:#c0c0c0"></div>
<div class="a" style="left:673px;top:446px;width:1px;height:12px;background:#ffffff"></div>
<div class="a" style="left:673px;top:446px;width:26px;height:1px;background:#ffffff"></div>
<div class="a" style="left:698px;top:446px;width:1px;height:12px;background:#808080"></div>
<div class="a" style="left:669px;top:447px;width:3px;height:10px;background:#000"></div>
<div class="a" style="left:700px;top:447px;width:3px;height:10px;background:#000"></div>
<div class="a" style="left:157px;top:564px;width:56px;height:23px;background:#000"></div>
<div class="a" style="left:158px;top:565px;width:54px;height:21px;background:#d4d0c8"></div>
<div class="a" style="left:158px;top:565px;width:54px;height:1px;background:#ffffff"></div>
<div class="a" style="left:158px;top:565px;width:1px;height:21px;background:#ffffff"></div>
<div class="a" style="left:158px;top:585px;width:54px;height:1px;background:#404040"></div>
<div class="a" style="left:211px;top:565px;width:1px;height:21px;background:#404040"></div>
<div class="a" style="left:159px;top:584px;width:52px;height:1px;background:#808080"></div>
<div class="a" style="left:210px;top:566px;width:1px;height:19px;background:#808080"></div>
<div class="t" style="left:172.00px;top:570px;font:bold 11px/11px 'Liberation Sans',sans-serif;color:#000;transform:scaleX(1.0488);transform-origin:0 0;">Post</div>
<div class="a" style="left:172px;top:580px;width:8px;height:1px;background:#000"></div>
<div class="a" style="left:232px;top:564px;width:56px;height:23px;background:#d4d0c8"></div>
<div class="a" style="left:232px;top:564px;width:56px;height:1px;background:#ffffff"></div>
<div class="a" style="left:232px;top:564px;width:1px;height:23px;background:#ffffff"></div>
<div class="a" style="left:232px;top:586px;width:56px;height:1px;background:#404040"></div>
<div class="a" style="left:287px;top:564px;width:1px;height:23px;background:#404040"></div>
<div class="a" style="left:233px;top:585px;width:54px;height:1px;background:#808080"></div>
<div class="a" style="left:286px;top:565px;width:1px;height:21px;background:#808080"></div>
<div class="t" style="left:241.00px;top:570px;font:bold 11px/11px 'Liberation Sans',sans-serif;color:#000;transform:scaleX(1.0258);transform-origin:0 0;">Cancel</div>
<div class="a" style="left:241px;top:580px;width:8px;height:1px;background:#000"></div>
<div class="a" style="left:307px;top:564px;width:56px;height:23px;background:#d4d0c8"></div>
<div class="a" style="left:307px;top:564px;width:56px;height:1px;background:#ffffff"></div>
<div class="a" style="left:307px;top:564px;width:1px;height:23px;background:#ffffff"></div>
<div class="a" style="left:307px;top:586px;width:56px;height:1px;background:#404040"></div>
<div class="a" style="left:362px;top:564px;width:1px;height:23px;background:#404040"></div>
<div class="a" style="left:308px;top:585px;width:54px;height:1px;background:#808080"></div>
<div class="a" style="left:361px;top:565px;width:1px;height:21px;background:#808080"></div>
<div class="t" style="left:318.00px;top:570px;font:bold 11px/11px 'Liberation Sans',sans-serif;color:#000;transform:scaleX(1.0679);transform-origin:0 0;">Reset</div>
<div class="a" style="left:327px;top:580px;width:7px;height:1px;background:#000"></div>
<div class="a" style="left:523px;top:564px;width:56px;height:23px;background:#d4d0c8"></div>
<div class="a" style="left:523px;top:564px;width:56px;height:1px;background:#ffffff"></div>
<div class="a" style="left:523px;top:564px;width:1px;height:23px;background:#ffffff"></div>
<div class="a" style="left:523px;top:586px;width:56px;height:1px;background:#404040"></div>
<div class="a" style="left:578px;top:564px;width:1px;height:23px;background:#404040"></div>
<div class="a" style="left:524px;top:585px;width:54px;height:1px;background:#808080"></div>
<div class="a" style="left:577px;top:565px;width:1px;height:21px;background:#808080"></div>
<div class="t" style="left:539.00px;top:570px;font:bold 11px/11px 'Liberation Sans',sans-serif;color:#000;transform:scaleX(1.0455);transform-origin:0 0;">Sort</div>
<div class="a" style="left:539px;top:580px;width:8px;height:1px;background:#000"></div>
<div class="a" style="left:599px;top:564px;width:56px;height:23px;background:#d4d0c8"></div>
<div class="a" style="left:599px;top:564px;width:56px;height:1px;background:#ffffff"></div>
<div class="a" style="left:599px;top:564px;width:1px;height:23px;background:#ffffff"></div>
<div class="a" style="left:599px;top:586px;width:56px;height:1px;background:#404040"></div>
<div class="a" style="left:654px;top:564px;width:1px;height:23px;background:#404040"></div>
<div class="a" style="left:600px;top:585px;width:54px;height:1px;background:#808080"></div>
<div class="a" style="left:653px;top:565px;width:1px;height:21px;background:#808080"></div>
<div class="t" style="left:612.00px;top:570px;font:bold 11px/11px 'Liberation Sans',sans-serif;color:#000;transform:scaleX(1.0783);transform-origin:0 0;">Filter</div>
<div class="a" style="left:612px;top:580px;width:7px;height:1px;background:#000"></div>
<div class="a" style="left:675px;top:564px;width:56px;height:23px;background:#d4d0c8"></div>
<div class="a" style="left:675px;top:564px;width:56px;height:1px;background:#ffffff"></div>
<div class="a" style="left:675px;top:564px;width:1px;height:23px;background:#ffffff"></div>
<div class="a" style="left:675px;top:586px;width:56px;height:1px;background:#404040"></div>
<div class="a" style="left:730px;top:564px;width:1px;height:23px;background:#404040"></div>
<div class="a" style="left:676px;top:585px;width:54px;height:1px;background:#808080"></div>
<div class="a" style="left:729px;top:565px;width:1px;height:21px;background:#808080"></div>
<div class="t" style="left:684.00px;top:570px;font:bold 11px/11px 'Liberation Sans',sans-serif;color:#000;transform:scaleX(1.0358);transform-origin:0 0;">Search</div>
<div class="a" style="left:708px;top:580px;width:5px;height:1px;background:#000"></div>
<div class="a" style="left:298px;top:424px;width:309px;height:118px;background:#d4d0c8"></div>
<div class="a" style="left:299px;top:425px;width:307px;height:1px;background:#ffffff"></div>
<div class="a" style="left:299px;top:425px;width:1px;height:116px;background:#ffffff"></div>
<div class="a" style="left:605px;top:425px;width:1px;height:116px;background:#808080"></div>
<div class="a" style="left:606px;top:424px;width:1px;height:118px;background:#404040"></div>
<div class="a" style="left:299px;top:540px;width:307px;height:1px;background:#808080"></div>
<div class="a" style="left:298px;top:541px;width:309px;height:1px;background:#404040"></div>
<div class="a" style="left:301px;top:426px;width:303px;height:18px;background:linear-gradient(to right,#0a246a,#a6caf0)"></div>
<div class="t" style="left:303.00px;top:430px;font:bold 11px/11px 'Liberation Sans',sans-serif;color:#fff;transform:scaleX(1.0926);transform-origin:0 0;">Post SC Command (#6801067)</div>
<div class="a" style="left:586px;top:428px;width:16px;height:14px;background:#d4d0c8"></div>
<div class="a" style="left:586px;top:428px;width:16px;height:1px;background:#ffffff"></div>
<div class="a" style="left:586px;top:428px;width:1px;height:14px;background:#ffffff"></div>
<div class="a" style="left:586px;top:441px;width:16px;height:1px;background:#404040"></div>
<div class="a" style="left:601px;top:428px;width:1px;height:14px;background:#404040"></div>
<div class="a" style="left:587px;top:440px;width:14px;height:1px;background:#808080"></div>
<div class="a" style="left:600px;top:429px;width:1px;height:12px;background:#808080"></div>
<svg class="a" style="left:590px;top:431px" width="8" height="7" viewBox="0 0 8 7" shape-rendering="crispEdges"><path d="M0.5 0.5L7.5 6.5M7.5 0.5L0.5 6.5" stroke="#808080" stroke-width="1.3" fill="none" shape-rendering="auto"/></svg>
<div class="t" style="left:362.00px;top:467px;font:normal 11px/11px 'Liberation Sans',sans-serif;color:#000;transform:scaleX(0.9880);transform-origin:0 0;">Are you sure you wish to execute the command?</div>
<div class="a" style="left:361px;top:505px;width:89px;height:23px;background:#d4d0c8"></div>
<div class="a" style="left:361px;top:505px;width:89px;height:1px;background:#ffffff"></div>
<div class="a" style="left:361px;top:505px;width:1px;height:23px;background:#ffffff"></div>
<div class="a" style="left:361px;top:527px;width:89px;height:1px;background:#404040"></div>
<div class="a" style="left:449px;top:505px;width:1px;height:23px;background:#404040"></div>
<div class="a" style="left:362px;top:526px;width:87px;height:1px;background:#808080"></div>
<div class="a" style="left:448px;top:506px;width:1px;height:21px;background:#808080"></div>
<div class="t" style="left:398.00px;top:511px;font:normal 11px/11px 'Liberation Sans',sans-serif;color:#000;transform:scaleX(1.0314);transform-origin:0 0;">Да</div>
<div class="a" style="left:398px;top:521px;width:9px;height:1px;background:#000"></div>
<div class="a" style="left:457px;top:505px;width:89px;height:23px;background:#000"></div>
<div class="a" style="left:458px;top:506px;width:87px;height:21px;background:#d4d0c8"></div>
<div class="a" style="left:458px;top:506px;width:87px;height:1px;background:#ffffff"></div>
<div class="a" style="left:458px;top:506px;width:1px;height:21px;background:#ffffff"></div>
<div class="a" style="left:458px;top:526px;width:87px;height:1px;background:#404040"></div>
<div class="a" style="left:544px;top:506px;width:1px;height:21px;background:#404040"></div>
<div class="a" style="left:459px;top:525px;width:85px;height:1px;background:#808080"></div>
<div class="a" style="left:543px;top:507px;width:1px;height:19px;background:#808080"></div>
<div class="a" style="left:461px;top:509px;width:81px;height:15px;box-sizing:border-box;border:1px dotted #000"></div>
<div class="t" style="left:491.00px;top:511px;font:normal 11px/11px 'Liberation Sans',sans-serif;color:#000;transform:scaleX(0.9609);transform-origin:0 0;">Нет</div>
<div class="a" style="left:491px;top:521px;width:8px;height:1px;background:#000"></div>
<div class="a" style="left:348px;top:495px;width:111px;height:43px;box-sizing:border-box;border:3px solid #ff0000;border-radius:9px"></div>
<svg class="a" style="left:17px;top:71px" width="19" height="8" viewBox="0 0 19 8" shape-rendering="crispEdges"><rect x="3" y="0" width="2" height="1" fill="#5080b8"/><rect x="6" y="0" width="7" height="1" fill="#7a90b0"/><rect x="14" y="0" width="2" height="1" fill="#5080b8"/><rect x="2" y="1" width="2" height="1" fill="#5080b8"/><rect x="6" y="1" width="1" height="1" fill="#7a90b0"/><rect x="7" y="1" width="1" height="1" fill="#e8eef8"/><rect x="8" y="1" width="1" height="1" fill="#7a90b0"/><rect x="9" y="1" width="3" height="1" fill="#e8eef8"/><rect x="12" y="1" width="1" height="1" fill="#7a90b0"/><rect x="15" y="1" width="2" height="1" fill="#5080b8"/><rect x="1" y="2" width="2" height="1" fill="#5080b8"/><rect x="6" y="2" width="7" height="1" fill="#7a90b0"/><rect x="16" y="2" width="2" height="1" fill="#5080b8"/><rect x="0" y="3" width="2" height="1" fill="#5080b8"/><rect x="6" y="3" width="1" height="1" fill="#7a90b0"/><rect x="7" y="3" width="1" height="1" fill="#e8eef8"/><rect x="8" y="3" width="1" height="1" fill="#7a90b0"/><rect x="9" y="3" width="3" height="1" fill="#e8eef8"/><rect x="12" y="3" width="1" height="1" fill="#7a90b0"/><rect x="17" y="3" width="2" height="1" fill="#5080b8"/><rect x="0" y="4" width="2" height="1" fill="#5080b8"/><rect x="6" y="4" width="7" height="1" fill="#7a90b0"/><rect x="17" y="4" width="2" height="1" fill="#5080b8"/><rect x="1" y="5" width="2" height="1" fill="#5080b8"/><rect x="6" y="5" width="1" height="1" fill="#7a90b0"/><rect x="7" y="5" width="1" height="1" fill="#e8eef8"/><rect x="8" y="5" width="1" height="1" fill="#7a90b0"/><rect x="9" y="5" width="3" height="1" fill="#e8eef8"/><rect x="12" y="5" width="1" height="1" fill="#7a90b0"/><rect x="16" y="5" width="2" height="1" fill="#5080b8"/><rect x="2" y="6" width="2" height="1" fill="#5080b8"/><rect x="6" y="6" width="7" height="1" fill="#7a90b0"/><rect x="15" y="6" width="2" height="1" fill="#5080b8"/><rect x="3" y="7" width="2" height="1" fill="#5080b8"/><rect x="6" y="7" width="7" height="1" fill="#7a90b0"/><rect x="14" y="7" width="2" height="1" fill="#5080b8"/></svg>
<svg class="a" style="left:40px;top:72px" width="10" height="11" viewBox="0 0 10 11" shape-rendering="crispEdges"><rect x="3" y="0" width="4" height="1" fill="#000"/><rect x="2" y="1" width="1" height="1" fill="#000"/><rect x="3" y="1" width="3" height="1" fill="#ffff00"/><rect x="6" y="1" width="1" height="1" fill="#fff"/><rect x="7" y="1" width="1" height="1" fill="#000"/><rect x="2" y="2" width="1" height="1" fill="#000"/><rect x="3" y="2" width="2" height="1" fill="#ffff00"/><rect x="5" y="2" width="1" height="1" fill="#000"/><rect x="6" y="2" width="1" height="1" fill="#fff"/><rect x="7" y="2" width="1" height="1" fill="#000"/><rect x="2" y="3" width="1" height="1" fill="#000"/><rect x="3" y="3" width="4" height="1" fill="#fff"/><rect x="7" y="3" width="1" height="1" fill="#000"/><rect x="3" y="4" width="1" height="1" fill="#000"/><rect x="4" y="4" width="2" height="1" fill="#fff"/><rect x="6" y="4" width="1" height="1" fill="#000"/><rect x="2" y="5" width="2" height="1" fill="#000"/><rect x="4" y="5" width="1" height="1" fill="#fff"/><rect x="5" y="5" width="1" height="1" fill="#ff0000"/><rect x="6" y="5" width="1" height="1" fill="#fff"/><rect x="7" y="5" width="2" height="1" fill="#000"/><rect x="1" y="6" width="1" height="1" fill="#000"/><rect x="2" y="6" width="2" height="1" fill="#0000ff"/><rect x="4" y="6" width="1" height="1" fill="#000"/><rect x="5" y="6" width="1" height="1" fill="#ff0000"/><rect x="6" y="6" width="1" height="1" fill="#000"/><rect x="7" y="6" width="2" height="1" fill="#0000ff"/><rect x="9" y="6" width="1" height="1" fill="#000"/><rect x="0" y="7" width="1" height="1" fill="#000"/><rect x="1" y="7" width="4" height="1" fill="#0000ff"/><rect x="5" y="7" width="1" height="1" fill="#ff0000"/><rect x="6" y="7" width="3" height="1" fill="#0000ff"/><rect x="9" y="7" width="1" height="1" fill="#000"/><rect x="0" y="8" width="1" height="1" fill="#000"/><rect x="1" y="8" width="4" height="1" fill="#0000ff"/><rect x="5" y="8" width="1" height="1" fill="#ff0000"/><rect x="6" y="8" width="3" height="1" fill="#0000ff"/><rect x="9" y="8" width="1" height="1" fill="#000"/><rect x="0" y="9" width="1" height="1" fill="#000"/><rect x="1" y="9" width="1" height="1" fill="#0000ff"/><rect x="2" y="9" width="1" height="1" fill="#000"/><rect x="3" y="9" width="4" height="1" fill="#0000ff"/><rect x="7" y="9" width="1" height="1" fill="#000"/><rect x="8" y="9" width="1" height="1" fill="#0000ff"/><rect x="9" y="9" width="1" height="1" fill="#000"/><rect x="0" y="10" width="10" height="1" fill="#000"/></svg>
<svg class="a" style="left:64px;top:67px" width="17" height="17" viewBox="0 0 17 17" shape-rendering="crispEdges"><g shape-rendering="auto"><circle cx="7.5" cy="7.5" r="6.5" fill="#3a9050"/><circle cx="7.5" cy="7.5" r="5.5" fill="#4aa060"/><path d="M10.8 4.6A4 4 0 1 0 10.8 10.4" stroke="#fff" stroke-width="2.6" fill="none"/><path d="M7 16L11.5 9L16 16Z" fill="#2f62b0"/></g></svg>
<svg class="a" style="left:87px;top:68px" width="14" height="14" viewBox="0 0 14 14" shape-rendering="crispEdges"><rect x="3" y="0" width="3" height="1" fill="#000"/><rect x="11" y="0" width="3" height="1" fill="#000"/><rect x="3" y="1" width="3" height="1" fill="#000"/><rect x="10" y="1" width="4" height="1" fill="#000"/><rect x="2" y="2" width="1" height="1" fill="#000"/><rect x="3" y="2" width="1" height="1" fill="#00ff00"/><rect x="4" y="2" width="2" height="1" fill="#000"/><rect x="9" y="2" width="1" height="1" fill="#000"/><rect x="10" y="2" width="1" height="1" fill="#00ff00"/><rect x="11" y="2" width="3" height="1" fill="#000"/><rect x="1" y="3" width="1" height="1" fill="#000"/><rect x="2" y="3" width="2" height="1" fill="#00ff00"/><rect x="4" y="3" width="2" height="1" fill="#000"/><rect x="8" y="3" width="1" height="1" fill="#000"/><rect x="9" y="3" width="2" height="1" fill="#00ff00"/><rect x="11" y="3" width="3" height="1" fill="#000"/><rect x="0" y="4" width="1" height="1" fill="#000"/><rect x="1" y="4" width="3" height="1" fill="#00ff00"/><rect x="4" y="4" width="2" height="1" fill="#000"/><rect x="7" y="4" width="1" height="1" fill="#000"/><rect x="8" y="4" width="3" height="1" fill="#00ff00"/><rect x="11" y="4" width="3" height="1" fill="#000"/><rect x="0" y="5" width="1" height="1" fill="#000"/><rect x="1" y="5" width="5" height="1" fill="#00ff00"/><rect x="6" y="5" width="1" height="1" fill="#000"/><rect x="7" y="5" width="4" height="1" fill="#00ff00"/><rect x="11" y="5" width="3" height="1" fill="#000"/><rect x="0" y="6" width="1" height="1" fill="#000"/><rect x="1" y="6" width="10" height="1" fill="#00ff00"/><rect x="11" y="6" width="3" height="1" fill="#000"/><rect x="0" y="7" width="1" height="1" fill="#000"/><rect x="1" y="7" width="10" height="1" fill="#00ff00"/><rect x="11" y="7" width="3" height="1" fill="#000"/><rect x="0" y="8" width="1" height="1" fill="#000"/><rect x="1" y="8" width="5" height="1" fill="#00ff00"/><rect x="6" y="8" width="1" height="1" fill="#000"/><rect x="7" y="8" width="4" height="1" fill="#00ff00"/><rect x="11" y="8" width="3" height="1" fill="#000"/><rect x="1" y="9" width="1" height="1" fill="#000"/><rect x="2" y="9" width="2" height="1" fill="#00ff00"/><rect x="4" y="9" width="2" height="1" fill="#000"/><rect x="7" y="9" width="1" height="1" fill="#000"/><rect x="8" y="9" width="3" height="1" fill="#00ff00"/><rect x="11" y="9" width="3" height="1" fill="#000"/><rect x="2" y="10" width="1" height="1" fill="#000"/><rect x="3" y="10" width="1" height="1" fill="#00ff00"/><rect x="4" y="10" width="2" height="1" fill="#000"/><rect x="8" y="10" width="1" height="1" fill="#000"/><rect x="9" y="10" width="2" height="1" fill="#00ff00"/><rect x="11" y="10" width="3" height="1" fill="#000"/><rect x="3" y="11" width="3" height="1" fill="#000"/><rect x="9" y="11" width="1" height="1" fill="#000"/><rect x="10" y="11" width="1" height="1" fill="#00ff00"/><rect x="11" y="11" width="3" height="1" fill="#000"/><rect x="3" y="12" width="3" height="1" fill="#000"/><rect x="10" y="12" width="4" height="1" fill="#000"/><rect x="3" y="13" width="3" height="1" fill="#000"/><rect x="11" y="13" width="3" height="1" fill="#000"/></svg>
<div class="a" style="left:109px;top:67px;width:16px;height:16px;background:#00b4b4"></div>
<svg class="a" style="left:110px;top:67px" width="15" height="16" viewBox="0 0 15 16" shape-rendering="crispEdges"><rect x="0" y="0" width="15" height="1" fill="#00b4b4"/><rect x="0" y="1" width="5" height="1" fill="#00b4b4"/><rect x="5" y="1" width="5" height="1" fill="#ffffff"/><rect x="10" y="1" width="5" height="1" fill="#00b4b4"/><rect x="0" y="2" width="4" height="1" fill="#00b4b4"/><rect x="4" y="2" width="1" height="1" fill="#ffffff"/><rect x="5" y="2" width="5" height="1" fill="#000"/><rect x="10" y="2" width="1" height="1" fill="#ffffff"/><rect x="11" y="2" width="4" height="1" fill="#00b4b4"/><rect x="0" y="3" width="3" height="1" fill="#00b4b4"/><rect x="3" y="3" width="1" height="1" fill="#ffffff"/><rect x="4" y="3" width="5" height="1" fill="#000"/><rect x="9" y="3" width="1" height="1" fill="#ffffff"/><rect x="10" y="3" width="1" height="1" fill="#000"/><rect x="11" y="3" width="1" height="1" fill="#ffffff"/><rect x="12" y="3" width="3" height="1" fill="#00b4b4"/><rect x="0" y="4" width="2" height="1" fill="#00b4b4"/><rect x="2" y="4" width="1" height="1" fill="#ffffff"/><rect x="3" y="4" width="5" height="1" fill="#000"/><rect x="8" y="4" width="2" height="1" fill="#ffffff"/><rect x="10" y="4" width="2" height="1" fill="#000"/><rect x="12" y="4" width="3" height="1" fill="#00b4b4"/><rect x="0" y="5" width="2" height="1" fill="#00b4b4"/><rect x="2" y="5" width="8" height="1" fill="#ffffff"/><rect x="10" y="5" width="2" height="1" fill="#000"/><rect x="12" y="5" width="3" height="1" fill="#00b4b4"/><rect x="0" y="6" width="2" height="1" fill="#00b4b4"/><rect x="2" y="6" width="10" height="1" fill="#000"/><rect x="12" y="6" width="3" height="1" fill="#00b4b4"/><rect x="0" y="7" width="2" height="1" fill="#00b4b4"/><rect x="2" y="7" width="1" height="1" fill="#ffff00"/><rect x="3" y="7" width="3" height="1" fill="#000"/><rect x="6" y="7" width="1" height="1" fill="#ffff00"/><rect x="7" y="7" width="5" height="1" fill="#000"/><rect x="12" y="7" width="3" height="1" fill="#00b4b4"/><rect x="0" y="8" width="3" height="1" fill="#00b4b4"/><rect x="3" y="8" width="1" height="1" fill="#ffffff"/><rect x="4" y="8" width="2" height="1" fill="#ffff00"/><rect x="6" y="8" width="1" height="1" fill="#000"/><rect x="7" y="8" width="3" height="1" fill="#ffff00"/><rect x="10" y="8" width="1" height="1" fill="#000"/><rect x="11" y="8" width="4" height="1" fill="#00b4b4"/><rect x="0" y="9" width="3" height="1" fill="#00b4b4"/><rect x="3" y="9" width="1" height="1" fill="#ffffff"/><rect x="4" y="9" width="2" height="1" fill="#ffff00"/><rect x="6" y="9" width="1" height="1" fill="#000"/><rect x="7" y="9" width="4" height="1" fill="#ffff00"/><rect x="11" y="9" width="4" height="1" fill="#00b4b4"/><rect x="0" y="10" width="4" height="1" fill="#00b4b4"/><rect x="4" y="10" width="1" height="1" fill="#ffffff"/><rect x="5" y="10" width="1" height="1" fill="#a0a0a0"/><rect x="6" y="10" width="1" height="1" fill="#000"/><rect x="7" y="10" width="1" height="1" fill="#a0a0a0"/><rect x="8" y="10" width="2" height="1" fill="#ffff00"/><rect x="10" y="10" width="1" height="1" fill="#000"/><rect x="11" y="10" width="4" height="1" fill="#00b4b4"/><rect x="0" y="11" width="4" height="1" fill="#00b4b4"/><rect x="4" y="11" width="1" height="1" fill="#ffffff"/><rect x="5" y="11" width="3" height="1" fill="#a0a0a0"/><rect x="8" y="11" width="1" height="1" fill="#000"/><rect x="9" y="11" width="1" height="1" fill="#00b4b4"/><rect x="10" y="11" width="1" height="1" fill="#000"/><rect x="11" y="11" width="4" height="1" fill="#00b4b4"/><rect x="0" y="12" width="2" height="1" fill="#00b4b4"/><rect x="2" y="12" width="3" height="1" fill="#ffffff"/><rect x="5" y="12" width="3" height="1" fill="#a0a0a0"/><rect x="8" y="12" width="1" height="1" fill="#ffffff"/><rect x="9" y="12" width="1" height="1" fill="#00b4b4"/><rect x="10" y="12" width="4" height="1" fill="#000"/><rect x="14" y="12" width="1" height="1" fill="#00b4b4"/><rect x="0" y="13" width="2" height="1" fill="#ffffff"/><rect x="2" y="13" width="3" height="1" fill="#00ffff"/><rect x="5" y="13" width="1" height="1" fill="#ffffff"/><rect x="6" y="13" width="8" height="1" fill="#00ffff"/><rect x="14" y="13" width="1" height="1" fill="#000"/><rect x="0" y="14" width="5" height="1" fill="#00ffff"/><rect x="5" y="14" width="2" height="1" fill="#ffffff"/><rect x="7" y="14" width="8" height="1" fill="#00ffff"/><rect x="0" y="15" width="5" height="1" fill="#00ffff"/><rect x="5" y="15" width="1" height="1" fill="#ffffff"/><rect x="6" y="15" width="9" height="1" fill="#00ffff"/></svg>
<svg class="a" style="left:132px;top:67px" width="16" height="15" viewBox="0 0 16 15" shape-rendering="crispEdges"><rect x="0" y="0" width="16" height="1" fill="#000"/><rect x="0" y="1" width="1" height="1" fill="#000"/><rect x="1" y="1" width="6" height="1" fill="#fff"/><rect x="7" y="1" width="2" height="1" fill="#000"/><rect x="9" y="1" width="6" height="1" fill="#fff"/><rect x="15" y="1" width="1" height="1" fill="#000"/><rect x="0" y="2" width="1" height="1" fill="#000"/><rect x="1" y="2" width="1" height="1" fill="#fff"/><rect x="2" y="2" width="4" height="1" fill="#ff0000"/><rect x="6" y="2" width="1" height="1" fill="#fff"/><rect x="7" y="2" width="1" height="1" fill="#000"/><rect x="8" y="2" width="1" height="1" fill="#008080"/><rect x="9" y="2" width="1" height="1" fill="#fff"/><rect x="10" y="2" width="4" height="1" fill="#ff0000"/><rect x="14" y="2" width="1" height="1" fill="#fff"/><rect x="15" y="2" width="1" height="1" fill="#000"/><rect x="0" y="3" width="1" height="1" fill="#000"/><rect x="1" y="3" width="1" height="1" fill="#fff"/><rect x="2" y="3" width="1" height="1" fill="#ff0000"/><rect x="3" y="3" width="4" height="1" fill="#fff"/><rect x="7" y="3" width="2" height="1" fill="#000"/><rect x="9" y="3" width="2" height="1" fill="#fff"/><rect x="11" y="3" width="2" height="1" fill="#ff0000"/><rect x="13" y="3" width="2" height="1" fill="#fff"/><rect x="15" y="3" width="1" height="1" fill="#000"/><rect x="0" y="4" width="1" height="1" fill="#000"/><rect x="1" y="4" width="1" height="1" fill="#fff"/><rect x="2" y="4" width="4" height="1" fill="#ff0000"/><rect x="6" y="4" width="1" height="1" fill="#fff"/><rect x="7" y="4" width="1" height="1" fill="#000"/><rect x="8" y="4" width="1" height="1" fill="#008080"/><rect x="9" y="4" width="1" height="1" fill="#fff"/><rect x="10" y="4" width="4" height="1" fill="#ff0000"/><rect x="14" y="4" width="1" height="1" fill="#fff"/><rect x="15" y="4" width="1" height="1" fill="#000"/><rect x="0" y="5" width="1" height="1" fill="#000"/><rect x="1" y="5" width="6" height="1" fill="#fff"/><rect x="7" y="5" width="2" height="1" fill="#000"/><rect x="9" y="5" width="6" height="1" fill="#fff"/><rect x="15" y="5" width="1" height="1" fill="#000"/><rect x="0" y="6" width="1" height="1" fill="#000"/><rect x="1" y="6" width="1" height="1" fill="#fff"/><rect x="2" y="6" width="4" height="1" fill="#000"/><rect x="6" y="6" width="1" height="1" fill="#fff"/><rect x="7" y="6" width="2" height="1" fill="#404040"/><rect x="9" y="6" width="1" height="1" fill="#fff"/><rect x="10" y="6" width="4" height="1" fill="#000"/><rect x="14" y="6" width="1" height="1" fill="#fff"/><rect x="15" y="6" width="1" height="1" fill="#000"/><rect x="0" y="7" width="1" height="1" fill="#000"/><rect x="1" y="7" width="6" height="1" fill="#fff"/><rect x="7" y="7" width="2" height="1" fill="#404040"/><rect x="9" y="7" width="6" height="1" fill="#fff"/><rect x="15" y="7" width="1" height="1" fill="#000"/><rect x="0" y="8" width="1" height="1" fill="#000"/><rect x="1" y="8" width="1" height="1" fill="#fff"/><rect x="2" y="8" width="4" height="1" fill="#000"/><rect x="6" y="8" width="1" height="1" fill="#fff"/><rect x="7" y="8" width="2" height="1" fill="#404040"/><rect x="9" y="8" width="1" height="1" fill="#fff"/><rect x="10" y="8" width="4" height="1" fill="#000"/><rect x="14" y="8" width="1" height="1" fill="#fff"/><rect x="15" y="8" width="1" height="1" fill="#000"/><rect x="0" y="9" width="1" height="1" fill="#000"/><rect x="1" y="9" width="6" height="1" fill="#fff"/><rect x="7" y="9" width="2" height="1" fill="#404040"/><rect x="9" y="9" width="6" height="1" fill="#fff"/><rect x="15" y="9" width="1" height="1" fill="#000"/><rect x="0" y="10" width="1" height="1" fill="#000"/><rect x="1" y="10" width="1" height="1" fill="#fff"/><rect x="2" y="10" width="4" height="1" fill="#000"/><rect x="6" y="10" width="1" height="1" fill="#fff"/><rect x="7" y="10" width="2" height="1" fill="#404040"/><rect x="9" y="10" width="1" height="1" fill="#fff"/><rect x="10" y="10" width="4" height="1" fill="#000"/><rect x="14" y="10" width="1" height="1" fill="#fff"/><rect x="15" y="10" width="1" height="1" fill="#000"/><rect x="0" y="11" width="1" height="1" fill="#000"/><rect x="1" y="11" width="6" height="1" fill="#fff"/><rect x="7" y="11" width="2" height="1" fill="#000"/><rect x="9" y="11" width="6" height="1" fill="#fff"/><rect x="15" y="11" width="1" height="1" fill="#000"/><rect x="0" y="12" width="1" height="1" fill="#000"/><rect x="1" y="12" width="1" height="1" fill="#fff"/><rect x="2" y="12" width="4" height="1" fill="#00a000"/><rect x="6" y="12" width="1" height="1" fill="#fff"/><rect x="7" y="12" width="2" height="1" fill="#ff00ff"/><rect x="9" y="12" width="1" height="1" fill="#fff"/><rect x="10" y="12" width="4" height="1" fill="#00a000"/><rect x="14" y="12" width="1" height="1" fill="#fff"/><rect x="15" y="12" width="1" height="1" fill="#000"/><rect x="0" y="13" width="1" height="1" fill="#000"/><rect x="1" y="13" width="6" height="1" fill="#fff"/><rect x="7" y="13" width="2" height="1" fill="#000"/><rect x="9" y="13" width="6" height="1" fill="#fff"/><rect x="15" y="13" width="1" height="1" fill="#000"/><rect x="0" y="14" width="16" height="1" fill="#000"/></svg>
<svg class="a" style="left:156px;top:68px" width="14" height="13" viewBox="0 0 14 13" shape-rendering="crispEdges"><rect x="0" y="0" width="14" height="1" fill="#000"/><rect x="0" y="1" width="1" height="1" fill="#000"/><rect x="1" y="1" width="12" height="1" fill="#008080"/><rect x="13" y="1" width="1" height="1" fill="#000"/><rect x="0" y="2" width="1" height="1" fill="#000"/><rect x="1" y="2" width="2" height="1" fill="#008080"/><rect x="3" y="2" width="8" height="1" fill="#000"/><rect x="11" y="2" width="2" height="1" fill="#008080"/><rect x="13" y="2" width="1" height="1" fill="#000"/><rect x="0" y="3" width="1" height="1" fill="#000"/><rect x="1" y="3" width="2" height="1" fill="#008080"/><rect x="3" y="3" width="1" height="1" fill="#000"/><rect x="4" y="3" width="6" height="1" fill="#00ffff"/><rect x="10" y="3" width="1" height="1" fill="#000"/><rect x="11" y="3" width="1" height="1" fill="#008080"/><rect x="12" y="3" width="1" height="1" fill="#000"/><rect x="0" y="4" width="1" height="1" fill="#000"/><rect x="1" y="4" width="2" height="1" fill="#008080"/><rect x="3" y="4" width="8" height="1" fill="#000"/><rect x="11" y="4" width="2" height="1" fill="#008080"/><rect x="13" y="4" width="1" height="1" fill="#000"/><rect x="0" y="5" width="1" height="1" fill="#000"/><rect x="1" y="5" width="12" height="1" fill="#008080"/><rect x="13" y="5" width="1" height="1" fill="#000"/><rect x="0" y="6" width="1" height="1" fill="#000"/><rect x="1" y="6" width="2" height="1" fill="#008080"/><rect x="3" y="6" width="1" height="1" fill="#000"/><rect x="4" y="6" width="1" height="1" fill="#008080"/><rect x="5" y="6" width="1" height="1" fill="#000"/><rect x="6" y="6" width="1" height="1" fill="#008080"/><rect x="7" y="6" width="1" height="1" fill="#000"/><rect x="8" y="6" width="3" height="1" fill="#008080"/><rect x="11" y="6" width="1" height="1" fill="#000"/><rect x="12" y="6" width="1" height="1" fill="#008080"/><rect x="13" y="6" width="1" height="1" fill="#000"/><rect x="0" y="7" width="1" height="1" fill="#000"/><rect x="1" y="7" width="12" height="1" fill="#008080"/><rect x="13" y="7" width="1" height="1" fill="#000"/><rect x="0" y="8" width="1" height="1" fill="#000"/><rect x="1" y="8" width="2" height="1" fill="#008080"/><rect x="3" y="8" width="1" height="1" fill="#000"/><rect x="4" y="8" width="1" height="1" fill="#008080"/><rect x="5" y="8" width="1" height="1" fill="#000"/><rect x="6" y="8" width="1" height="1" fill="#008080"/><rect x="7" y="8" width="1" height="1" fill="#000"/><rect x="8" y="8" width="3" height="1" fill="#008080"/><rect x="11" y="8" width="1" height="1" fill="#000"/><rect x="12" y="8" width="1" height="1" fill="#008080"/><rect x="13" y="8" width="1" height="1" fill="#000"/><rect x="0" y="9" width="1" height="1" fill="#000"/><rect x="1" y="9" width="12" height="1" fill="#008080"/><rect x="13" y="9" width="1" height="1" fill="#000"/><rect x="0" y="10" width="1" height="1" fill="#000"/><rect x="1" y="10" width="2" height="1" fill="#008080"/><rect x="3" y="10" width="1" height="1" fill="#000"/><rect x="4" y="10" width="1" height="1" fill="#008080"/><rect x="5" y="10" width="1" height="1" fill="#000"/><rect x="6" y="10" width="1" height="1" fill="#008080"/><rect x="7" y="10" width="1" height="1" fill="#000"/><rect x="8" y="10" width="3" height="1" fill="#008080"/><rect x="11" y="10" width="1" height="1" fill="#000"/><rect x="12" y="10" width="1" height="1" fill="#008080"/><rect x="13" y="10" width="1" height="1" fill="#000"/><rect x="0" y="11" width="1" height="1" fill="#000"/><rect x="1" y="11" width="12" height="1" fill="#008080"/><rect x="13" y="11" width="1" height="1" fill="#000"/><rect x="0" y="12" width="14" height="1" fill="#000"/></svg>
<svg class="a" style="left:262px;top:68px" width="15" height="15" viewBox="0 0 15 15" shape-rendering="crispEdges"><rect x="4" y="0" width="7" height="1" fill="#2a6aa8"/><rect x="2" y="1" width="2" height="1" fill="#2a6aa8"/><rect x="4" y="1" width="7" height="1" fill="#fff"/><rect x="11" y="1" width="2" height="1" fill="#2a6aa8"/><rect x="1" y="2" width="1" height="1" fill="#2a6aa8"/><rect x="2" y="2" width="11" height="1" fill="#fff"/><rect x="13" y="2" width="1" height="1" fill="#2a6aa8"/><rect x="1" y="3" width="1" height="1" fill="#2a6aa8"/><rect x="2" y="3" width="3" height="1" fill="#fff"/><rect x="5" y="3" width="5" height="1" fill="#1a5a9a"/><rect x="10" y="3" width="3" height="1" fill="#fff"/><rect x="13" y="3" width="1" height="1" fill="#2a6aa8"/><rect x="0" y="4" width="1" height="1" fill="#2a6aa8"/><rect x="1" y="4" width="3" height="1" fill="#fff"/><rect x="4" y="4" width="2" height="1" fill="#1a5a9a"/><rect x="6" y="4" width="3" height="1" fill="#fff"/><rect x="9" y="4" width="2" height="1" fill="#1a5a9a"/><rect x="11" y="4" width="3" height="1" fill="#fff"/><rect x="14" y="4" width="1" height="1" fill="#2a6aa8"/><rect x="0" y="5" width="1" height="1" fill="#2a6aa8"/><rect x="1" y="5" width="3" height="1" fill="#fff"/><rect x="4" y="5" width="2" height="1" fill="#1a5a9a"/><rect x="6" y="5" width="3" height="1" fill="#fff"/><rect x="9" y="5" width="2" height="1" fill="#1a5a9a"/><rect x="11" y="5" width="3" height="1" fill="#fff"/><rect x="14" y="5" width="1" height="1" fill="#2a6aa8"/><rect x="0" y="6" width="1" height="1" fill="#2a6aa8"/><rect x="1" y="6" width="8" height="1" fill="#fff"/><rect x="9" y="6" width="2" height="1" fill="#1a5a9a"/><rect x="11" y="6" width="3" height="1" fill="#fff"/><rect x="14" y="6" width="1" height="1" fill="#2a6aa8"/><rect x="0" y="7" width="1" height="1" fill="#2a6aa8"/><rect x="1" y="7" width="7" height="1" fill="#fff"/><rect x="8" y="7" width="2" height="1" fill="#1a5a9a"/><rect x="10" y="7" width="4" height="1" fill="#fff"/><rect x="14" y="7" width="1" height="1" fill="#2a6aa8"/><rect x="0" y="8" width="1" height="1" fill="#2a6aa8"/><rect x="1" y="8" width="6" height="1" fill="#fff"/><rect x="7" y="8" width="2" height="1" fill="#1a5a9a"/><rect x="9" y="8" width="5" height="1" fill="#fff"/><rect x="14" y="8" width="1" height="1" fill="#2a6aa8"/><rect x="0" y="9" width="1" height="1" fill="#2a6aa8"/><rect x="1" y="9" width="6" height="1" fill="#fff"/><rect x="7" y="9" width="2" height="1" fill="#1a5a9a"/><rect x="9" y="9" width="5" height="1" fill="#fff"/><rect x="14" y="9" width="1" height="1" fill="#2a6aa8"/><rect x="0" y="10" width="1" height="1" fill="#2a6aa8"/><rect x="1" y="10" width="13" height="1" fill="#fff"/><rect x="14" y="10" width="1" height="1" fill="#2a6aa8"/><rect x="1" y="11" width="1" height="1" fill="#2a6aa8"/><rect x="2" y="11" width="5" height="1" fill="#fff"/><rect x="7" y="11" width="2" height="1" fill="#1a5a9a"/><rect x="9" y="11" width="4" height="1" fill="#fff"/><rect x="13" y="11" width="1" height="1" fill="#2a6aa8"/><rect x="1" y="12" width="2" height="1" fill="#2a6aa8"/><rect x="3" y="12" width="4" height="1" fill="#fff"/><rect x="7" y="12" width="2" height="1" fill="#1a5a9a"/><rect x="9" y="12" width="3" height="1" fill="#fff"/><rect x="12" y="12" width="2" height="1" fill="#2a6aa8"/><rect x="2" y="13" width="2" height="1" fill="#2a6aa8"/><rect x="4" y="13" width="7" height="1" fill="#fff"/><rect x="11" y="13" width="2" height="1" fill="#2a6aa8"/><rect x="4" y="14" width="7" height="1" fill="#2a6aa8"/></svg>
<svg class="a" style="left:5px;top:3px" width="15" height="14" viewBox="0 0 15 14" shape-rendering="crispEdges"><rect x="6" y="0" width="2" height="1" fill="#000"/><rect x="5" y="1" width="1" height="1" fill="#000"/><rect x="6" y="1" width="2" height="1" fill="#fff"/><rect x="8" y="1" width="1" height="1" fill="#000"/><rect x="4" y="2" width="1" height="1" fill="#000"/><rect x="5" y="2" width="3" height="1" fill="#fff"/><rect x="8" y="2" width="2" height="1" fill="#000"/><rect x="3" y="3" width="1" height="1" fill="#000"/><rect x="4" y="3" width="5" height="1" fill="#fff"/><rect x="9" y="3" width="2" height="1" fill="#000"/><rect x="2" y="4" width="1" height="1" fill="#000"/><rect x="3" y="4" width="3" height="1" fill="#fff"/><rect x="6" y="4" width="8" height="1" fill="#000"/><rect x="1" y="5" width="1" height="1" fill="#000"/><rect x="2" y="5" width="4" height="1" fill="#fff"/><rect x="6" y="5" width="1" height="1" fill="#000"/><rect x="7" y="5" width="2" height="1" fill="#9898c8"/><rect x="9" y="5" width="2" height="1" fill="#a0a000"/><rect x="11" y="5" width="2" height="1" fill="#9898c8"/><rect x="13" y="5" width="1" height="1" fill="#000"/><rect x="0" y="6" width="1" height="1" fill="#000"/><rect x="1" y="6" width="5" height="1" fill="#fff"/><rect x="6" y="6" width="1" height="1" fill="#9898c8"/><rect x="7" y="6" width="2" height="1" fill="#a0a000"/><rect x="9" y="6" width="1" height="1" fill="#9898c8"/><rect x="10" y="6" width="2" height="1" fill="#a0a000"/><rect x="12" y="6" width="1" height="1" fill="#9898c8"/><rect x="13" y="6" width="1" height="1" fill="#000"/><rect x="1" y="7" width="1" height="1" fill="#000"/><rect x="2" y="7" width="4" height="1" fill="#fff"/><rect x="6" y="7" width="1" height="1" fill="#9898c8"/><rect x="7" y="7" width="2" height="1" fill="#a0a000"/><rect x="9" y="7" width="1" height="1" fill="#9898c8"/><rect x="10" y="7" width="2" height="1" fill="#a0a000"/><rect x="12" y="7" width="1" height="1" fill="#9898c8"/><rect x="13" y="7" width="1" height="1" fill="#000"/><rect x="2" y="8" width="1" height="1" fill="#fff"/><rect x="3" y="8" width="1" height="1" fill="#000"/><rect x="4" y="8" width="2" height="1" fill="#fff"/><rect x="6" y="8" width="1" height="1" fill="#000"/><rect x="7" y="8" width="2" height="1" fill="#9898c8"/><rect x="9" y="8" width="2" height="1" fill="#a0a000"/><rect x="11" y="8" width="2" height="1" fill="#9898c8"/><rect x="13" y="8" width="1" height="1" fill="#000"/><rect x="3" y="9" width="1" height="1" fill="#000"/><rect x="4" y="9" width="2" height="1" fill="#fff"/><rect x="6" y="9" width="1" height="1" fill="#000"/><rect x="7" y="9" width="2" height="1" fill="#a0a000"/><rect x="9" y="9" width="1" height="1" fill="#9898c8"/><rect x="10" y="9" width="2" height="1" fill="#a0a000"/><rect x="12" y="9" width="1" height="1" fill="#9898c8"/><rect x="13" y="9" width="1" height="1" fill="#000"/><rect x="4" y="10" width="2" height="1" fill="#fff"/><rect x="6" y="10" width="8" height="1" fill="#000"/><rect x="6" y="11" width="4" height="1" fill="#fff"/><rect x="10" y="11" width="2" height="1" fill="#000"/><rect x="7" y="12" width="1" height="1" fill="#000"/><rect x="8" y="12" width="1" height="1" fill="#fff"/><rect x="9" y="12" width="1" height="1" fill="#000"/><rect x="8" y="13" width="1" height="1" fill="#000"/></svg>
<svg class="a" style="left:10px;top:104px" width="16" height="11" viewBox="0 0 16 11" shape-rendering="crispEdges"><rect x="2" y="0" width="4" height="1" fill="#b07830"/><rect x="1" y="1" width="1" height="1" fill="#b07830"/><rect x="2" y="1" width="4" height="1" fill="#f8d890"/><rect x="6" y="1" width="1" height="1" fill="#b07830"/><rect x="0" y="2" width="1" height="1" fill="#b07830"/><rect x="1" y="2" width="1" height="1" fill="#f0c070"/><rect x="2" y="2" width="5" height="1" fill="#f8d890"/><rect x="7" y="2" width="6" height="1" fill="#b07830"/><rect x="0" y="3" width="1" height="1" fill="#b07830"/><rect x="1" y="3" width="1" height="1" fill="#f0c070"/><rect x="2" y="3" width="11" height="1" fill="#f8d890"/><rect x="13" y="3" width="1" height="1" fill="#b07830"/><rect x="0" y="4" width="1" height="1" fill="#b07830"/><rect x="1" y="4" width="1" height="1" fill="#f0c070"/><rect x="2" y="4" width="11" height="1" fill="#f8d890"/><rect x="13" y="4" width="1" height="1" fill="#b07830"/><rect x="0" y="5" width="1" height="1" fill="#b07830"/><rect x="1" y="5" width="1" height="1" fill="#f0c070"/><rect x="2" y="5" width="2" height="1" fill="#f8d890"/><rect x="4" y="5" width="12" height="1" fill="#b07830"/><rect x="0" y="6" width="1" height="1" fill="#b07830"/><rect x="1" y="6" width="1" height="1" fill="#f0c070"/><rect x="2" y="6" width="1" height="1" fill="#f8d890"/><rect x="3" y="6" width="1" height="1" fill="#b07830"/><rect x="4" y="6" width="1" height="1" fill="#f0c070"/><rect x="6" y="6" width="8" height="1" fill="#f8d890"/><rect x="14" y="6" width="1" height="1" fill="#b07830"/><rect x="15" y="6" width="1" height="1" fill="#f0c070"/><rect x="0" y="7" width="1" height="1" fill="#b07830"/><rect x="1" y="7" width="1" height="1" fill="#f0c070"/><rect x="2" y="7" width="1" height="1" fill="#b07830"/><rect x="3" y="7" width="1" height="1" fill="#f0c070"/><rect x="5" y="7" width="8" height="1" fill="#f8d890"/><rect x="13" y="7" width="1" height="1" fill="#b07830"/><rect x="14" y="7" width="1" height="1" fill="#f0c070"/><rect x="0" y="8" width="1" height="1" fill="#b07830"/><rect x="1" y="8" width="1" height="1" fill="#f0c070"/><rect x="2" y="8" width="1" height="1" fill="#b07830"/><rect x="4" y="8" width="9" height="1" fill="#f8d890"/><rect x="13" y="8" width="1" height="1" fill="#b07830"/><rect x="14" y="8" width="1" height="1" fill="#f0c070"/><rect x="0" y="9" width="2" height="1" fill="#b07830"/><rect x="2" y="9" width="1" height="1" fill="#f0c070"/><rect x="3" y="9" width="9" height="1" fill="#f8d890"/><rect x="12" y="9" width="1" height="1" fill="#b07830"/><rect x="13" y="9" width="1" height="1" fill="#f0c070"/><rect x="0" y="10" width="13" height="1" fill="#b07830"/></svg>
<svg class="a" style="left:9px;top:123px" width="15" height="14" viewBox="0 0 15 14" shape-rendering="crispEdges"><rect x="2" y="0" width="2" height="1" fill="#000"/><rect x="10" y="0" width="2" height="1" fill="#000"/><rect x="3" y="1" width="2" height="1" fill="#000"/><rect x="9" y="1" width="2" height="1" fill="#000"/><rect x="4" y="2" width="6" height="1" fill="#fff"/><rect x="3" y="3" width="2" height="1" fill="#fff"/><rect x="5" y="3" width="1" height="1" fill="#4040ff"/><rect x="6" y="3" width="2" height="1" fill="#fff"/><rect x="8" y="3" width="1" height="1" fill="#4040ff"/><rect x="9" y="3" width="2" height="1" fill="#fff"/><rect x="3" y="4" width="8" height="1" fill="#fff"/><rect x="12" y="4" width="1" height="1" fill="#000"/><rect x="3" y="5" width="3" height="1" fill="#fff"/><rect x="6" y="5" width="2" height="1" fill="#ff40ff"/><rect x="8" y="5" width="3" height="1" fill="#fff"/><rect x="13" y="5" width="1" height="1" fill="#000"/><rect x="0" y="6" width="4" height="1" fill="#000"/><rect x="4" y="6" width="6" height="1" fill="#fff"/><rect x="10" y="6" width="4" height="1" fill="#000"/><rect x="2" y="7" width="11" height="1" fill="#000"/><rect x="14" y="7" width="1" height="1" fill="#000"/><rect x="2" y="8" width="10" height="1" fill="#000"/><rect x="2" y="9" width="10" height="1" fill="#000"/><rect x="2" y="10" width="10" height="1" fill="#000"/><rect x="2" y="11" width="10" height="1" fill="#000"/><rect x="2" y="12" width="10" height="1" fill="#000"/><rect x="2" y="13" width="10" height="1" fill="#000"/></svg>
<svg class="a" style="left:10px;top:147px" width="14" height="13" viewBox="0 0 14 13" shape-rendering="crispEdges"><rect x="0" y="0" width="12" height="1" fill="#a08040"/><rect x="0" y="1" width="1" height="1" fill="#a08040"/><rect x="1" y="1" width="10" height="1" fill="#6090d0"/><rect x="11" y="1" width="1" height="1" fill="#a08040"/><rect x="0" y="2" width="1" height="1" fill="#a08040"/><rect x="1" y="2" width="10" height="1" fill="#e8e8e8"/><rect x="11" y="2" width="1" height="1" fill="#a08040"/><rect x="0" y="3" width="1" height="1" fill="#a08040"/><rect x="1" y="3" width="1" height="1" fill="#e8e8e8"/><rect x="2" y="3" width="8" height="1" fill="#d8e8f8"/><rect x="10" y="3" width="1" height="1" fill="#e8e8e8"/><rect x="11" y="3" width="1" height="1" fill="#a08040"/><rect x="0" y="4" width="1" height="1" fill="#a08040"/><rect x="1" y="4" width="1" height="1" fill="#e8e8e8"/><rect x="2" y="4" width="8" height="1" fill="#d8e8f8"/><rect x="10" y="4" width="1" height="1" fill="#e8e8e8"/><rect x="11" y="4" width="1" height="1" fill="#a08040"/><rect x="0" y="5" width="1" height="1" fill="#a08040"/><rect x="1" y="5" width="1" height="1" fill="#e8e8e8"/><rect x="2" y="5" width="4" height="1" fill="#d8e8f8"/><rect x="6" y="5" width="2" height="1" fill="#909090"/><rect x="8" y="5" width="2" height="1" fill="#d8e8f8"/><rect x="10" y="5" width="1" height="1" fill="#e8e8e8"/><rect x="11" y="5" width="1" height="1" fill="#a08040"/><rect x="0" y="6" width="1" height="1" fill="#a08040"/><rect x="1" y="6" width="1" height="1" fill="#e8e8e8"/><rect x="2" y="6" width="3" height="1" fill="#d8e8f8"/><rect x="5" y="6" width="1" height="1" fill="#909090"/><rect x="6" y="6" width="2" height="1" fill="#e8e8e8"/><rect x="8" y="6" width="1" height="1" fill="#909090"/><rect x="9" y="6" width="2" height="1" fill="#d8e8f8"/><rect x="11" y="6" width="1" height="1" fill="#a08040"/><rect x="0" y="7" width="1" height="1" fill="#a08040"/><rect x="1" y="7" width="1" height="1" fill="#e8e8e8"/><rect x="2" y="7" width="3" height="1" fill="#d8e8f8"/><rect x="5" y="7" width="1" height="1" fill="#909090"/><rect x="6" y="7" width="2" height="1" fill="#e8e8e8"/><rect x="8" y="7" width="3" height="1" fill="#909090"/><rect x="0" y="8" width="1" height="1" fill="#a08040"/><rect x="1" y="8" width="1" height="1" fill="#e8e8e8"/><rect x="2" y="8" width="2" height="1" fill="#d8e8f8"/><rect x="4" y="8" width="1" height="1" fill="#909090"/><rect x="5" y="8" width="6" height="1" fill="#e8e8e8"/><rect x="11" y="8" width="1" height="1" fill="#909090"/><rect x="0" y="9" width="1" height="1" fill="#a08040"/><rect x="1" y="9" width="1" height="1" fill="#e8e8e8"/><rect x="2" y="9" width="2" height="1" fill="#d8e8f8"/><rect x="4" y="9" width="1" height="1" fill="#909090"/><rect x="5" y="9" width="7" height="1" fill="#e8e8e8"/><rect x="12" y="9" width="1" height="1" fill="#909090"/><rect x="0" y="10" width="4" height="1" fill="#a08040"/><rect x="4" y="10" width="1" height="1" fill="#909090"/><rect x="5" y="10" width="7" height="1" fill="#e8e8e8"/><rect x="12" y="10" width="1" height="1" fill="#909090"/><rect x="4" y="11" width="2" height="1" fill="#909090"/><rect x="6" y="11" width="5" height="1" fill="#e8e8e8"/><rect x="11" y="11" width="1" height="1" fill="#909090"/><rect x="5" y="12" width="6" height="1" fill="#909090"/></svg>
<svg class="a" style="left:9px;top:168px" width="16" height="11" viewBox="0 0 16 11" shape-rendering="crispEdges"><rect x="9" y="0" width="5" height="1" fill="#000"/><rect x="4" y="1" width="1" height="1" fill="#000"/><rect x="8" y="1" width="1" height="1" fill="#000"/><rect x="9" y="1" width="4" height="1" fill="#008080"/><rect x="13" y="1" width="1" height="1" fill="#40c0c0"/><rect x="14" y="1" width="1" height="1" fill="#000"/><rect x="3" y="2" width="2" height="1" fill="#000"/><rect x="8" y="2" width="7" height="1" fill="#000"/><rect x="2" y="3" width="1" height="1" fill="#000"/><rect x="3" y="3" width="1" height="1" fill="#ffff00"/><rect x="4" y="3" width="1" height="1" fill="#000"/><rect x="8" y="3" width="1" height="1" fill="#000"/><rect x="9" y="3" width="4" height="1" fill="#008080"/><rect x="13" y="3" width="1" height="1" fill="#40c0c0"/><rect x="14" y="3" width="1" height="1" fill="#000"/><rect x="1" y="4" width="1" height="1" fill="#000"/><rect x="2" y="4" width="3" height="1" fill="#ffff00"/><rect x="5" y="4" width="4" height="1" fill="#000"/><rect x="9" y="4" width="4" height="1" fill="#008080"/><rect x="13" y="4" width="1" height="1" fill="#40c0c0"/><rect x="14" y="4" width="1" height="1" fill="#000"/><rect x="0" y="5" width="1" height="1" fill="#000"/><rect x="1" y="5" width="7" height="1" fill="#ffff00"/><rect x="8" y="5" width="1" height="1" fill="#000"/><rect x="9" y="5" width="4" height="1" fill="#008080"/><rect x="13" y="5" width="1" height="1" fill="#40c0c0"/><rect x="14" y="5" width="1" height="1" fill="#000"/><rect x="1" y="6" width="1" height="1" fill="#000"/><rect x="2" y="6" width="3" height="1" fill="#ffff00"/><rect x="5" y="6" width="4" height="1" fill="#000"/><rect x="9" y="6" width="4" height="1" fill="#008080"/><rect x="13" y="6" width="1" height="1" fill="#40c0c0"/><rect x="14" y="6" width="1" height="1" fill="#000"/><rect x="2" y="7" width="1" height="1" fill="#000"/><rect x="3" y="7" width="1" height="1" fill="#ffff00"/><rect x="4" y="7" width="1" height="1" fill="#000"/><rect x="8" y="7" width="1" height="1" fill="#000"/><rect x="9" y="7" width="4" height="1" fill="#008080"/><rect x="13" y="7" width="1" height="1" fill="#40c0c0"/><rect x="14" y="7" width="1" height="1" fill="#000"/><rect x="3" y="8" width="2" height="1" fill="#000"/><rect x="8" y="8" width="1" height="1" fill="#000"/><rect x="9" y="8" width="4" height="1" fill="#008080"/><rect x="13" y="8" width="1" height="1" fill="#40c0c0"/><rect x="14" y="8" width="1" height="1" fill="#000"/><rect x="4" y="9" width="1" height="1" fill="#000"/><rect x="8" y="9" width="1" height="1" fill="#000"/><rect x="9" y="9" width="4" height="1" fill="#008080"/><rect x="13" y="9" width="1" height="1" fill="#40c0c0"/><rect x="14" y="9" width="1" height="1" fill="#000"/><rect x="9" y="10" width="5" height="1" fill="#000"/></svg>
<svg class="a" style="left:10px;top:197px" width="14" height="13" viewBox="0 0 14 13" shape-rendering="crispEdges"><rect x="0" y="0" width="14" height="1" fill="#000"/><rect x="0" y="1" width="1" height="1" fill="#000"/><rect x="1" y="1" width="12" height="1" fill="#008080"/><rect x="13" y="1" width="1" height="1" fill="#000"/><rect x="0" y="2" width="1" height="1" fill="#000"/><rect x="1" y="2" width="2" height="1" fill="#008080"/><rect x="3" y="2" width="8" height="1" fill="#000"/><rect x="11" y="2" width="2" height="1" fill="#008080"/><rect x="13" y="2" width="1" height="1" fill="#000"/><rect x="0" y="3" width="1" height="1" fill="#000"/><rect x="1" y="3" width="2" height="1" fill="#008080"/><rect x="3" y="3" width="1" height="1" fill="#000"/><rect x="4" y="3" width="6" height="1" fill="#00ffff"/><rect x="10" y="3" width="1" height="1" fill="#000"/><rect x="11" y="3" width="2" height="1" fill="#008080"/><rect x="13" y="3" width="1" height="1" fill="#000"/><rect x="0" y="4" width="1" height="1" fill="#000"/><rect x="1" y="4" width="2" height="1" fill="#008080"/><rect x="3" y="4" width="8" height="1" fill="#000"/><rect x="11" y="4" width="2" height="1" fill="#008080"/><rect x="13" y="4" width="1" height="1" fill="#000"/><rect x="0" y="5" width="1" height="1" fill="#000"/><rect x="1" y="5" width="12" height="1" fill="#008080"/><rect x="13" y="5" width="1" height="1" fill="#000"/><rect x="0" y="6" width="1" height="1" fill="#000"/><rect x="1" y="6" width="2" height="1" fill="#008080"/><rect x="3" y="6" width="1" height="1" fill="#000"/><rect x="4" y="6" width="1" height="1" fill="#008080"/><rect x="5" y="6" width="1" height="1" fill="#000"/><rect x="6" y="6" width="1" height="1" fill="#008080"/><rect x="7" y="6" width="1" height="1" fill="#000"/><rect x="8" y="6" width="3" height="1" fill="#008080"/><rect x="11" y="6" width="1" height="1" fill="#000"/><rect x="12" y="6" width="1" height="1" fill="#008080"/><rect x="13" y="6" width="1" height="1" fill="#000"/><rect x="0" y="7" width="1" height="1" fill="#000"/><rect x="1" y="7" width="12" height="1" fill="#008080"/><rect x="13" y="7" width="1" height="1" fill="#000"/><rect x="0" y="8" width="1" height="1" fill="#000"/><rect x="1" y="8" width="2" height="1" fill="#008080"/><rect x="3" y="8" width="1" height="1" fill="#000"/><rect x="4" y="8" width="1" height="1" fill="#008080"/><rect x="5" y="8" width="1" height="1" fill="#000"/><rect x="6" y="8" width="1" height="1" fill="#008080"/><rect x="7" y="8" width="1" height="1" fill="#000"/><rect x="8" y="8" width="3" height="1" fill="#008080"/><rect x="11" y="8" width="1" height="1" fill="#000"/><rect x="12" y="8" width="1" height="1" fill="#008080"/><rect x="13" y="8" width="1" height="1" fill="#000"/><rect x="0" y="9" width="1" height="1" fill="#000"/><rect x="1" y="9" width="12" height="1" fill="#008080"/><rect x="13" y="9" width="1" height="1" fill="#000"/><rect x="0" y="10" width="1" height="1" fill="#000"/><rect x="1" y="10" width="2" height="1" fill="#008080"/><rect x="3" y="10" width="1" height="1" fill="#000"/><rect x="4" y="10" width="1" height="1" fill="#008080"/><rect x="5" y="10" width="1" height="1" fill="#000"/><rect x="6" y="10" width="1" height="1" fill="#008080"/><rect x="7" y="10" width="1" height="1" fill="#000"/><rect x="8" y="10" width="3" height="1" fill="#008080"/><rect x="11" y="10" width="1" height="1" fill="#000"/><rect x="12" y="10" width="1" height="1" fill="#008080"/><rect x="13" y="10" width="1" height="1" fill="#000"/><rect x="0" y="11" width="1" height="1" fill="#000"/><rect x="1" y="11" width="12" height="1" fill="#008080"/><rect x="13" y="11" width="1" height="1" fill="#000"/><rect x="0" y="12" width="14" height="1" fill="#000"/></svg>
<svg class="a" style="left:11px;top:247px" width="12" height="15" viewBox="0 0 12 15" shape-rendering="crispEdges"><rect x="2" y="0" width="9" height="1" fill="#b08040"/><rect x="1" y="1" width="1" height="1" fill="#b08040"/><rect x="2" y="1" width="8" height="1" fill="#f0e0b0"/><rect x="10" y="1" width="1" height="1" fill="#b08040"/><rect x="0" y="2" width="1" height="1" fill="#b08040"/><rect x="1" y="2" width="1" height="1" fill="#f0e0b0"/><rect x="2" y="2" width="1" height="1" fill="#b08040"/><rect x="4" y="2" width="6" height="1" fill="#f0e0b0"/><rect x="10" y="2" width="1" height="1" fill="#b08040"/><rect x="1" y="3" width="2" height="1" fill="#b08040"/><rect x="3" y="3" width="7" height="1" fill="#f0e0b0"/><rect x="10" y="3" width="1" height="1" fill="#b08040"/><rect x="2" y="4" width="1" height="1" fill="#b08040"/><rect x="3" y="4" width="1" height="1" fill="#f0e0b0"/><rect x="4" y="4" width="5" height="1" fill="#404080"/><rect x="9" y="4" width="1" height="1" fill="#f0e0b0"/><rect x="10" y="4" width="1" height="1" fill="#b08040"/><rect x="2" y="5" width="1" height="1" fill="#b08040"/><rect x="3" y="5" width="7" height="1" fill="#f0e0b0"/><rect x="10" y="5" width="1" height="1" fill="#b08040"/><rect x="2" y="6" width="1" height="1" fill="#b08040"/><rect x="3" y="6" width="1" height="1" fill="#f0e0b0"/><rect x="4" y="6" width="5" height="1" fill="#404080"/><rect x="9" y="6" width="1" height="1" fill="#f0e0b0"/><rect x="10" y="6" width="1" height="1" fill="#b08040"/><rect x="2" y="7" width="1" height="1" fill="#b08040"/><rect x="3" y="7" width="7" height="1" fill="#f0e0b0"/><rect x="10" y="7" width="1" height="1" fill="#b08040"/><rect x="2" y="8" width="1" height="1" fill="#b08040"/><rect x="3" y="8" width="1" height="1" fill="#f0e0b0"/><rect x="4" y="8" width="5" height="1" fill="#404080"/><rect x="9" y="8" width="1" height="1" fill="#f0e0b0"/><rect x="10" y="8" width="1" height="1" fill="#b08040"/><rect x="2" y="9" width="1" height="1" fill="#b08040"/><rect x="3" y="9" width="7" height="1" fill="#f0e0b0"/><rect x="10" y="9" width="1" height="1" fill="#b08040"/><rect x="2" y="10" width="1" height="1" fill="#b08040"/><rect x="3" y="10" width="1" height="1" fill="#f0e0b0"/><rect x="4" y="10" width="5" height="1" fill="#404080"/><rect x="9" y="10" width="1" height="1" fill="#f0e0b0"/><rect x="10" y="10" width="1" height="1" fill="#b08040"/><rect x="2" y="11" width="1" height="1" fill="#b08040"/><rect x="3" y="11" width="8" height="1" fill="#f0e0b0"/><rect x="11" y="11" width="1" height="1" fill="#b08040"/><rect x="1" y="12" width="1" height="1" fill="#b08040"/><rect x="2" y="12" width="7" height="1" fill="#f0e0b0"/><rect x="9" y="12" width="1" height="1" fill="#b08040"/><rect x="11" y="12" width="1" height="1" fill="#b08040"/><rect x="0" y="13" width="1" height="1" fill="#b08040"/><rect x="1" y="13" width="1" height="1" fill="#f0e0b0"/><rect x="2" y="13" width="1" height="1" fill="#b08040"/><rect x="4" y="13" width="6" height="1" fill="#f0e0b0"/><rect x="10" y="13" width="1" height="1" fill="#b08040"/><rect x="1" y="14" width="9" height="1" fill="#b08040"/></svg>
<div class="a" style="left:9px;top:268px;width:17px;height:17px;background:#00ffff"></div>
<svg class="a" style="left:11px;top:270px" width="3" height="4" viewBox="0 0 3 4" shape-rendering="crispEdges"><rect x="0" y="0" width="3" height="1" fill="#000"/><rect x="0" y="1" width="1" height="1" fill="#000"/><rect x="0" y="2" width="1" height="1" fill="#000"/><rect x="0" y="3" width="1" height="1" fill="#000"/></svg>
<svg class="a" style="left:9px;top:291px" width="15" height="13" viewBox="0 0 15 13" shape-rendering="crispEdges"><rect x="2" y="0" width="2" height="1" fill="#e01010"/><rect x="1" y="1" width="4" height="1" fill="#e01010"/><rect x="0" y="2" width="2" height="1" fill="#e01010"/><rect x="2" y="2" width="1" height="1" fill="#ffb0b0"/><rect x="3" y="2" width="3" height="1" fill="#e01010"/><rect x="0" y="3" width="3" height="1" fill="#e01010"/><rect x="3" y="3" width="1" height="1" fill="#ffb0b0"/><rect x="4" y="3" width="3" height="1" fill="#e01010"/><rect x="1" y="4" width="3" height="1" fill="#e01010"/><rect x="4" y="4" width="1" height="1" fill="#ffb0b0"/><rect x="5" y="4" width="3" height="1" fill="#e01010"/><rect x="2" y="5" width="3" height="1" fill="#e01010"/><rect x="5" y="5" width="1" height="1" fill="#ffb0b0"/><rect x="6" y="5" width="3" height="1" fill="#e01010"/><rect x="3" y="6" width="7" height="1" fill="#e01010"/><rect x="4" y="7" width="5" height="1" fill="#e01010"/><rect x="9" y="7" width="2" height="1" fill="#404040"/><rect x="7" y="8" width="1" height="1" fill="#404040"/><rect x="8" y="8" width="1" height="1" fill="#ffb0b0"/><rect x="9" y="8" width="1" height="1" fill="#a0a0a0"/><rect x="10" y="8" width="1" height="1" fill="#404040"/><rect x="8" y="9" width="1" height="1" fill="#404040"/><rect x="9" y="9" width="1" height="1" fill="#ffb0b0"/><rect x="10" y="9" width="1" height="1" fill="#a0a0a0"/><rect x="11" y="9" width="1" height="1" fill="#404040"/><rect x="9" y="10" width="1" height="1" fill="#404040"/><rect x="10" y="10" width="1" height="1" fill="#ffb0b0"/><rect x="11" y="10" width="1" height="1" fill="#a0a0a0"/><rect x="12" y="10" width="1" height="1" fill="#404040"/><rect x="10" y="11" width="1" height="1" fill="#404040"/><rect x="11" y="11" width="1" height="1" fill="#ffb0b0"/><rect x="12" y="11" width="1" height="1" fill="#a0a0a0"/><rect x="13" y="11" width="1" height="1" fill="#404040"/><rect x="11" y="12" width="3" height="1" fill="#404040"/></svg>
<svg class="a" style="left:11px;top:313px" width="15" height="12" viewBox="0 0 15 12" shape-rendering="crispEdges"><rect x="4" y="0" width="4" height="1" fill="#c09050"/><rect x="2" y="1" width="2" height="1" fill="#c09050"/><rect x="4" y="1" width="4" height="1" fill="#3060b0"/><rect x="8" y="1" width="2" height="1" fill="#c09050"/><rect x="1" y="2" width="1" height="1" fill="#c09050"/><rect x="2" y="2" width="8" height="1" fill="#f8e0a8"/><rect x="10" y="2" width="1" height="1" fill="#c09050"/><rect x="1" y="3" width="1" height="1" fill="#c09050"/><rect x="2" y="3" width="8" height="1" fill="#f8e0a8"/><rect x="10" y="3" width="1" height="1" fill="#c09050"/><rect x="1" y="4" width="1" height="1" fill="#c09050"/><rect x="2" y="4" width="8" height="1" fill="#f8e0a8"/><rect x="10" y="4" width="1" height="1" fill="#c09050"/><rect x="1" y="5" width="1" height="1" fill="#c09050"/><rect x="2" y="5" width="4" height="1" fill="#f8e0a8"/><rect x="6" y="5" width="9" height="1" fill="#3060b0"/><rect x="1" y="6" width="1" height="1" fill="#c09050"/><rect x="2" y="6" width="4" height="1" fill="#f8e0a8"/><rect x="6" y="6" width="1" height="1" fill="#3060b0"/><rect x="7" y="6" width="7" height="1" fill="#fff"/><rect x="14" y="6" width="1" height="1" fill="#3060b0"/><rect x="1" y="7" width="1" height="1" fill="#c09050"/><rect x="2" y="7" width="4" height="1" fill="#f8e0a8"/><rect x="6" y="7" width="1" height="1" fill="#3060b0"/><rect x="7" y="7" width="1" height="1" fill="#fff"/><rect x="8" y="7" width="1" height="1" fill="#3060b0"/><rect x="9" y="7" width="1" height="1" fill="#fff"/><rect x="10" y="7" width="3" height="1" fill="#3060b0"/><rect x="13" y="7" width="1" height="1" fill="#fff"/><rect x="14" y="7" width="1" height="1" fill="#3060b0"/><rect x="1" y="8" width="1" height="1" fill="#c09050"/><rect x="2" y="8" width="4" height="1" fill="#f8e0a8"/><rect x="6" y="8" width="1" height="1" fill="#3060b0"/><rect x="7" y="8" width="7" height="1" fill="#fff"/><rect x="14" y="8" width="1" height="1" fill="#3060b0"/><rect x="1" y="9" width="1" height="1" fill="#c09050"/><rect x="2" y="9" width="4" height="1" fill="#f8e0a8"/><rect x="6" y="9" width="1" height="1" fill="#3060b0"/><rect x="7" y="9" width="1" height="1" fill="#fff"/><rect x="8" y="9" width="1" height="1" fill="#3060b0"/><rect x="9" y="9" width="1" height="1" fill="#fff"/><rect x="10" y="9" width="3" height="1" fill="#3060b0"/><rect x="13" y="9" width="1" height="1" fill="#fff"/><rect x="14" y="9" width="1" height="1" fill="#3060b0"/><rect x="1" y="10" width="1" height="1" fill="#c09050"/><rect x="2" y="10" width="4" height="1" fill="#f8e0a8"/><rect x="6" y="10" width="1" height="1" fill="#3060b0"/><rect x="7" y="10" width="7" height="1" fill="#fff"/><rect x="14" y="10" width="1" height="1" fill="#3060b0"/><rect x="2" y="11" width="4" height="1" fill="#c09050"/><rect x="6" y="11" width="9" height="1" fill="#3060b0"/></svg>
<svg class="a" style="left:9px;top:334px" width="16" height="18" viewBox="0 0 16 18" shape-rendering="crispEdges"><rect x="9" y="0" width="1" height="1" fill="#304870"/><rect x="6" y="1" width="1" height="1" fill="#4068a8"/><rect x="9" y="1" width="1" height="1" fill="#304870"/><rect x="7" y="2" width="1" height="1" fill="#4068a8"/><rect x="9" y="2" width="1" height="1" fill="#304870"/><rect x="0" y="3" width="9" height="1" fill="#4068a8"/><rect x="9" y="3" width="1" height="1" fill="#304870"/><rect x="7" y="4" width="1" height="1" fill="#4068a8"/><rect x="9" y="4" width="1" height="1" fill="#304870"/><rect x="6" y="5" width="1" height="1" fill="#4068a8"/><rect x="9" y="5" width="1" height="1" fill="#304870"/><rect x="12" y="5" width="1" height="1" fill="#c09020"/><rect x="9" y="6" width="1" height="1" fill="#304870"/><rect x="12" y="6" width="2" height="1" fill="#c09020"/><rect x="5" y="7" width="7" height="1" fill="#c09020"/><rect x="12" y="7" width="2" height="1" fill="#ffe060"/><rect x="14" y="7" width="1" height="1" fill="#c09020"/><rect x="5" y="8" width="1" height="1" fill="#c09020"/><rect x="6" y="8" width="9" height="1" fill="#ffe060"/><rect x="15" y="8" width="1" height="1" fill="#c09020"/><rect x="5" y="9" width="7" height="1" fill="#c09020"/><rect x="12" y="9" width="2" height="1" fill="#ffe060"/><rect x="14" y="9" width="1" height="1" fill="#c09020"/><rect x="9" y="10" width="1" height="1" fill="#304870"/><rect x="12" y="10" width="2" height="1" fill="#c09020"/><rect x="9" y="11" width="1" height="1" fill="#304870"/><rect x="12" y="11" width="1" height="1" fill="#c09020"/><rect x="6" y="12" width="1" height="1" fill="#4068a8"/><rect x="9" y="12" width="1" height="1" fill="#304870"/><rect x="7" y="13" width="1" height="1" fill="#4068a8"/><rect x="9" y="13" width="1" height="1" fill="#304870"/><rect x="0" y="14" width="9" height="1" fill="#4068a8"/><rect x="9" y="14" width="1" height="1" fill="#304870"/><rect x="7" y="15" width="1" height="1" fill="#4068a8"/><rect x="9" y="15" width="1" height="1" fill="#304870"/><rect x="6" y="16" width="1" height="1" fill="#4068a8"/><rect x="9" y="16" width="1" height="1" fill="#304870"/><rect x="9" y="17" width="1" height="1" fill="#304870"/></svg>
<svg class="a" style="left:12px;top:364px" width="10" height="10" viewBox="0 0 10 10" shape-rendering="crispEdges"><rect x="0" y="0" width="7" height="1" fill="#000080"/><rect x="0" y="1" width="1" height="1" fill="#000080"/><rect x="1" y="1" width="5" height="1" fill="#00ff00"/><rect x="6" y="1" width="2" height="1" fill="#000080"/><rect x="0" y="2" width="1" height="1" fill="#000080"/><rect x="1" y="2" width="1" height="1" fill="#00ff00"/><rect x="2" y="2" width="3" height="1" fill="#fff"/><rect x="5" y="2" width="1" height="1" fill="#00ff00"/><rect x="6" y="2" width="1" height="1" fill="#000080"/><rect x="7" y="2" width="1" height="1" fill="#00ff00"/><rect x="8" y="2" width="1" height="1" fill="#000080"/><rect x="0" y="3" width="1" height="1" fill="#000080"/><rect x="1" y="3" width="6" height="1" fill="#00ff00"/><rect x="7" y="3" width="2" height="1" fill="#000080"/><rect x="0" y="4" width="1" height="1" fill="#000080"/><rect x="1" y="4" width="1" height="1" fill="#00ff00"/><rect x="2" y="4" width="6" height="1" fill="#fff"/><rect x="8" y="4" width="1" height="1" fill="#00ff00"/><rect x="9" y="4" width="1" height="1" fill="#000080"/><rect x="0" y="5" width="1" height="1" fill="#000080"/><rect x="1" y="5" width="8" height="1" fill="#00ff00"/><rect x="9" y="5" width="1" height="1" fill="#000080"/><rect x="0" y="6" width="1" height="1" fill="#000080"/><rect x="1" y="6" width="1" height="1" fill="#00ff00"/><rect x="2" y="6" width="6" height="1" fill="#fff"/><rect x="8" y="6" width="1" height="1" fill="#00ff00"/><rect x="9" y="6" width="1" height="1" fill="#000080"/><rect x="0" y="7" width="1" height="1" fill="#000080"/><rect x="1" y="7" width="8" height="1" fill="#00ff00"/><rect x="9" y="7" width="1" height="1" fill="#000080"/><rect x="0" y="8" width="1" height="1" fill="#000080"/><rect x="1" y="8" width="1" height="1" fill="#00ff00"/><rect x="2" y="8" width="6" height="1" fill="#fff"/><rect x="8" y="8" width="1" height="1" fill="#00ff00"/><rect x="9" y="8" width="1" height="1" fill="#000080"/><rect x="0" y="9" width="10" height="1" fill="#000080"/></svg>
<svg class="a" style="left:9px;top:384px" width="16" height="14" viewBox="0 0 16 14" shape-rendering="crispEdges"><rect x="0" y="0" width="6" height="1" fill="#000080"/><rect x="0" y="1" width="1" height="1" fill="#000080"/><rect x="1" y="1" width="5" height="1" fill="#00ff00"/><rect x="6" y="1" width="1" height="1" fill="#000080"/><rect x="0" y="2" width="1" height="1" fill="#000080"/><rect x="1" y="2" width="1" height="1" fill="#00ff00"/><rect x="2" y="2" width="1" height="1" fill="#fff"/><rect x="3" y="2" width="6" height="1" fill="#000080"/><rect x="0" y="3" width="1" height="1" fill="#000080"/><rect x="1" y="3" width="1" height="1" fill="#00ff00"/><rect x="2" y="3" width="1" height="1" fill="#000080"/><rect x="3" y="3" width="5" height="1" fill="#00ff00"/><rect x="8" y="3" width="2" height="1" fill="#000080"/><rect x="0" y="4" width="1" height="1" fill="#000080"/><rect x="1" y="4" width="1" height="1" fill="#00ff00"/><rect x="2" y="4" width="1" height="1" fill="#000080"/><rect x="3" y="4" width="1" height="1" fill="#00ff00"/><rect x="4" y="4" width="1" height="1" fill="#fff"/><rect x="5" y="4" width="7" height="1" fill="#000080"/><rect x="0" y="5" width="1" height="1" fill="#000080"/><rect x="1" y="5" width="1" height="1" fill="#00ff00"/><rect x="2" y="5" width="1" height="1" fill="#000080"/><rect x="3" y="5" width="1" height="1" fill="#00ff00"/><rect x="4" y="5" width="1" height="1" fill="#000080"/><rect x="5" y="5" width="5" height="1" fill="#00ff00"/><rect x="10" y="5" width="3" height="1" fill="#000080"/><rect x="0" y="6" width="1" height="1" fill="#000080"/><rect x="1" y="6" width="1" height="1" fill="#00ff00"/><rect x="2" y="6" width="1" height="1" fill="#000080"/><rect x="3" y="6" width="1" height="1" fill="#00ff00"/><rect x="4" y="6" width="1" height="1" fill="#000080"/><rect x="5" y="6" width="1" height="1" fill="#00ff00"/><rect x="6" y="6" width="3" height="1" fill="#fff"/><rect x="9" y="6" width="1" height="1" fill="#00ff00"/><rect x="10" y="6" width="1" height="1" fill="#000080"/><rect x="11" y="6" width="1" height="1" fill="#00ff00"/><rect x="12" y="6" width="1" height="1" fill="#000080"/><rect x="0" y="7" width="1" height="1" fill="#000080"/><rect x="1" y="7" width="1" height="1" fill="#00ff00"/><rect x="2" y="7" width="1" height="1" fill="#000080"/><rect x="3" y="7" width="1" height="1" fill="#00ff00"/><rect x="4" y="7" width="1" height="1" fill="#000080"/><rect x="5" y="7" width="6" height="1" fill="#00ff00"/><rect x="11" y="7" width="2" height="1" fill="#000080"/><rect x="0" y="8" width="1" height="1" fill="#000080"/><rect x="1" y="8" width="1" height="1" fill="#00ff00"/><rect x="2" y="8" width="1" height="1" fill="#000080"/><rect x="3" y="8" width="1" height="1" fill="#00ff00"/><rect x="4" y="8" width="1" height="1" fill="#000080"/><rect x="5" y="8" width="1" height="1" fill="#00ff00"/><rect x="6" y="8" width="6" height="1" fill="#fff"/><rect x="12" y="8" width="1" height="1" fill="#00ff00"/><rect x="13" y="8" width="1" height="1" fill="#000080"/><rect x="0" y="9" width="3" height="1" fill="#000080"/><rect x="3" y="9" width="1" height="1" fill="#00ff00"/><rect x="4" y="9" width="1" height="1" fill="#000080"/><rect x="5" y="9" width="8" height="1" fill="#00ff00"/><rect x="13" y="9" width="1" height="1" fill="#000080"/><rect x="2" y="10" width="3" height="1" fill="#000080"/><rect x="5" y="10" width="1" height="1" fill="#00ff00"/><rect x="6" y="10" width="6" height="1" fill="#fff"/><rect x="12" y="10" width="1" height="1" fill="#00ff00"/><rect x="13" y="10" width="1" height="1" fill="#000080"/><rect x="4" y="11" width="1" height="1" fill="#000080"/><rect x="5" y="11" width="8" height="1" fill="#00ff00"/><rect x="13" y="11" width="1" height="1" fill="#000080"/><rect x="4" y="12" width="1" height="1" fill="#000080"/><rect x="5" y="12" width="1" height="1" fill="#00ff00"/><rect x="6" y="12" width="6" height="1" fill="#fff"/><rect x="12" y="12" width="1" height="1" fill="#00ff00"/><rect x="13" y="12" width="1" height="1" fill="#000080"/><rect x="4" y="13" width="10" height="1" fill="#000080"/></svg>
<svg class="a" style="left:12px;top:409px" width="11" height="9" viewBox="0 0 11 9" shape-rendering="crispEdges"><rect x="2" y="0" width="7" height="1" fill="#2020e0"/><rect x="0" y="2" width="11" height="1" fill="#2020e0"/><rect x="2" y="4" width="7" height="1" fill="#2020e0"/><rect x="0" y="6" width="11" height="1" fill="#2020e0"/><rect x="2" y="8" width="7" height="1" fill="#2020e0"/></svg>
<svg class="a" style="left:9px;top:430px" width="17" height="11" viewBox="0 0 17 11" shape-rendering="crispEdges"><rect x="0" y="0" width="17" height="1" fill="#000"/><rect x="0" y="1" width="1" height="1" fill="#000"/><rect x="1" y="1" width="2" height="1" fill="#ffff60"/><rect x="3" y="1" width="1" height="1" fill="#fff"/><rect x="4" y="1" width="9" height="1" fill="#ffff60"/><rect x="13" y="1" width="1" height="1" fill="#fff"/><rect x="14" y="1" width="2" height="1" fill="#ffff60"/><rect x="16" y="1" width="1" height="1" fill="#000"/><rect x="0" y="2" width="1" height="1" fill="#000"/><rect x="1" y="2" width="14" height="1" fill="#ffff60"/><rect x="15" y="2" width="1" height="1" fill="#000"/><rect x="1" y="3" width="1" height="1" fill="#000"/><rect x="2" y="3" width="12" height="1" fill="#fff"/><rect x="14" y="3" width="1" height="1" fill="#000"/><rect x="2" y="4" width="1" height="1" fill="#000"/><rect x="3" y="4" width="1" height="1" fill="#fff"/><rect x="4" y="4" width="1" height="1" fill="#000"/><rect x="5" y="4" width="8" height="1" fill="#fff"/><rect x="13" y="4" width="1" height="1" fill="#000"/><rect x="3" y="5" width="1" height="1" fill="#000"/><rect x="4" y="5" width="1" height="1" fill="#fff"/><rect x="5" y="5" width="1" height="1" fill="#000"/><rect x="6" y="5" width="3" height="1" fill="#fff"/><rect x="9" y="5" width="1" height="1" fill="#ff0000"/><rect x="10" y="5" width="2" height="1" fill="#fff"/><rect x="12" y="5" width="1" height="1" fill="#000"/><rect x="4" y="6" width="1" height="1" fill="#000"/><rect x="5" y="6" width="1" height="1" fill="#fff"/><rect x="6" y="6" width="1" height="1" fill="#000"/><rect x="7" y="6" width="1" height="1" fill="#fff"/><rect x="8" y="6" width="3" height="1" fill="#ff0000"/><rect x="11" y="6" width="1" height="1" fill="#000"/><rect x="5" y="7" width="1" height="1" fill="#000"/><rect x="6" y="7" width="1" height="1" fill="#fff"/><rect x="7" y="7" width="1" height="1" fill="#000"/><rect x="8" y="7" width="1" height="1" fill="#fff"/><rect x="9" y="7" width="1" height="1" fill="#ff0000"/><rect x="10" y="7" width="1" height="1" fill="#fff"/><rect x="11" y="7" width="1" height="1" fill="#000"/><rect x="6" y="8" width="1" height="1" fill="#000"/><rect x="7" y="8" width="4" height="1" fill="#fff"/><rect x="11" y="8" width="1" height="1" fill="#000"/><rect x="7" y="9" width="1" height="1" fill="#000"/><rect x="8" y="9" width="2" height="1" fill="#fff"/><rect x="10" y="9" width="2" height="1" fill="#000"/><rect x="8" y="10" width="3" height="1" fill="#000"/></svg>
<svg class="a" style="left:10px;top:456px" width="14" height="14" viewBox="0 0 14 14" shape-rendering="crispEdges"><rect x="1" y="0" width="2" height="1" fill="#000"/><rect x="2" y="1" width="2" height="1" fill="#000"/><rect x="6" y="1" width="7" height="1" fill="#000"/><rect x="0" y="2" width="5" height="1" fill="#000"/><rect x="6" y="2" width="1" height="1" fill="#000"/><rect x="7" y="2" width="4" height="1" fill="#fff"/><rect x="11" y="2" width="3" height="1" fill="#000"/><rect x="0" y="3" width="2" height="1" fill="#000"/><rect x="3" y="3" width="4" height="1" fill="#000"/><rect x="7" y="3" width="4" height="1" fill="#fff"/><rect x="11" y="3" width="3" height="1" fill="#000"/><rect x="0" y="4" width="2" height="1" fill="#000"/><rect x="4" y="4" width="3" height="1" fill="#000"/><rect x="7" y="4" width="4" height="1" fill="#fff"/><rect x="11" y="4" width="3" height="1" fill="#000"/><rect x="0" y="5" width="2" height="1" fill="#000"/><rect x="4" y="5" width="10" height="1" fill="#000"/><rect x="0" y="6" width="14" height="1" fill="#000"/><rect x="0" y="7" width="14" height="1" fill="#000"/><rect x="0" y="8" width="2" height="1" fill="#000"/><rect x="12" y="8" width="2" height="1" fill="#000"/><rect x="0" y="9" width="2" height="1" fill="#000"/><rect x="3" y="9" width="5" height="1" fill="#c0c0c0"/><rect x="12" y="9" width="2" height="1" fill="#000"/><rect x="0" y="10" width="2" height="1" fill="#000"/><rect x="3" y="10" width="2" height="1" fill="#c0c0c0"/><rect x="5" y="10" width="1" height="1" fill="#000"/><rect x="6" y="10" width="2" height="1" fill="#c0c0c0"/><rect x="12" y="10" width="2" height="1" fill="#000"/><rect x="0" y="11" width="2" height="1" fill="#000"/><rect x="3" y="11" width="2" height="1" fill="#c0c0c0"/><rect x="5" y="11" width="1" height="1" fill="#000"/><rect x="6" y="11" width="2" height="1" fill="#c0c0c0"/><rect x="12" y="11" width="2" height="1" fill="#000"/><rect x="0" y="12" width="2" height="1" fill="#000"/><rect x="3" y="12" width="5" height="1" fill="#c0c0c0"/><rect x="12" y="12" width="2" height="1" fill="#000"/><rect x="0" y="13" width="14" height="1" fill="#000"/></svg>
<svg class="a" style="left:9px;top:478px" width="15" height="14" viewBox="0 0 15 14" shape-rendering="crispEdges"><rect x="1" y="0" width="4" height="1" fill="#a0a890"/><rect x="0" y="1" width="1" height="1" fill="#a0a890"/><rect x="1" y="1" width="4" height="1" fill="#d0d8c8"/><rect x="5" y="1" width="1" height="1" fill="#a0a890"/><rect x="0" y="2" width="6" height="1" fill="#a0a890"/><rect x="0" y="3" width="1" height="1" fill="#a0a890"/><rect x="1" y="3" width="4" height="1" fill="#d0d8c8"/><rect x="5" y="3" width="1" height="1" fill="#a0a890"/><rect x="0" y="4" width="6" height="1" fill="#a0a890"/><rect x="0" y="5" width="1" height="1" fill="#a0a890"/><rect x="1" y="5" width="4" height="1" fill="#d0d8c8"/><rect x="5" y="5" width="1" height="1" fill="#a0a890"/><rect x="1" y="6" width="4" height="1" fill="#a0a890"/><rect x="2" y="7" width="1" height="1" fill="#000"/><rect x="8" y="7" width="4" height="1" fill="#a0a890"/><rect x="2" y="8" width="1" height="1" fill="#000"/><rect x="7" y="8" width="1" height="1" fill="#a0a890"/><rect x="8" y="8" width="4" height="1" fill="#d0d8c8"/><rect x="12" y="8" width="1" height="1" fill="#a0a890"/><rect x="2" y="9" width="5" height="1" fill="#000"/><rect x="7" y="9" width="6" height="1" fill="#a0a890"/><rect x="7" y="10" width="1" height="1" fill="#a0a890"/><rect x="8" y="10" width="4" height="1" fill="#d0d8c8"/><rect x="12" y="10" width="1" height="1" fill="#a0a890"/><rect x="7" y="11" width="6" height="1" fill="#a0a890"/><rect x="7" y="12" width="1" height="1" fill="#a0a890"/><rect x="8" y="12" width="4" height="1" fill="#d0d8c8"/><rect x="12" y="12" width="1" height="1" fill="#a0a890"/><rect x="8" y="13" width="4" height="1" fill="#a0a890"/></svg>
<svg class="a" style="left:11px;top:502px" width="13" height="11" viewBox="0 0 13 11" shape-rendering="crispEdges"><rect x="0" y="0" width="13" height="1" fill="#7080a0"/><rect x="0" y="1" width="1" height="1" fill="#7080a0"/><rect x="1" y="1" width="11" height="1" fill="#4070c0"/><rect x="12" y="1" width="1" height="1" fill="#7080a0"/><rect x="0" y="2" width="1" height="1" fill="#7080a0"/><rect x="1" y="2" width="1" height="1" fill="#fff"/><rect x="2" y="2" width="10" height="1" fill="#e0f0ff"/><rect x="12" y="2" width="1" height="1" fill="#7080a0"/><rect x="0" y="3" width="1" height="1" fill="#7080a0"/><rect x="1" y="3" width="1" height="1" fill="#fff"/><rect x="2" y="3" width="10" height="1" fill="#e0f0ff"/><rect x="12" y="3" width="1" height="1" fill="#7080a0"/><rect x="0" y="4" width="1" height="1" fill="#7080a0"/><rect x="1" y="4" width="1" height="1" fill="#fff"/><rect x="2" y="4" width="10" height="1" fill="#e0f0ff"/><rect x="12" y="4" width="1" height="1" fill="#7080a0"/><rect x="0" y="5" width="1" height="1" fill="#7080a0"/><rect x="1" y="5" width="1" height="1" fill="#fff"/><rect x="2" y="5" width="10" height="1" fill="#e0f0ff"/><rect x="12" y="5" width="1" height="1" fill="#7080a0"/><rect x="0" y="6" width="1" height="1" fill="#7080a0"/><rect x="1" y="6" width="1" height="1" fill="#fff"/><rect x="2" y="6" width="10" height="1" fill="#e0f0ff"/><rect x="12" y="6" width="1" height="1" fill="#7080a0"/><rect x="0" y="7" width="1" height="1" fill="#7080a0"/><rect x="1" y="7" width="1" height="1" fill="#fff"/><rect x="2" y="7" width="10" height="1" fill="#e0f0ff"/><rect x="12" y="7" width="1" height="1" fill="#7080a0"/><rect x="0" y="8" width="1" height="1" fill="#7080a0"/><rect x="1" y="8" width="1" height="1" fill="#fff"/><rect x="2" y="8" width="10" height="1" fill="#e0f0ff"/><rect x="12" y="8" width="1" height="1" fill="#7080a0"/><rect x="0" y="9" width="1" height="1" fill="#7080a0"/><rect x="1" y="9" width="1" height="1" fill="#fff"/><rect x="2" y="9" width="10" height="1" fill="#e0f0ff"/><rect x="12" y="9" width="1" height="1" fill="#7080a0"/><rect x="0" y="10" width="13" height="1" fill="#7080a0"/></svg>
<svg class="a" style="left:9px;top:523px" width="16" height="12" viewBox="0 0 16 12" shape-rendering="crispEdges"><rect x="5" y="0" width="6" height="1" fill="#ffff00"/><rect x="5" y="1" width="6" height="1" fill="#ffff00"/><rect x="7" y="2" width="2" height="1" fill="#ffff00"/><rect x="7" y="3" width="2" height="1" fill="#ffff00"/><rect x="0" y="4" width="2" height="1" fill="#ffff00"/><rect x="5" y="4" width="1" height="1" fill="#ffff00"/><rect x="7" y="4" width="2" height="1" fill="#ffff00"/><rect x="10" y="4" width="5" height="1" fill="#ffff00"/><rect x="0" y="5" width="3" height="1" fill="#ffff00"/><rect x="5" y="5" width="1" height="1" fill="#ffff00"/><rect x="7" y="5" width="2" height="1" fill="#ffff00"/><rect x="10" y="5" width="2" height="1" fill="#ffff00"/><rect x="14" y="5" width="2" height="1" fill="#ffff00"/><rect x="0" y="6" width="3" height="1" fill="#ffff00"/><rect x="5" y="6" width="1" height="1" fill="#ffff00"/><rect x="7" y="6" width="2" height="1" fill="#ffff00"/><rect x="10" y="6" width="2" height="1" fill="#ffff00"/><rect x="0" y="7" width="2" height="1" fill="#ffff00"/><rect x="3" y="7" width="1" height="1" fill="#ffff00"/><rect x="5" y="7" width="1" height="1" fill="#ffff00"/><rect x="7" y="7" width="2" height="1" fill="#ffff00"/><rect x="11" y="7" width="3" height="1" fill="#ffff00"/><rect x="0" y="8" width="2" height="1" fill="#ffff00"/><rect x="3" y="8" width="3" height="1" fill="#ffff00"/><rect x="11" y="8" width="4" height="1" fill="#ffff00"/><rect x="0" y="9" width="2" height="1" fill="#ffff00"/><rect x="4" y="9" width="2" height="1" fill="#ffff00"/><rect x="13" y="9" width="3" height="1" fill="#ffff00"/><rect x="0" y="10" width="2" height="1" fill="#ffff00"/><rect x="4" y="10" width="2" height="1" fill="#ffff00"/><rect x="9" y="10" width="2" height="1" fill="#ffff00"/><rect x="13" y="10" width="3" height="1" fill="#ffff00"/><rect x="0" y="11" width="2" height="1" fill="#ffff00"/><rect x="5" y="11" width="1" height="1" fill="#ffff00"/><rect x="10" y="11" width="5" height="1" fill="#ffff00"/></svg>
<svg class="a" style="left:435px;top:158px" width="15" height="16" viewBox="0 0 15 16" shape-rendering="crispEdges"><rect x="0" y="0" width="15" height="1" fill="#0000ff"/><rect x="0" y="1" width="5" height="1" fill="#0000ff"/><rect x="5" y="1" width="5" height="1" fill="#ffffff"/><rect x="10" y="1" width="5" height="1" fill="#0000ff"/><rect x="0" y="2" width="4" height="1" fill="#0000ff"/><rect x="4" y="2" width="1" height="1" fill="#ffffff"/><rect x="5" y="2" width="5" height="1" fill="#000"/><rect x="10" y="2" width="1" height="1" fill="#ffffff"/><rect x="11" y="2" width="4" height="1" fill="#0000ff"/><rect x="0" y="3" width="3" height="1" fill="#0000ff"/><rect x="3" y="3" width="1" height="1" fill="#ffffff"/><rect x="4" y="3" width="5" height="1" fill="#000"/><rect x="9" y="3" width="1" height="1" fill="#ffffff"/><rect x="10" y="3" width="1" height="1" fill="#000"/><rect x="11" y="3" width="1" height="1" fill="#ffffff"/><rect x="12" y="3" width="3" height="1" fill="#0000ff"/><rect x="0" y="4" width="2" height="1" fill="#0000ff"/><rect x="2" y="4" width="1" height="1" fill="#ffffff"/><rect x="3" y="4" width="5" height="1" fill="#000"/><rect x="8" y="4" width="2" height="1" fill="#ffffff"/><rect x="10" y="4" width="2" height="1" fill="#000"/><rect x="12" y="4" width="3" height="1" fill="#0000ff"/><rect x="0" y="5" width="2" height="1" fill="#0000ff"/><rect x="2" y="5" width="8" height="1" fill="#ffffff"/><rect x="10" y="5" width="2" height="1" fill="#000"/><rect x="12" y="5" width="3" height="1" fill="#0000ff"/><rect x="0" y="6" width="2" height="1" fill="#0000ff"/><rect x="2" y="6" width="10" height="1" fill="#000"/><rect x="12" y="6" width="3" height="1" fill="#0000ff"/><rect x="0" y="7" width="2" height="1" fill="#0000ff"/><rect x="2" y="7" width="1" height="1" fill="#ffff00"/><rect x="3" y="7" width="3" height="1" fill="#000"/><rect x="6" y="7" width="1" height="1" fill="#ffff00"/><rect x="7" y="7" width="5" height="1" fill="#000"/><rect x="12" y="7" width="3" height="1" fill="#0000ff"/><rect x="0" y="8" width="3" height="1" fill="#0000ff"/><rect x="3" y="8" width="1" height="1" fill="#ffffff"/><rect x="4" y="8" width="2" height="1" fill="#ffff00"/><rect x="6" y="8" width="1" height="1" fill="#000"/><rect x="7" y="8" width="3" height="1" fill="#ffff00"/><rect x="10" y="8" width="1" height="1" fill="#000"/><rect x="11" y="8" width="4" height="1" fill="#0000ff"/><rect x="0" y="9" width="3" height="1" fill="#0000ff"/><rect x="3" y="9" width="1" height="1" fill="#ffffff"/><rect x="4" y="9" width="2" height="1" fill="#ffff00"/><rect x="6" y="9" width="1" height="1" fill="#000"/><rect x="7" y="9" width="4" height="1" fill="#ffff00"/><rect x="11" y="9" width="4" height="1" fill="#0000ff"/><rect x="0" y="10" width="4" height="1" fill="#0000ff"/><rect x="4" y="10" width="1" height="1" fill="#ffffff"/><rect x="5" y="10" width="1" height="1" fill="#a0a0a0"/><rect x="6" y="10" width="1" height="1" fill="#000"/><rect x="7" y="10" width="1" height="1" fill="#a0a0a0"/><rect x="8" y="10" width="2" height="1" fill="#ffff00"/><rect x="10" y="10" width="1" height="1" fill="#000"/><rect x="11" y="10" width="4" height="1" fill="#0000ff"/><rect x="0" y="11" width="4" height="1" fill="#0000ff"/><rect x="4" y="11" width="1" height="1" fill="#ffffff"/><rect x="5" y="11" width="3" height="1" fill="#a0a0a0"/><rect x="8" y="11" width="1" height="1" fill="#000"/><rect x="9" y="11" width="1" height="1" fill="#0000ff"/><rect x="10" y="11" width="1" height="1" fill="#000"/><rect x="11" y="11" width="4" height="1" fill="#0000ff"/><rect x="0" y="12" width="2" height="1" fill="#0000ff"/><rect x="2" y="12" width="3" height="1" fill="#ffffff"/><rect x="5" y="12" width="3" height="1" fill="#a0a0a0"/><rect x="8" y="12" width="1" height="1" fill="#ffffff"/><rect x="9" y="12" width="1" height="1" fill="#0000ff"/><rect x="10" y="12" width="4" height="1" fill="#000"/><rect x="14" y="12" width="1" height="1" fill="#0000ff"/><rect x="0" y="13" width="2" height="1" fill="#ffffff"/><rect x="2" y="13" width="3" height="1" fill="#00ffff"/><rect x="5" y="13" width="1" height="1" fill="#ffffff"/><rect x="6" y="13" width="8" height="1" fill="#00ffff"/><rect x="14" y="13" width="1" height="1" fill="#000"/><rect x="0" y="14" width="5" height="1" fill="#00ffff"/><rect x="5" y="14" width="2" height="1" fill="#ffffff"/><rect x="7" y="14" width="8" height="1" fill="#00ffff"/><rect x="0" y="15" width="5" height="1" fill="#00ffff"/><rect x="5" y="15" width="1" height="1" fill="#ffffff"/><rect x="6" y="15" width="9" height="1" fill="#00ffff"/></svg>
<svg class="a" style="left:310px;top:454px" width="36" height="36" viewBox="0 0 36 36" shape-rendering="crispEdges"><g shape-rendering="auto"><path d="M5 15.5C5 8.5 11 3.5 19 3.5S33 8.5 33 15.5S27 27.5 19 27.5L20.5 34.5L14 27C9 25.5 5 21 5 15.5Z" fill="#808080"/><path d="M3 13.5C3 6.5 9 1.5 17 1.5S31 6.5 31 13.5S25 25.5 17 25.5L18.5 32.5L12 25C7 23.5 3 19 3 13.5Z" fill="#fff" stroke="#000" stroke-width="1"/></g></svg>
<svg class="a" style="left:322px;top:461px" width="10" height="15" viewBox="0 0 10 15" shape-rendering="crispEdges"><rect x="2" y="0" width="6" height="1" fill="#0000ff"/><rect x="1" y="1" width="8" height="1" fill="#0000ff"/><rect x="0" y="2" width="3" height="1" fill="#0000ff"/><rect x="7" y="2" width="3" height="1" fill="#0000ff"/><rect x="0" y="3" width="3" height="1" fill="#0000ff"/><rect x="7" y="3" width="3" height="1" fill="#0000ff"/><rect x="0" y="4" width="2" height="1" fill="#0000ff"/><rect x="7" y="4" width="3" height="1" fill="#0000ff"/><rect x="6" y="5" width="3" height="1" fill="#0000ff"/><rect x="5" y="6" width="3" height="1" fill="#0000ff"/><rect x="4" y="7" width="3" height="1" fill="#0000ff"/><rect x="4" y="8" width="2" height="1" fill="#0000ff"/><rect x="4" y="9" width="2" height="1" fill="#0000ff"/><rect x="4" y="11" width="3" height="1" fill="#0000ff"/><rect x="3" y="12" width="5" height="1" fill="#0000ff"/><rect x="3" y="13" width="5" height="1" fill="#0000ff"/><rect x="4" y="14" width="3" height="1" fill="#0000ff"/></svg>
<div class="a" style="left:442px;top:629px;width:18px;height:17px;background:#ffff00"></div>
<svg class="a" style="left:443px;top:629px" width="16" height="17" viewBox="0 0 16 17" shape-rendering="crispEdges"><rect x="0" y="0" width="16" height="1" fill="#ffff00"/><rect x="0" y="1" width="16" height="1" fill="#ffff00"/><rect x="0" y="2" width="6" height="1" fill="#ffff00"/><rect x="6" y="2" width="5" height="1" fill="#fff"/><rect x="11" y="2" width="5" height="1" fill="#ffff00"/><rect x="0" y="3" width="5" height="1" fill="#ffff00"/><rect x="5" y="3" width="1" height="1" fill="#fff"/><rect x="6" y="3" width="5" height="1" fill="#000"/><rect x="11" y="3" width="1" height="1" fill="#fff"/><rect x="12" y="3" width="4" height="1" fill="#ffff00"/><rect x="0" y="4" width="4" height="1" fill="#ffff00"/><rect x="4" y="4" width="1" height="1" fill="#fff"/><rect x="5" y="4" width="5" height="1" fill="#000"/><rect x="10" y="4" width="1" height="1" fill="#fff"/><rect x="11" y="4" width="1" height="1" fill="#000"/><rect x="12" y="4" width="1" height="1" fill="#fff"/><rect x="13" y="4" width="3" height="1" fill="#ffff00"/><rect x="0" y="5" width="3" height="1" fill="#ffff00"/><rect x="3" y="5" width="1" height="1" fill="#fff"/><rect x="4" y="5" width="5" height="1" fill="#000"/><rect x="9" y="5" width="2" height="1" fill="#fff"/><rect x="11" y="5" width="2" height="1" fill="#000"/><rect x="13" y="5" width="3" height="1" fill="#ffff00"/><rect x="0" y="6" width="3" height="1" fill="#ffff00"/><rect x="3" y="6" width="8" height="1" fill="#fff"/><rect x="11" y="6" width="2" height="1" fill="#000"/><rect x="13" y="6" width="3" height="1" fill="#ffff00"/><rect x="0" y="7" width="3" height="1" fill="#ffff00"/><rect x="3" y="7" width="10" height="1" fill="#000"/><rect x="13" y="7" width="3" height="1" fill="#ffff00"/><rect x="0" y="8" width="4" height="1" fill="#ffff00"/><rect x="4" y="8" width="3" height="1" fill="#000"/><rect x="7" y="8" width="1" height="1" fill="#ffff00"/><rect x="8" y="8" width="4" height="1" fill="#000"/><rect x="12" y="8" width="4" height="1" fill="#ffff00"/><rect x="0" y="9" width="4" height="1" fill="#ffff00"/><rect x="4" y="9" width="1" height="1" fill="#fff"/><rect x="5" y="9" width="2" height="1" fill="#ffff00"/><rect x="7" y="9" width="1" height="1" fill="#000"/><rect x="8" y="9" width="3" height="1" fill="#ffff00"/><rect x="11" y="9" width="1" height="1" fill="#000"/><rect x="12" y="9" width="4" height="1" fill="#ffff00"/><rect x="0" y="10" width="5" height="1" fill="#ffff00"/><rect x="5" y="10" width="1" height="1" fill="#fff"/><rect x="6" y="10" width="1" height="1" fill="#ffff00"/><rect x="7" y="10" width="1" height="1" fill="#000"/><rect x="8" y="10" width="8" height="1" fill="#ffff00"/><rect x="0" y="11" width="7" height="1" fill="#ffff00"/><rect x="7" y="11" width="1" height="1" fill="#000"/><rect x="8" y="11" width="3" height="1" fill="#ffff00"/><rect x="11" y="11" width="1" height="1" fill="#000"/><rect x="12" y="11" width="4" height="1" fill="#ffff00"/><rect x="0" y="12" width="6" height="1" fill="#ffff00"/><rect x="6" y="12" width="2" height="1" fill="#808080"/><rect x="8" y="12" width="1" height="1" fill="#000"/><rect x="9" y="12" width="1" height="1" fill="#808080"/><rect x="10" y="12" width="1" height="1" fill="#000"/><rect x="11" y="12" width="5" height="1" fill="#ffff00"/><rect x="0" y="13" width="3" height="1" fill="#ffff00"/><rect x="3" y="13" width="3" height="1" fill="#000"/><rect x="6" y="13" width="3" height="1" fill="#808080"/><rect x="9" y="13" width="4" height="1" fill="#000"/><rect x="13" y="13" width="3" height="1" fill="#ffff00"/><rect x="0" y="14" width="3" height="1" fill="#000"/><rect x="3" y="14" width="5" height="1" fill="#808080"/><rect x="8" y="14" width="1" height="1" fill="#ffff00"/><rect x="9" y="14" width="4" height="1" fill="#808080"/><rect x="13" y="14" width="3" height="1" fill="#000"/><rect x="0" y="15" width="16" height="1" fill="#808080"/><rect x="0" y="16" width="16" height="1" fill="#808080"/></svg>
<svg class="a" style="left:535px;top:629px" width="18" height="16" viewBox="0 0 18 16" shape-rendering="crispEdges"><rect x="4" y="0" width="1" height="1" fill="#000"/><rect x="5" y="0" width="5" height="1" fill="#00ff00"/><rect x="10" y="0" width="1" height="1" fill="#000"/><rect x="5" y="1" width="1" height="1" fill="#000"/><rect x="6" y="1" width="3" height="1" fill="#00ff00"/><rect x="9" y="1" width="1" height="1" fill="#000"/><rect x="6" y="2" width="6" height="1" fill="#000"/><rect x="6" y="3" width="7" height="1" fill="#000"/><rect x="4" y="4" width="12" height="1" fill="#000"/><rect x="3" y="5" width="1" height="1" fill="#000"/><rect x="4" y="5" width="5" height="1" fill="#00ff00"/><rect x="9" y="5" width="5" height="1" fill="#000"/><rect x="2" y="6" width="1" height="1" fill="#000"/><rect x="3" y="6" width="4" height="1" fill="#00ff00"/><rect x="7" y="6" width="3" height="1" fill="#000"/><rect x="10" y="6" width="4" height="1" fill="#00ff00"/><rect x="14" y="6" width="1" height="1" fill="#000"/><rect x="1" y="7" width="1" height="1" fill="#000"/><rect x="2" y="7" width="4" height="1" fill="#00ff00"/><rect x="6" y="7" width="2" height="1" fill="#000"/><rect x="8" y="7" width="1" height="1" fill="#00ff00"/><rect x="9" y="7" width="2" height="1" fill="#000"/><rect x="11" y="7" width="3" height="1" fill="#00ff00"/><rect x="14" y="7" width="1" height="1" fill="#000"/><rect x="1" y="8" width="1" height="1" fill="#000"/><rect x="2" y="8" width="4" height="1" fill="#00ff00"/><rect x="6" y="8" width="2" height="1" fill="#000"/><rect x="8" y="8" width="6" height="1" fill="#00ff00"/><rect x="14" y="8" width="1" height="1" fill="#000"/><rect x="0" y="9" width="1" height="1" fill="#000"/><rect x="1" y="9" width="5" height="1" fill="#00ff00"/><rect x="6" y="9" width="2" height="1" fill="#000"/><rect x="8" y="9" width="6" height="1" fill="#00ff00"/><rect x="14" y="9" width="1" height="1" fill="#000"/><rect x="0" y="10" width="1" height="1" fill="#000"/><rect x="1" y="10" width="2" height="1" fill="#00ff00"/><rect x="3" y="10" width="8" height="1" fill="#000"/><rect x="11" y="10" width="3" height="1" fill="#00ff00"/><rect x="14" y="10" width="1" height="1" fill="#000"/><rect x="0" y="11" width="1" height="1" fill="#000"/><rect x="1" y="11" width="5" height="1" fill="#00ff00"/><rect x="6" y="11" width="2" height="1" fill="#000"/><rect x="8" y="11" width="6" height="1" fill="#00ff00"/><rect x="14" y="11" width="1" height="1" fill="#000"/><rect x="1" y="12" width="1" height="1" fill="#000"/><rect x="2" y="12" width="2" height="1" fill="#00ff00"/><rect x="4" y="12" width="8" height="1" fill="#000"/><rect x="12" y="12" width="2" height="1" fill="#00ff00"/><rect x="14" y="12" width="1" height="1" fill="#000"/><rect x="1" y="13" width="1" height="1" fill="#000"/><rect x="2" y="13" width="2" height="1" fill="#00ff00"/><rect x="4" y="13" width="1" height="1" fill="#000"/><rect x="5" y="13" width="3" height="1" fill="#00ff00"/><rect x="8" y="13" width="1" height="1" fill="#000"/><rect x="9" y="13" width="2" height="1" fill="#00ff00"/><rect x="11" y="13" width="1" height="1" fill="#000"/><rect x="12" y="13" width="2" height="1" fill="#00ff00"/><rect x="14" y="13" width="1" height="1" fill="#000"/><rect x="2" y="14" width="1" height="1" fill="#000"/><rect x="3" y="14" width="11" height="1" fill="#00ff00"/><rect x="14" y="14" width="1" height="1" fill="#000"/><rect x="3" y="15" width="11" height="1" fill="#000"/></svg>
<svg class="a" style="left:671px;top:633px" width="20" height="13" viewBox="0 0 20 13" shape-rendering="crispEdges"><rect x="3" y="0" width="1" height="1" fill="#800000"/><rect x="5" y="0" width="2" height="1" fill="#ff0000"/><rect x="13" y="0" width="2" height="1" fill="#ff0000"/><rect x="16" y="0" width="1" height="1" fill="#800000"/><rect x="2" y="1" width="2" height="1" fill="#800000"/><rect x="4" y="1" width="1" height="1" fill="#ff0000"/><rect x="5" y="1" width="2" height="1" fill="#800000"/><rect x="7" y="1" width="6" height="1" fill="#ff0000"/><rect x="13" y="1" width="2" height="1" fill="#800000"/><rect x="15" y="1" width="1" height="1" fill="#ff0000"/><rect x="16" y="1" width="2" height="1" fill="#800000"/><rect x="2" y="2" width="16" height="1" fill="#800000"/><rect x="2" y="3" width="5" height="1" fill="#800000"/><rect x="13" y="3" width="5" height="1" fill="#800000"/><rect x="4" y="4" width="2" height="1" fill="#800000"/><rect x="14" y="4" width="2" height="1" fill="#800000"/><rect x="6" y="5" width="7" height="1" fill="#800000"/><rect x="1" y="6" width="2" height="1" fill="#800000"/><rect x="4" y="6" width="11" height="1" fill="#800000"/><rect x="1" y="7" width="1" height="1" fill="#800000"/><rect x="4" y="7" width="1" height="1" fill="#800000"/><rect x="5" y="7" width="4" height="1" fill="#ff0000"/><rect x="9" y="7" width="6" height="1" fill="#800000"/><rect x="1" y="8" width="1" height="1" fill="#800000"/><rect x="4" y="8" width="11" height="1" fill="#800000"/><rect x="15" y="8" width="1" height="1" fill="#ff0000"/><rect x="1" y="9" width="1" height="1" fill="#800000"/><rect x="4" y="9" width="12" height="1" fill="#800000"/><rect x="1" y="10" width="1" height="1" fill="#800000"/><rect x="4" y="10" width="12" height="1" fill="#800000"/><rect x="4" y="11" width="12" height="1" fill="#800000"/><rect x="1" y="12" width="1" height="1" fill="#800000"/></svg>
<svg class="a" style="left:821px;top:629px" width="18" height="15" viewBox="0 0 18 15" shape-rendering="crispEdges"><rect x="3" y="0" width="11" height="1" fill="#000"/><rect x="2" y="1" width="1" height="1" fill="#000"/><rect x="3" y="1" width="1" height="1" fill="#f8f8e8"/><rect x="4" y="1" width="1" height="1" fill="#000"/><rect x="5" y="1" width="5" height="1" fill="#f8f8e8"/><rect x="10" y="1" width="2" height="1" fill="#000"/><rect x="12" y="1" width="1" height="1" fill="#00ffff"/><rect x="13" y="1" width="1" height="1" fill="#0000ff"/><rect x="14" y="1" width="2" height="1" fill="#000"/><rect x="1" y="2" width="1" height="1" fill="#000"/><rect x="2" y="2" width="2" height="1" fill="#f8f8e8"/><rect x="4" y="2" width="1" height="1" fill="#000"/><rect x="5" y="2" width="5" height="1" fill="#f8f8e8"/><rect x="10" y="2" width="1" height="1" fill="#000"/><rect x="11" y="2" width="1" height="1" fill="#00ffff"/><rect x="12" y="2" width="1" height="1" fill="#0000ff"/><rect x="13" y="2" width="2" height="1" fill="#00ffff"/><rect x="15" y="2" width="2" height="1" fill="#000"/><rect x="0" y="3" width="4" height="1" fill="#000"/><rect x="4" y="3" width="6" height="1" fill="#0000ff"/><rect x="10" y="3" width="1" height="1" fill="#000"/><rect x="11" y="3" width="1" height="1" fill="#00ffff"/><rect x="12" y="3" width="1" height="1" fill="#0000ff"/><rect x="13" y="3" width="2" height="1" fill="#000"/><rect x="15" y="3" width="1" height="1" fill="#00ffff"/><rect x="16" y="3" width="1" height="1" fill="#000"/><rect x="0" y="4" width="1" height="1" fill="#000"/><rect x="1" y="4" width="9" height="1" fill="#f8f8e8"/><rect x="10" y="4" width="1" height="1" fill="#000"/><rect x="11" y="4" width="1" height="1" fill="#00ffff"/><rect x="12" y="4" width="1" height="1" fill="#0000ff"/><rect x="13" y="4" width="2" height="1" fill="#000"/><rect x="15" y="4" width="1" height="1" fill="#00ffff"/><rect x="16" y="4" width="1" height="1" fill="#000"/><rect x="0" y="5" width="1" height="1" fill="#000"/><rect x="1" y="5" width="10" height="1" fill="#0000ff"/><rect x="11" y="5" width="1" height="1" fill="#00ffff"/><rect x="12" y="5" width="1" height="1" fill="#0000ff"/><rect x="13" y="5" width="2" height="1" fill="#f8f8e8"/><rect x="15" y="5" width="1" height="1" fill="#00ffff"/><rect x="16" y="5" width="1" height="1" fill="#000"/><rect x="0" y="6" width="1" height="1" fill="#000"/><rect x="1" y="6" width="10" height="1" fill="#f8f8e8"/><rect x="11" y="6" width="1" height="1" fill="#00ffff"/><rect x="12" y="6" width="1" height="1" fill="#0000ff"/><rect x="13" y="6" width="1" height="1" fill="#f8f8e8"/><rect x="14" y="6" width="1" height="1" fill="#000"/><rect x="15" y="6" width="1" height="1" fill="#00ffff"/><rect x="16" y="6" width="1" height="1" fill="#000"/><rect x="0" y="7" width="1" height="1" fill="#000"/><rect x="1" y="7" width="10" height="1" fill="#0000ff"/><rect x="11" y="7" width="1" height="1" fill="#00ffff"/><rect x="12" y="7" width="1" height="1" fill="#0000ff"/><rect x="13" y="7" width="2" height="1" fill="#000"/><rect x="15" y="7" width="1" height="1" fill="#00ffff"/><rect x="16" y="7" width="1" height="1" fill="#000"/><rect x="0" y="8" width="1" height="1" fill="#000"/><rect x="1" y="8" width="9" height="1" fill="#f8f8e8"/><rect x="10" y="8" width="1" height="1" fill="#000"/><rect x="11" y="8" width="1" height="1" fill="#00ffff"/><rect x="12" y="8" width="1" height="1" fill="#0000ff"/><rect x="13" y="8" width="2" height="1" fill="#000"/><rect x="15" y="8" width="1" height="1" fill="#00ffff"/><rect x="16" y="8" width="1" height="1" fill="#000"/><rect x="0" y="9" width="1" height="1" fill="#000"/><rect x="1" y="9" width="5" height="1" fill="#0000ff"/><rect x="6" y="9" width="1" height="1" fill="#f8f8e8"/><rect x="7" y="9" width="3" height="1" fill="#0000ff"/><rect x="10" y="9" width="1" height="1" fill="#000"/><rect x="11" y="9" width="1" height="1" fill="#00ffff"/><rect x="12" y="9" width="1" height="1" fill="#0000ff"/><rect x="13" y="9" width="3" height="1" fill="#00ffff"/><rect x="16" y="9" width="1" height="1" fill="#000"/><rect x="0" y="10" width="1" height="1" fill="#000"/><rect x="1" y="10" width="9" height="1" fill="#f8f8e8"/><rect x="10" y="10" width="1" height="1" fill="#000"/><rect x="11" y="10" width="1" height="1" fill="#00ffff"/><rect x="12" y="10" width="1" height="1" fill="#0000ff"/><rect x="13" y="10" width="3" height="1" fill="#00ffff"/><rect x="16" y="10" width="1" height="1" fill="#000"/><rect x="0" y="11" width="1" height="1" fill="#000"/><rect x="1" y="11" width="9" height="1" fill="#0000ff"/><rect x="10" y="11" width="1" height="1" fill="#000"/><rect x="11" y="11" width="1" height="1" fill="#00ffff"/><rect x="12" y="11" width="1" height="1" fill="#0000ff"/><rect x="13" y="11" width="2" height="1" fill="#00ffff"/><rect x="15" y="11" width="2" height="1" fill="#000"/><rect x="0" y="12" width="1" height="1" fill="#000"/><rect x="1" y="12" width="9" height="1" fill="#0000ff"/><rect x="10" y="12" width="1" height="1" fill="#000"/><rect x="11" y="12" width="1" height="1" fill="#00ffff"/><rect x="12" y="12" width="3" height="1" fill="#0000ff"/><rect x="15" y="12" width="1" height="1" fill="#000"/><rect x="0" y="13" width="1" height="1" fill="#000"/><rect x="1" y="13" width="9" height="1" fill="#f8f8e8"/><rect x="10" y="13" width="1" height="1" fill="#000"/><rect x="11" y="13" width="1" height="1" fill="#00ffff"/><rect x="12" y="13" width="2" height="1" fill="#0000ff"/><rect x="14" y="13" width="1" height="1" fill="#000"/><rect x="0" y="14" width="15" height="1" fill="#000"/></svg>
<svg class="a" style="left:178px;top:67px" width="8" height="14" viewBox="0 0 8 14" shape-rendering="crispEdges"><rect x="1" y="0" width="4" height="1" fill="#000"/><rect x="0" y="1" width="1" height="1" fill="#000"/><rect x="1" y="1" width="4" height="1" fill="#ffff00"/><rect x="5" y="1" width="1" height="1" fill="#000"/><rect x="0" y="2" width="1" height="1" fill="#000"/><rect x="1" y="2" width="5" height="1" fill="#ffff00"/><rect x="6" y="2" width="1" height="1" fill="#000"/><rect x="1" y="3" width="2" height="1" fill="#000"/><rect x="3" y="3" width="3" height="1" fill="#ffff00"/><rect x="6" y="3" width="1" height="1" fill="#000"/><rect x="2" y="4" width="1" height="1" fill="#fff"/><rect x="3" y="4" width="1" height="1" fill="#000"/><rect x="4" y="4" width="3" height="1" fill="#ffff00"/><rect x="7" y="4" width="1" height="1" fill="#000"/><rect x="0" y="5" width="3" height="1" fill="#fff"/><rect x="3" y="5" width="1" height="1" fill="#000"/><rect x="4" y="5" width="3" height="1" fill="#ffff00"/><rect x="7" y="5" width="1" height="1" fill="#000"/><rect x="0" y="6" width="3" height="1" fill="#fff"/><rect x="3" y="6" width="1" height="1" fill="#000"/><rect x="4" y="6" width="3" height="1" fill="#ffff00"/><rect x="7" y="6" width="1" height="1" fill="#000"/><rect x="0" y="7" width="3" height="1" fill="#fff"/><rect x="3" y="7" width="1" height="1" fill="#000"/><rect x="4" y="7" width="3" height="1" fill="#ffff00"/><rect x="7" y="7" width="1" height="1" fill="#000"/><rect x="0" y="8" width="3" height="1" fill="#fff"/><rect x="3" y="8" width="1" height="1" fill="#000"/><rect x="4" y="8" width="3" height="1" fill="#ffff00"/><rect x="7" y="8" width="1" height="1" fill="#000"/><rect x="2" y="9" width="1" height="1" fill="#fff"/><rect x="3" y="9" width="1" height="1" fill="#000"/><rect x="4" y="9" width="3" height="1" fill="#ffff00"/><rect x="7" y="9" width="1" height="1" fill="#000"/><rect x="1" y="10" width="2" height="1" fill="#000"/><rect x="3" y="10" width="3" height="1" fill="#ffff00"/><rect x="6" y="10" width="1" height="1" fill="#000"/><rect x="0" y="11" width="1" height="1" fill="#000"/><rect x="1" y="11" width="5" height="1" fill="#ffff00"/><rect x="6" y="11" width="1" height="1" fill="#000"/><rect x="0" y="12" width="1" height="1" fill="#000"/><rect x="1" y="12" width="4" height="1" fill="#ffff00"/><rect x="5" y="12" width="1" height="1" fill="#000"/><rect x="1" y="13" width="4" height="1" fill="#000"/></svg>
<div class="a" style="left:186px;top:68px;width:9px;height:11px;background:#fff"></div>
<svg class="a" style="left:185px;top:68px" width="10" height="11" viewBox="0 0 10 11" shape-rendering="crispEdges"><rect x="0" y="0" width="1" height="1" fill="#0000ff"/><rect x="2" y="0" width="1" height="1" fill="#ff0000"/><rect x="4" y="0" width="1" height="1" fill="#0000ff"/><rect x="6" y="0" width="1" height="1" fill="#ff0000"/><rect x="8" y="0" width="1" height="1" fill="#0000ff"/><rect x="0" y="2" width="1" height="1" fill="#ff0000"/><rect x="3" y="2" width="5" height="1" fill="#0000ff"/><rect x="9" y="2" width="1" height="1" fill="#ff0000"/><rect x="3" y="3" width="5" height="1" fill="#ff0000"/><rect x="0" y="4" width="1" height="1" fill="#0000ff"/><rect x="3" y="4" width="5" height="1" fill="#0000ff"/><rect x="9" y="4" width="1" height="1" fill="#0000ff"/><rect x="0" y="6" width="1" height="1" fill="#ff0000"/><rect x="2" y="6" width="6" height="1" fill="#c8c8c8"/><rect x="9" y="6" width="1" height="1" fill="#ff0000"/><rect x="0" y="8" width="1" height="1" fill="#0000ff"/><rect x="2" y="8" width="6" height="1" fill="#c8c8c8"/><rect x="9" y="8" width="1" height="1" fill="#0000ff"/><rect x="0" y="10" width="1" height="1" fill="#ff0000"/><rect x="2" y="10" width="1" height="1" fill="#0000ff"/><rect x="4" y="10" width="1" height="1" fill="#ff0000"/><rect x="6" y="10" width="1" height="1" fill="#0000ff"/><rect x="8" y="10" width="1" height="1" fill="#ff0000"/></svg>
<svg class="a" style="left:9px;top:217px" width="8" height="14" viewBox="0 0 8 14" shape-rendering="crispEdges"><rect x="1" y="0" width="4" height="1" fill="#000"/><rect x="0" y="1" width="1" height="1" fill="#000"/><rect x="1" y="1" width="4" height="1" fill="#ffff00"/><rect x="5" y="1" width="1" height="1" fill="#000"/><rect x="0" y="2" width="1" height="1" fill="#000"/><rect x="1" y="2" width="5" height="1" fill="#ffff00"/><rect x="6" y="2" width="1" height="1" fill="#000"/><rect x="1" y="3" width="2" height="1" fill="#000"/><rect x="3" y="3" width="3" height="1" fill="#ffff00"/><rect x="6" y="3" width="1" height="1" fill="#000"/><rect x="2" y="4" width="1" height="1" fill="#fff"/><rect x="3" y="4" width="1" height="1" fill="#000"/><rect x="4" y="4" width="3" height="1" fill="#ffff00"/><rect x="7" y="4" width="1" height="1" fill="#000"/><rect x="0" y="5" width="3" height="1" fill="#fff"/><rect x="3" y="5" width="1" height="1" fill="#000"/><rect x="4" y="5" width="3" height="1" fill="#ffff00"/><rect x="7" y="5" width="1" height="1" fill="#000"/><rect x="0" y="6" width="3" height="1" fill="#fff"/><rect x="3" y="6" width="1" height="1" fill="#000"/><rect x="4" y="6" width="3" height="1" fill="#ffff00"/><rect x="7" y="6" width="1" height="1" fill="#000"/><rect x="0" y="7" width="3" height="1" fill="#fff"/><rect x="3" y="7" width="1" height="1" fill="#000"/><rect x="4" y="7" width="3" height="1" fill="#ffff00"/><rect x="7" y="7" width="1" height="1" fill="#000"/><rect x="0" y="8" width="3" height="1" fill="#fff"/><rect x="3" y="8" width="1" height="1" fill="#000"/><rect x="4" y="8" width="3" height="1" fill="#ffff00"/><rect x="7" y="8" width="1" height="1" fill="#000"/><rect x="2" y="9" width="1" height="1" fill="#fff"/><rect x="3" y="9" width="1" height="1" fill="#000"/><rect x="4" y="9" width="3" height="1" fill="#ffff00"/><rect x="7" y="9" width="1" height="1" fill="#000"/><rect x="1" y="10" width="2" height="1" fill="#000"/><rect x="3" y="10" width="3" height="1" fill="#ffff00"/><rect x="6" y="10" width="1" height="1" fill="#000"/><rect x="0" y="11" width="1" height="1" fill="#000"/><rect x="1" y="11" width="5" height="1" fill="#ffff00"/><rect x="6" y="11" width="1" height="1" fill="#000"/><rect x="0" y="12" width="1" height="1" fill="#000"/><rect x="1" y="12" width="4" height="1" fill="#ffff00"/><rect x="5" y="12" width="1" height="1" fill="#000"/><rect x="1" y="13" width="4" height="1" fill="#000"/></svg>
<div class="a" style="left:17px;top:218px;width:9px;height:11px;background:#fff"></div>
<svg class="a" style="left:16px;top:218px" width="10" height="11" viewBox="0 0 10 11" shape-rendering="crispEdges"><rect x="0" y="0" width="1" height="1" fill="#0000ff"/><rect x="2" y="0" width="1" height="1" fill="#ff0000"/><rect x="4" y="0" width="1" height="1" fill="#0000ff"/><rect x="6" y="0" width="1" height="1" fill="#ff0000"/><rect x="8" y="0" width="1" height="1" fill="#0000ff"/><rect x="0" y="2" width="1" height="1" fill="#ff0000"/><rect x="3" y="2" width="5" height="1" fill="#0000ff"/><rect x="9" y="2" width="1" height="1" fill="#ff0000"/><rect x="3" y="3" width="5" height="1" fill="#ff0000"/><rect x="0" y="4" width="1" height="1" fill="#0000ff"/><rect x="3" y="4" width="5" height="1" fill="#0000ff"/><rect x="9" y="4" width="1" height="1" fill="#0000ff"/><rect x="0" y="6" width="1" height="1" fill="#ff0000"/><rect x="2" y="6" width="6" height="1" fill="#c8c8c8"/><rect x="9" y="6" width="1" height="1" fill="#ff0000"/><rect x="0" y="8" width="1" height="1" fill="#0000ff"/><rect x="2" y="8" width="6" height="1" fill="#c8c8c8"/><rect x="9" y="8" width="1" height="1" fill="#0000ff"/><rect x="0" y="10" width="1" height="1" fill="#ff0000"/><rect x="2" y="10" width="1" height="1" fill="#0000ff"/><rect x="4" y="10" width="1" height="1" fill="#ff0000"/><rect x="6" y="10" width="1" height="1" fill="#0000ff"/><rect x="8" y="10" width="1" height="1" fill="#ff0000"/></svg>
<svg class="a" style="left:284px;top:67px" width="17" height="16" viewBox="0 0 17 16" shape-rendering="crispEdges"><rect x="2" y="0" width="8" height="1" fill="#000060"/><rect x="0" y="1" width="2" height="1" fill="#e07828"/><rect x="2" y="1" width="1" height="1" fill="#ffe040"/><rect x="3" y="1" width="1" height="1" fill="#000060"/><rect x="4" y="1" width="5" height="1" fill="#000080"/><rect x="9" y="1" width="1" height="1" fill="#000060"/><rect x="0" y="2" width="3" height="1" fill="#e07828"/><rect x="3" y="2" width="1" height="1" fill="#ffe040"/><rect x="4" y="2" width="1" height="1" fill="#000060"/><rect x="5" y="2" width="4" height="1" fill="#000080"/><rect x="9" y="2" width="1" height="1" fill="#000060"/><rect x="0" y="3" width="4" height="1" fill="#e07828"/><rect x="4" y="3" width="2" height="1" fill="#ffe040"/><rect x="6" y="3" width="3" height="1" fill="#000080"/><rect x="9" y="3" width="1" height="1" fill="#000060"/><rect x="14" y="3" width="1" height="1" fill="#50c030"/><rect x="0" y="4" width="4" height="1" fill="#e07828"/><rect x="4" y="4" width="2" height="1" fill="#ffe040"/><rect x="6" y="4" width="3" height="1" fill="#000080"/><rect x="9" y="4" width="1" height="1" fill="#000060"/><rect x="13" y="4" width="2" height="1" fill="#50c030"/><rect x="0" y="5" width="4" height="1" fill="#e07828"/><rect x="4" y="5" width="2" height="1" fill="#ffe040"/><rect x="6" y="5" width="3" height="1" fill="#000080"/><rect x="9" y="5" width="1" height="1" fill="#000060"/><rect x="12" y="5" width="5" height="1" fill="#50c030"/><rect x="0" y="6" width="4" height="1" fill="#e07828"/><rect x="4" y="6" width="2" height="1" fill="#ffe040"/><rect x="6" y="6" width="3" height="1" fill="#000080"/><rect x="9" y="6" width="1" height="1" fill="#000060"/><rect x="11" y="6" width="6" height="1" fill="#50c030"/><rect x="0" y="7" width="1" height="1" fill="#e07828"/><rect x="1" y="7" width="1" height="1" fill="#000060"/><rect x="2" y="7" width="2" height="1" fill="#e07828"/><rect x="4" y="7" width="2" height="1" fill="#ffe040"/><rect x="6" y="7" width="3" height="1" fill="#000080"/><rect x="9" y="7" width="1" height="1" fill="#000060"/><rect x="12" y="7" width="5" height="1" fill="#50c030"/><rect x="0" y="8" width="4" height="1" fill="#e07828"/><rect x="4" y="8" width="2" height="1" fill="#ffe040"/><rect x="6" y="8" width="3" height="1" fill="#000080"/><rect x="9" y="8" width="1" height="1" fill="#000060"/><rect x="13" y="8" width="2" height="1" fill="#50c030"/><rect x="0" y="9" width="4" height="1" fill="#e07828"/><rect x="4" y="9" width="2" height="1" fill="#ffe040"/><rect x="6" y="9" width="3" height="1" fill="#000080"/><rect x="9" y="9" width="1" height="1" fill="#000060"/><rect x="14" y="9" width="1" height="1" fill="#50c030"/><rect x="0" y="10" width="4" height="1" fill="#e07828"/><rect x="4" y="10" width="2" height="1" fill="#ffe040"/><rect x="6" y="10" width="3" height="1" fill="#000080"/><rect x="9" y="10" width="1" height="1" fill="#000060"/><rect x="0" y="11" width="4" height="1" fill="#e07828"/><rect x="4" y="11" width="2" height="1" fill="#ffe040"/><rect x="6" y="11" width="3" height="1" fill="#000080"/><rect x="9" y="11" width="1" height="1" fill="#000060"/><rect x="0" y="12" width="4" height="1" fill="#e07828"/><rect x="4" y="12" width="2" height="1" fill="#ffe040"/><rect x="6" y="12" width="4" height="1" fill="#000060"/><rect x="1" y="13" width="3" height="1" fill="#e07828"/><rect x="4" y="13" width="2" height="1" fill="#ffe040"/><rect x="2" y="14" width="2" height="1" fill="#e07828"/><rect x="4" y="14" width="2" height="1" fill="#ffe040"/><rect x="3" y="15" width="2" height="1" fill="#e07828"/></svg>
</body></html>
